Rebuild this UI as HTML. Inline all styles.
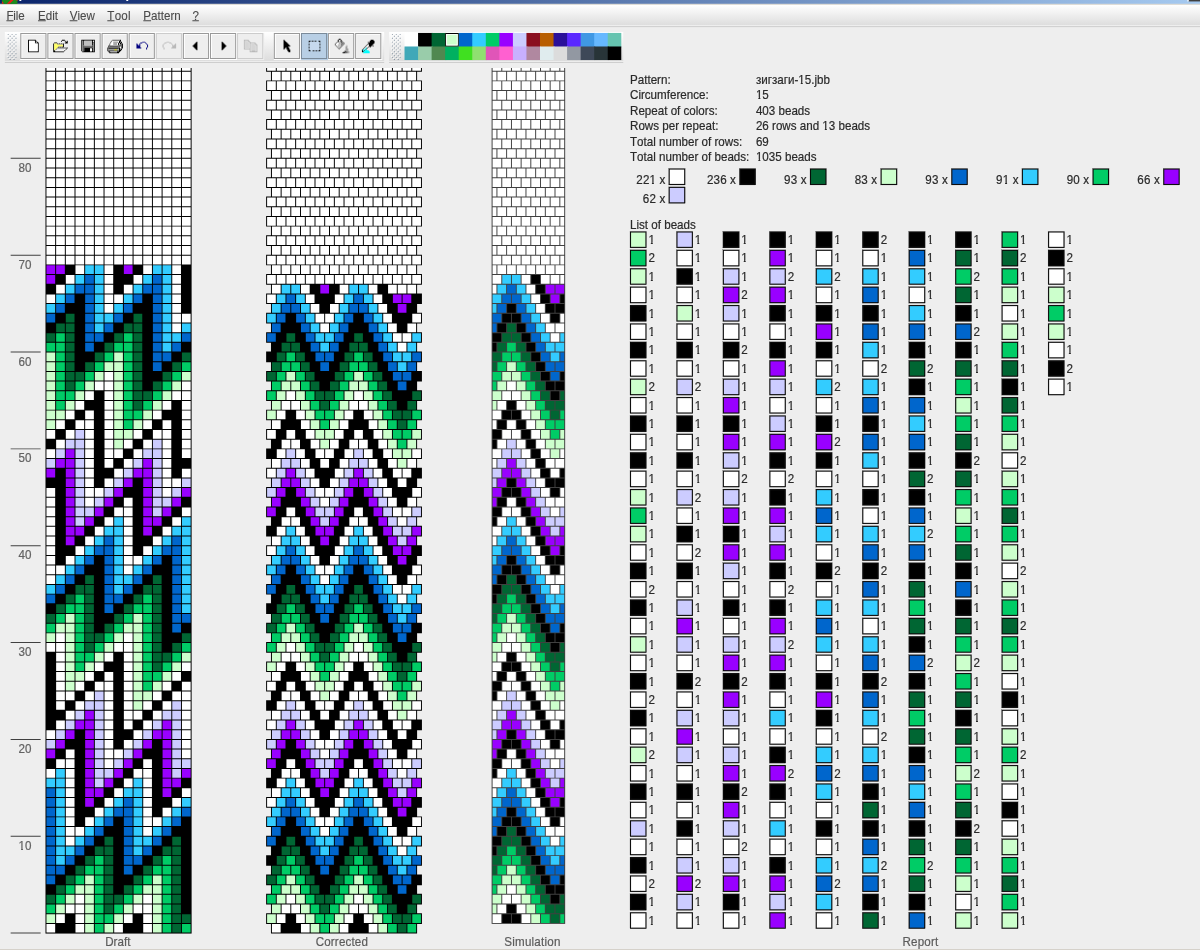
<!DOCTYPE html>
<html lang="en"><head><meta charset="utf-8"><title>JBead - зигзаги-15.jbb</title>
<style>html,body{margin:0;padding:0;background:#eeeeee;overflow:hidden}body{width:1200px;height:951px}svg{display:block;position:absolute;left:0;top:0;will-change:transform}text{white-space:pre}</style></head>
<body>
<svg width="1200" height="951" viewBox="0 0 1240 982" preserveAspectRatio="none">
<defs><linearGradient id="tb" x1="0" y1="0" x2="1" y2="0"><stop offset="0" stop-color="#0a246a"/><stop offset="1" stop-color="#a6caf0"/></linearGradient><linearGradient id="mg" gradientUnits="userSpaceOnUse" x1="0" y1="5" x2="0" y2="28"><stop offset="0" stop-color="#ffffff"/><stop offset="1" stop-color="#dadada"/></linearGradient><linearGradient id="tg" gradientUnits="userSpaceOnUse" x1="0" y1="33" x2="0" y2="65"><stop offset="0" stop-color="#ffffff"/><stop offset="1" stop-color="#dadada"/></linearGradient></defs>
<rect x="0" y="0" width="1240" height="982" fill="#eeeeee"/>
<rect x="0" y="0" width="1240" height="4" fill="url(#tb)"/>
<rect x="0" y="4" width="1240" height="1" fill="#d4d0c8"/>
<rect x="2" y="0" width="16" height="4" fill="#1c8c1c"/>
<path d="M2 1l2 3h-2zM7 4l4 -4h3l-4 4zM16.5 0h1.5v1z" fill="#f01818"/>
<path d="M20 0h2v1h-2zM130.5 0h2v1h-2z" fill="#ffffff"/>
<path d="M1228 0h12v1.5h-12z" fill="#404040"/><path d="M1227 0h1.3v1.5h-1.3z" fill="#ffffff"/>
<rect x="0" y="5" width="1240" height="21" fill="url(#mg)"/>
<rect x="0" y="26" width="1240" height="1" fill="#eeeeee"/>
<rect x="0" y="27" width="1240" height="1" fill="#cccccc"/>
<rect x="0" y="980" width="1240" height="1" fill="#d4d0c8"/>
<rect x="0" y="981" width="1240" height="1" fill="#ffffff"/>
<g font-family="'Liberation Sans','DejaVu Sans',sans-serif" font-size="12" fill="#4a4a4a" stroke="#4a4a4a" stroke-width="0.1" style="font-kerning:none">
<text transform="matrix(1 0 0 1.035 6.6 20.3)" x="0 7.18 9.71 12.23">File</text>
<text transform="matrix(1 0 0 1.035 39.3 20.3)">Edit</text>
<text transform="matrix(1 0 0 1.035 72 20.3)">View</text>
<text transform="matrix(1 0 0 1.035 110.9 20.3)" x="0 7.58 14.51 21.43">Tool</text>
<text transform="matrix(1 0 0 1.035 148.1 20.3)">Pattern</text>
<text transform="matrix(1 0 0 1.035 198.8 20.3)">?</text>
</g>
<path d="M6.6 21h7.3v1h-7.3zM39.3 21h8.0v1h-8.0zM72.0 21h8.0v1h-8.0zM110.9 21h7.3v1h-7.3zM148.1 21h8.0v1h-8.0zM198.8 21h6.7v1h-6.7z" fill="#4a4a4a"/>
<rect x="5" y="33" width="392" height="30" fill="url(#tg)"/>
<rect x="5" y="63" width="392" height="1" fill="#eeeeee"/>
<rect x="5" y="64" width="392" height="1" fill="#cccccc"/>
<path d="M7 34h1v1h-1zM11 34h1v1h-1zM15 34h1v1h-1zM9 36h1v1h-1zM13 36h1v1h-1zM7 38h1v1h-1zM11 38h1v1h-1zM15 38h1v1h-1zM9 40h1v1h-1zM13 40h1v1h-1zM7 42h1v1h-1zM11 42h1v1h-1zM15 42h1v1h-1zM9 44h1v1h-1zM13 44h1v1h-1zM7 46h1v1h-1zM11 46h1v1h-1zM15 46h1v1h-1zM9 48h1v1h-1zM13 48h1v1h-1zM7 50h1v1h-1zM11 50h1v1h-1zM15 50h1v1h-1zM9 52h1v1h-1zM13 52h1v1h-1zM7 54h1v1h-1zM11 54h1v1h-1zM15 54h1v1h-1zM9 56h1v1h-1zM13 56h1v1h-1zM7 58h1v1h-1zM11 58h1v1h-1zM15 58h1v1h-1zM9 60h1v1h-1zM13 60h1v1h-1z" fill="#ffffff"/>
<path d="M8 35h1v1h-1zM12 35h1v1h-1zM16 35h1v1h-1zM10 37h1v1h-1zM14 37h1v1h-1zM8 39h1v1h-1zM12 39h1v1h-1zM16 39h1v1h-1zM10 41h1v1h-1zM14 41h1v1h-1zM8 43h1v1h-1zM12 43h1v1h-1zM16 43h1v1h-1zM10 45h1v1h-1zM14 45h1v1h-1zM8 47h1v1h-1zM12 47h1v1h-1zM16 47h1v1h-1zM10 49h1v1h-1zM14 49h1v1h-1zM8 51h1v1h-1zM12 51h1v1h-1zM16 51h1v1h-1zM10 53h1v1h-1zM14 53h1v1h-1zM8 55h1v1h-1zM12 55h1v1h-1zM16 55h1v1h-1zM10 57h1v1h-1zM14 57h1v1h-1zM8 59h1v1h-1zM12 59h1v1h-1zM16 59h1v1h-1zM10 61h1v1h-1zM14 61h1v1h-1z" fill="#7a8a99"/>
<rect x="21" y="34" width="28" height="28" fill="#eeeeee"/>
<path d="M22 35h25v1h-24v24h-1zM48 34h1v28h-28v-1h27z" fill="#ffffff"/>
<path d="M21 34h27v27h-27zM22 35v25h25v-25z" fill="#999999" fill-rule="evenodd"/>
<rect x="49" y="34" width="28" height="28" fill="#eeeeee"/>
<path d="M50 35h25v1h-24v24h-1zM76 34h1v28h-28v-1h27z" fill="#ffffff"/>
<path d="M49 34h27v27h-27zM50 35v25h25v-25z" fill="#999999" fill-rule="evenodd"/>
<rect x="77" y="34" width="28" height="28" fill="#eeeeee"/>
<path d="M78 35h25v1h-24v24h-1zM104 34h1v28h-28v-1h27z" fill="#ffffff"/>
<path d="M77 34h27v27h-27zM78 35v25h25v-25z" fill="#999999" fill-rule="evenodd"/>
<rect x="105" y="34" width="28" height="28" fill="#eeeeee"/>
<path d="M106 35h25v1h-24v24h-1zM132 34h1v28h-28v-1h27z" fill="#ffffff"/>
<path d="M105 34h27v27h-27zM106 35v25h25v-25z" fill="#999999" fill-rule="evenodd"/>
<rect x="133" y="34" width="28" height="28" fill="#eeeeee"/>
<path d="M134 35h25v1h-24v24h-1zM160 34h1v28h-28v-1h27z" fill="#ffffff"/>
<path d="M133 34h27v27h-27zM134 35v25h25v-25z" fill="#999999" fill-rule="evenodd"/>
<rect x="161" y="34" width="28" height="28" fill="#eeeeee"/>
<path d="M161 34h27v27h-27zM162 35v25h25v-25z" fill="#cccccc" fill-rule="evenodd"/>
<rect x="189" y="34" width="28" height="28" fill="#eeeeee"/>
<path d="M190 35h25v1h-24v24h-1zM216 34h1v28h-28v-1h27z" fill="#ffffff"/>
<path d="M189 34h27v27h-27zM190 35v25h25v-25z" fill="#999999" fill-rule="evenodd"/>
<rect x="217" y="34" width="28" height="28" fill="#eeeeee"/>
<path d="M218 35h25v1h-24v24h-1zM244 34h1v28h-28v-1h27z" fill="#ffffff"/>
<path d="M217 34h27v27h-27zM218 35v25h25v-25z" fill="#999999" fill-rule="evenodd"/>
<rect x="245" y="34" width="28" height="28" fill="#eeeeee"/>
<path d="M245 34h27v27h-27zM246 35v25h25v-25z" fill="#cccccc" fill-rule="evenodd"/>
<rect x="283" y="34" width="28" height="28" fill="#eeeeee"/>
<path d="M284 35h25v1h-24v24h-1zM310 34h1v28h-28v-1h27z" fill="#ffffff"/>
<path d="M283 34h27v27h-27zM284 35v25h25v-25z" fill="#999999" fill-rule="evenodd"/>
<rect x="311" y="34" width="28" height="28" fill="#b8cfe5"/>
<path d="M311 34h27v27h-27zM312 35v25h25v-25z" fill="#7a8a99" fill-rule="evenodd"/>
<rect x="339" y="34" width="28" height="28" fill="#eeeeee"/>
<path d="M340 35h25v1h-24v24h-1zM366 34h1v28h-28v-1h27z" fill="#ffffff"/>
<path d="M339 34h27v27h-27zM340 35v25h25v-25z" fill="#999999" fill-rule="evenodd"/>
<rect x="367" y="34" width="28" height="28" fill="#eeeeee"/>
<path d="M368 35h25v1h-24v24h-1zM394 34h1v28h-28v-1h27z" fill="#ffffff"/>
<path d="M367 34h27v27h-27zM368 35v25h25v-25z" fill="#999999" fill-rule="evenodd"/>
<rect x="402" y="33" width="242" height="30" fill="url(#tg)"/>
<rect x="402" y="63" width="242" height="1" fill="#eeeeee"/>
<rect x="402" y="64" width="242" height="1" fill="#cccccc"/>
<path d="M404 34h1v1h-1zM408 34h1v1h-1zM412 34h1v1h-1zM406 36h1v1h-1zM410 36h1v1h-1zM404 38h1v1h-1zM408 38h1v1h-1zM412 38h1v1h-1zM406 40h1v1h-1zM410 40h1v1h-1zM404 42h1v1h-1zM408 42h1v1h-1zM412 42h1v1h-1zM406 44h1v1h-1zM410 44h1v1h-1zM404 46h1v1h-1zM408 46h1v1h-1zM412 46h1v1h-1zM406 48h1v1h-1zM410 48h1v1h-1zM404 50h1v1h-1zM408 50h1v1h-1zM412 50h1v1h-1zM406 52h1v1h-1zM410 52h1v1h-1zM404 54h1v1h-1zM408 54h1v1h-1zM412 54h1v1h-1zM406 56h1v1h-1zM410 56h1v1h-1zM404 58h1v1h-1zM408 58h1v1h-1zM412 58h1v1h-1zM406 60h1v1h-1zM410 60h1v1h-1z" fill="#ffffff"/>
<path d="M405 35h1v1h-1zM409 35h1v1h-1zM413 35h1v1h-1zM407 37h1v1h-1zM411 37h1v1h-1zM405 39h1v1h-1zM409 39h1v1h-1zM413 39h1v1h-1zM407 41h1v1h-1zM411 41h1v1h-1zM405 43h1v1h-1zM409 43h1v1h-1zM413 43h1v1h-1zM407 45h1v1h-1zM411 45h1v1h-1zM405 47h1v1h-1zM409 47h1v1h-1zM413 47h1v1h-1zM407 49h1v1h-1zM411 49h1v1h-1zM405 51h1v1h-1zM409 51h1v1h-1zM413 51h1v1h-1zM407 53h1v1h-1zM411 53h1v1h-1zM405 55h1v1h-1zM409 55h1v1h-1zM413 55h1v1h-1zM407 57h1v1h-1zM411 57h1v1h-1zM405 59h1v1h-1zM409 59h1v1h-1zM413 59h1v1h-1zM407 61h1v1h-1zM411 61h1v1h-1z" fill="#7a8a99"/>
<rect x="418" y="34" width="15" height="15" fill="#ffffff"/>
<rect x="432" y="34" width="15" height="15" fill="#000000"/>
<rect x="446" y="34" width="15" height="15" fill="#006633"/>
<rect x="460" y="34" width="15" height="15" fill="#ccffcc"/>
<rect x="474" y="34" width="15" height="15" fill="#0066cc"/>
<rect x="488" y="34" width="15" height="15" fill="#33ccff"/>
<rect x="502" y="34" width="15" height="15" fill="#00cc66"/>
<rect x="516" y="34" width="15" height="15" fill="#9900ff"/>
<rect x="530" y="34" width="15" height="15" fill="#ccccff"/>
<rect x="544" y="34" width="15" height="15" fill="#8a0e1e"/>
<rect x="558" y="34" width="15" height="15" fill="#b85e00"/>
<rect x="572" y="34" width="15" height="15" fill="#2a109a"/>
<rect x="586" y="34" width="15" height="15" fill="#5a28ff"/>
<rect x="600" y="34" width="15" height="15" fill="#4098e4"/>
<rect x="614" y="34" width="15" height="15" fill="#66b8ff"/>
<rect x="628" y="34" width="14" height="15" fill="#66c4b0"/>
<rect x="418" y="48" width="15" height="14" fill="#40a8b8"/>
<rect x="432" y="48" width="15" height="14" fill="#99ccaa"/>
<rect x="446" y="48" width="15" height="14" fill="#508850"/>
<rect x="460" y="48" width="15" height="14" fill="#00b060"/>
<rect x="474" y="48" width="15" height="14" fill="#40e020"/>
<rect x="488" y="48" width="15" height="14" fill="#90e070"/>
<rect x="502" y="48" width="15" height="14" fill="#e055b8"/>
<rect x="516" y="48" width="15" height="14" fill="#ff60d0"/>
<rect x="530" y="48" width="15" height="14" fill="#c8b0ff"/>
<rect x="544" y="48" width="15" height="14" fill="#b088a0"/>
<rect x="558" y="48" width="15" height="14" fill="#e0ecee"/>
<rect x="572" y="48" width="15" height="14" fill="#dcdcdc"/>
<rect x="586" y="48" width="15" height="14" fill="#9298a2"/>
<rect x="600" y="48" width="15" height="14" fill="#3e4858"/>
<rect x="614" y="48" width="15" height="14" fill="#283438"/>
<rect x="628" y="48" width="14" height="14" fill="#000000"/>
<path d="M460 34h14v14h-14zM461 35v12h12v-12z" fill="#000000" fill-rule="evenodd"/>
<path d="M461 35h12v12h-12zM462 36v10h10v-10z" fill="#ffffff" fill-rule="evenodd"/>
<path d="M29 41h8v1h-8zM29 42h1v1h-1zM36 42h2v1h-2zM29 43h1v1h-1zM36 43h1v1h-1zM38 43h1v1h-1zM29 44h1v1h-1zM36 44h4v1h-4zM29 45h1v1h-1zM39 45h1v1h-1zM29 46h1v1h-1zM39 46h1v1h-1zM29 47h1v1h-1zM39 47h1v1h-1zM29 48h1v1h-1zM39 48h1v1h-1zM29 49h1v1h-1zM39 49h1v1h-1zM29 50h1v1h-1zM39 50h1v1h-1zM29 51h1v1h-1zM39 51h1v1h-1zM29 52h1v1h-1zM39 52h1v1h-1zM29 53h11v1h-11zM64 41h3v1h-3zM63 42h1v1h-1zM67 42h1v1h-1zM69 42h1v1h-1zM68 43h2v1h-2zM56 44h3v1h-3zM67 44h3v1h-3zM55 45h1v1h-1zM59 45h1v1h-1zM61 45h1v1h-1zM63 45h1v1h-1zM65 45h1v1h-1zM55 46h1v1h-1zM65 46h1v1h-1zM55 47h1v1h-1zM65 47h1v1h-1zM55 48h1v1h-1zM60 48h1v1h-1zM62 48h1v1h-1zM64 48h2v1h-2zM55 49h1v1h-1zM59 49h1v1h-1zM69 49h1v1h-1zM55 50h1v1h-1zM58 50h1v1h-1zM68 50h1v1h-1zM55 51h1v1h-1zM57 51h1v1h-1zM67 51h1v1h-1zM55 52h2v1h-2zM66 52h1v1h-1zM55 53h11v1h-11zM84 41h14v1h-14zM84 42h1v1h-1zM86 42h1v1h-1zM95 42h1v1h-1zM97 42h1v1h-1zM84 43h1v1h-1zM86 43h1v1h-1zM95 43h3v1h-3zM84 44h1v1h-1zM86 44h1v1h-1zM95 44h1v1h-1zM97 44h1v1h-1zM84 45h1v1h-1zM86 45h1v1h-1zM95 45h1v1h-1zM97 45h1v1h-1zM84 46h1v1h-1zM86 46h1v1h-1zM95 46h1v1h-1zM97 46h1v1h-1zM84 47h1v1h-1zM97 47h1v1h-1zM84 48h1v1h-1zM97 48h1v1h-1zM84 49h1v1h-1zM87 49h9v1h-9zM97 49h1v1h-1zM84 50h1v1h-1zM87 50h6v1h-6zM95 50h1v1h-1zM97 50h1v1h-1zM84 51h1v1h-1zM87 51h6v1h-6zM95 51h1v1h-1zM97 51h1v1h-1zM84 52h1v1h-1zM87 52h6v1h-6zM95 52h1v1h-1zM97 52h1v1h-1zM85 53h13v1h-13zM124 41h1v1h-1zM115 42h1v1h-1zM123 42h2v1h-2zM123 43h1v1h-1zM125 43h1v1h-1zM114 44h1v1h-1zM122 44h4v1h-4zM122 45h1v1h-1zM124 45h1v1h-1zM126 45h1v1h-1zM113 46h1v1h-1zM122 46h2v1h-2zM126 46h1v1h-1zM112 47h1v1h-1zM125 47h2v1h-2zM112 48h1v1h-1zM122 48h1v1h-1zM126 48h1v1h-1zM111 49h1v1h-1zM123 49h1v1h-1zM126 49h1v1h-1zM111 50h1v1h-1zM123 50h1v1h-1zM125 50h1v1h-1zM111 51h1v1h-1zM123 51h3v1h-3zM111 52h1v1h-1zM123 52h2v1h-2zM112 53h2v1h-2zM121 53h3v1h-3zM113 54h10v1h-10zM203 43h1v1h-1zM202 44h2v1h-2zM201 45h3v1h-3zM200 46h4v1h-4zM199 47h5v1h-5zM200 48h4v1h-4zM201 49h3v1h-3zM202 50h2v1h-2zM203 51h1v1h-1zM229 43h1v1h-1zM229 44h2v1h-2zM229 45h3v1h-3zM229 46h4v1h-4zM229 47h5v1h-5zM229 48h4v1h-4zM229 49h3v1h-3zM229 50h2v1h-2zM229 51h1v1h-1zM293 41h1v1h-1zM293 42h2v1h-2zM293 43h3v1h-3zM293 44h4v1h-4zM293 45h5v1h-5zM293 46h6v1h-6zM293 47h7v1h-7zM293 48h5v1h-5zM293 49h2v1h-2zM296 49h3v1h-3zM293 50h1v1h-1zM296 50h3v1h-3zM297 51h3v1h-3zM297 52h3v1h-3zM298 53h2v1h-2zM319 42h2v1h-2zM322 42h2v1h-2zM325 42h2v1h-2zM329 42h2v1h-2zM319 43h1v1h-1zM330 43h1v1h-1zM319 45h1v1h-1zM330 45h1v1h-1zM319 46h1v1h-1zM330 46h1v1h-1zM319 48h1v1h-1zM330 48h1v1h-1zM319 49h1v1h-1zM330 49h1v1h-1zM319 51h1v1h-1zM330 51h1v1h-1zM319 52h2v1h-2zM323 52h2v1h-2zM326 52h2v1h-2zM329 52h2v1h-2zM350 40h2v1h-2zM349 41h1v1h-1zM352 41h1v1h-1zM349 42h1v1h-1zM352 42h1v1h-1zM349 43h1v1h-1zM352 43h1v1h-1zM350 44h1v1h-1zM352 44h1v1h-1zM356 53h2v1h-2zM354 54h3v1h-3zM383 41h3v1h-3zM382 42h5v1h-5zM380 43h1v1h-1zM382 43h5v1h-5zM381 44h6v1h-6zM380 45h6v1h-6zM379 46h1v1h-1zM381 46h4v1h-4zM378 47h1v1h-1zM381 47h3v1h-3zM385 47h1v1h-1zM377 48h1v1h-1zM380 48h1v1h-1zM382 48h1v1h-1zM376 49h1v1h-1zM379 49h1v1h-1zM375 50h1v1h-1zM378 50h1v1h-1zM374 51h1v1h-1zM377 51h1v1h-1zM374 52h1v1h-1zM376 52h1v1h-1zM374 53h2v1h-2z" fill="#000000"/>
<path d="M30 42h6v1h-6zM30 43h6v1h-6zM37 43h1v1h-1zM30 44h6v1h-6zM30 45h9v1h-9zM30 46h9v1h-9zM30 47h9v1h-9zM30 48h9v1h-9zM30 49h9v1h-9zM30 50h9v1h-9zM30 51h9v1h-9zM30 52h9v1h-9zM59 50h9v1h-9zM66 51h1v1h-1zM57 52h9v1h-9zM96 42h1v1h-1zM93 50h2v1h-2zM93 51h2v1h-2zM93 52h2v1h-2zM116 42h7v1h-7zM115 43h2v1h-2zM122 43h1v1h-1zM115 44h7v1h-7zM114 45h3v1h-3zM121 45h1v1h-1zM123 45h1v1h-1zM114 46h8v1h-8zM124 48h1v1h-1zM124 49h1v1h-1zM112 51h6v1h-6zM121 51h2v1h-2zM350 43h1v1h-1zM348 44h2v1h-2zM347 45h3v1h-3zM347 46h2v1h-2zM348 47h1v1h-1zM380 46h1v1h-1zM379 47h2v1h-2zM378 48h2v1h-2zM377 49h1v1h-1zM376 50h1v1h-1z" fill="#ffffff"/>
<path d="M56 45h3v1h-3zM56 46h9v1h-9zM56 47h9v1h-9zM56 48h4v1h-4zM56 49h3v1h-3zM56 50h2v1h-2zM56 51h1v1h-1z" fill="#ffff66"/>
<path d="M60 45h1v1h-1zM62 45h1v1h-1zM64 45h1v1h-1zM61 48h1v1h-1zM63 48h1v1h-1zM85 42h1v1h-1zM85 43h1v1h-1zM85 44h1v1h-1zM96 44h1v1h-1zM85 45h1v1h-1zM96 45h1v1h-1zM85 46h1v1h-1zM96 46h1v1h-1zM85 47h1v1h-1zM96 47h1v1h-1zM85 48h1v1h-1zM96 48h1v1h-1zM85 49h1v1h-1zM96 49h1v1h-1zM85 50h1v1h-1zM96 50h1v1h-1zM85 51h1v1h-1zM96 51h1v1h-1zM85 52h1v1h-1zM96 52h1v1h-1zM353 43h1v1h-1zM353 44h2v1h-2zM352 45h3v1h-3zM352 46h2v1h-2zM352 47h1v1h-1zM351 48h1v1h-1zM350 49h1v1h-1zM355 53h1v1h-1zM359 53h1v1h-1zM359 54h1v1h-1z" fill="#808080"/>
<path d="M60 49h9v1h-9zM87 47h8v1h-8zM116 41h8v1h-8zM114 43h1v1h-1zM117 43h5v1h-5zM113 45h1v1h-1zM117 45h4v1h-4zM125 45h1v1h-1zM124 46h2v1h-2zM113 47h12v1h-12zM113 48h9v1h-9zM123 48h1v1h-1zM125 48h1v1h-1zM122 49h1v1h-1zM125 49h1v1h-1zM122 50h1v1h-1zM124 50h1v1h-1zM122 52h1v1h-1zM351 42h1v1h-1zM353 42h1v1h-1zM348 43h1v1h-1zM354 43h1v1h-1zM347 44h1v1h-1zM355 44h1v1h-1zM346 45h1v1h-1zM355 45h1v1h-1zM346 46h1v1h-1zM354 46h1v1h-1zM347 47h1v1h-1zM353 47h1v1h-1zM348 48h1v1h-1zM352 48h1v1h-1zM349 49h1v1h-1zM351 49h1v1h-1zM350 50h1v1h-1zM358 52h1v1h-1zM358 53h1v1h-1zM357 54h2v1h-2z" fill="#606060"/>
<path d="M58 51h8v1h-8zM357 46h2v1h-2zM357 47h1v1h-1z" fill="#e0e0e0"/>
<path d="M87 42h8v1h-8zM87 43h8v1h-8zM87 44h8v1h-8zM87 45h8v1h-8zM87 46h8v1h-8zM114 53h7v1h-7zM351 43h1v1h-1zM351 44h1v1h-1zM350 45h2v1h-2zM349 46h3v1h-3zM349 47h3v1h-3zM349 48h2v1h-2z" fill="#c0c0c0"/>
<path d="M86 47h1v1h-1zM95 47h1v1h-1zM86 48h10v1h-10zM86 49h1v1h-1zM86 50h1v1h-1zM86 51h1v1h-1zM86 52h1v1h-1zM112 49h10v1h-10zM112 50h10v1h-10zM112 52h10v1h-10z" fill="#404040"/>
<path d="M118 51h3v1h-3z" fill="#d0d000"/>
<path d="M147 43h3v1h-3zM145 44h2v1h-2zM150 44h1v1h-1zM141 45h1v1h-1zM144 45h1v1h-1zM151 45h1v1h-1zM141 46h2v1h-2zM144 46h1v1h-1zM152 46h1v1h-1zM141 47h4v1h-4zM152 47h1v1h-1zM141 48h4v1h-4zM152 48h1v1h-1zM141 49h5v1h-5zM151 49h1v1h-1zM151 50h1v1h-1z" fill="#000080"/>
<path d="M172 43h3v1h-3zM170 44h2v1h-2zM175 44h2v1h-2zM169 45h1v1h-1zM177 45h1v1h-1zM181 45h1v1h-1zM168 46h1v1h-1zM178 46h1v1h-1zM180 46h2v1h-2zM168 47h1v1h-1zM178 47h4v1h-4zM168 48h1v1h-1zM178 48h4v1h-4zM169 49h1v1h-1zM177 49h5v1h-5zM169 50h1v1h-1zM252 41h5v1h-5zM252 42h1v1h-1zM256 42h2v1h-2zM252 43h1v1h-1zM254 43h2v1h-2zM257 43h2v1h-2zM252 44h1v1h-1zM258 44h6v1h-6zM252 45h1v1h-1zM254 45h3v1h-3zM258 45h1v1h-1zM263 45h2v1h-2zM252 46h1v1h-1zM258 46h1v1h-1zM260 46h3v1h-3zM264 46h2v1h-2zM252 47h1v1h-1zM254 47h3v1h-3zM258 47h1v1h-1zM265 47h1v1h-1zM252 48h1v1h-1zM258 48h1v1h-1zM260 48h4v1h-4zM265 48h1v1h-1zM252 49h1v1h-1zM258 49h1v1h-1zM265 49h1v1h-1zM252 50h7v1h-7zM260 50h4v1h-4zM265 50h1v1h-1zM258 51h1v1h-1zM265 51h1v1h-1zM258 52h1v1h-1zM260 52h4v1h-4zM265 52h1v1h-1zM258 53h8v1h-8z" fill="#b9b9b9"/>
<path d="M253 42h3v1h-3zM253 43h1v1h-1zM256 43h1v1h-1zM253 44h5v1h-5zM253 45h1v1h-1zM257 45h1v1h-1zM259 45h4v1h-4zM253 46h5v1h-5zM259 46h1v1h-1zM263 46h1v1h-1zM253 47h1v1h-1zM257 47h1v1h-1zM259 47h6v1h-6zM253 48h5v1h-5zM259 48h1v1h-1zM264 48h1v1h-1zM253 49h5v1h-5zM259 49h6v1h-6zM259 50h1v1h-1zM264 50h1v1h-1zM259 51h6v1h-6zM259 52h1v1h-1zM264 52h1v1h-1z" fill="#d6d6d6"/>
<path d="M320 43h10v1h-10zM320 44h10v1h-10zM320 45h10v1h-10zM320 46h10v1h-10zM320 47h10v1h-10zM320 48h10v1h-10zM320 49h10v1h-10zM320 50h10v1h-10zM320 51h10v1h-10z" fill="#c6d9ee"/>
<path d="M358 47h1v1h-1zM357 48h2v1h-2zM357 49h2v1h-2zM357 50h3v1h-3zM357 51h3v1h-3zM356 52h2v1h-2zM359 52h1v1h-1zM360 53h1v1h-1zM360 54h1v1h-1z" fill="#a0a0a0"/>
<path d="M378 49h1v1h-1zM377 50h1v1h-1zM375 51h2v1h-2zM378 51h1v1h-1zM375 52h1v1h-1zM377 52h4v1h-4zM376 53h6v1h-6zM375 54h7v1h-7z" fill="#00ffff"/>
<rect x="47" y="70.2166" width="151" height="893.7834" fill="#000000"/>
<path d="M48 954h9v9h-9zM78 954h9v9h-9zM118 954h9v9h-9zM148 954h9v9h-9zM58 944h9v9h-9zM78 944h9v9h-9zM128 944h9v9h-9zM148 944h9v9h-9zM68 934h9v9h-9zM78 934h9v9h-9zM138 934h9v9h-9zM148 934h9v9h-9zM78 924h9v9h-9zM148 924h9v9h-9zM68 864h9v9h-9zM68 854h9v9h-9zM78 854h9v9h-9zM148 854h9v9h-9zM68 844h9v9h-9zM88 844h9v9h-9zM148 844h9v9h-9zM158 844h9v9h-9zM68 834h9v9h-9zM98 834h9v9h-9zM148 834h9v9h-9zM168 834h9v9h-9zM68 824h9v9h-9zM108 824h9v9h-9zM148 824h9v9h-9zM178 824h9v9h-9zM68 814h9v9h-9zM118 814h9v9h-9zM148 814h9v9h-9zM188 814h9v9h-9zM68 804h9v9h-9zM128 804h9v9h-9zM148 804h9v9h-9zM48 794h9v9h-9zM68 794h9v9h-9zM138 794h9v9h-9zM148 794h9v9h-9zM58 784h9v9h-9zM68 784h9v9h-9zM108 784h9v9h-9zM148 784h9v9h-9zM68 774h9v9h-9zM108 774h9v9h-9zM118 774h9v9h-9zM188 774h9v9h-9zM108 764h9v9h-9zM128 764h9v9h-9zM188 764h9v9h-9zM48 754h9v9h-9zM108 754h9v9h-9zM138 754h9v9h-9zM188 754h9v9h-9zM58 744h9v9h-9zM108 744h9v9h-9zM128 744h9v9h-9zM148 744h9v9h-9zM188 744h9v9h-9zM68 734h9v9h-9zM108 734h9v9h-9zM128 734h9v9h-9zM138 734h9v9h-9zM158 734h9v9h-9zM188 734h9v9h-9zM58 724h9v9h-9zM78 724h9v9h-9zM108 724h9v9h-9zM128 724h9v9h-9zM148 724h9v9h-9zM168 724h9v9h-9zM188 724h9v9h-9zM58 714h9v9h-9zM68 714h9v9h-9zM88 714h9v9h-9zM108 714h9v9h-9zM128 714h9v9h-9zM158 714h9v9h-9zM178 714h9v9h-9zM188 714h9v9h-9zM58 704h9v9h-9zM78 704h9v9h-9zM98 704h9v9h-9zM108 704h9v9h-9zM128 704h9v9h-9zM168 704h9v9h-9zM188 704h9v9h-9zM58 694h9v9h-9zM88 694h9v9h-9zM108 694h9v9h-9zM128 694h9v9h-9zM178 694h9v9h-9zM58 684h9v9h-9zM98 684h9v9h-9zM128 684h9v9h-9zM188 684h9v9h-9zM58 674h9v9h-9zM108 674h9v9h-9zM128 674h9v9h-9zM48 664h9v9h-9zM58 664h9v9h-9zM118 664h9v9h-9zM128 664h9v9h-9zM58 654h9v9h-9zM128 654h9v9h-9zM48 594h9v9h-9zM48 584h9v9h-9zM58 584h9v9h-9zM128 584h9v9h-9zM48 574h9v9h-9zM68 574h9v9h-9zM128 574h9v9h-9zM138 574h9v9h-9zM48 564h9v9h-9zM78 564h9v9h-9zM128 564h9v9h-9zM148 564h9v9h-9zM48 554h9v9h-9zM88 554h9v9h-9zM128 554h9v9h-9zM158 554h9v9h-9zM48 544h9v9h-9zM98 544h9v9h-9zM128 544h9v9h-9zM168 544h9v9h-9zM48 534h9v9h-9zM108 534h9v9h-9zM128 534h9v9h-9zM178 534h9v9h-9zM48 524h9v9h-9zM118 524h9v9h-9zM128 524h9v9h-9zM188 524h9v9h-9zM48 514h9v9h-9zM88 514h9v9h-9zM128 514h9v9h-9zM48 504h9v9h-9zM88 504h9v9h-9zM98 504h9v9h-9zM168 504h9v9h-9zM88 494h9v9h-9zM108 494h9v9h-9zM168 494h9v9h-9zM178 494h9v9h-9zM88 484h9v9h-9zM118 484h9v9h-9zM168 484h9v9h-9zM188 484h9v9h-9zM88 474h9v9h-9zM108 474h9v9h-9zM128 474h9v9h-9zM168 474h9v9h-9zM48 464h9v9h-9zM88 464h9v9h-9zM108 464h9v9h-9zM118 464h9v9h-9zM138 464h9v9h-9zM168 464h9v9h-9zM188 464h9v9h-9zM58 454h9v9h-9zM88 454h9v9h-9zM108 454h9v9h-9zM128 454h9v9h-9zM148 454h9v9h-9zM168 454h9v9h-9zM188 454h9v9h-9zM48 444h9v9h-9zM68 444h9v9h-9zM88 444h9v9h-9zM108 444h9v9h-9zM138 444h9v9h-9zM158 444h9v9h-9zM168 444h9v9h-9zM188 444h9v9h-9zM58 434h9v9h-9zM78 434h9v9h-9zM88 434h9v9h-9zM108 434h9v9h-9zM148 434h9v9h-9zM168 434h9v9h-9zM188 434h9v9h-9zM68 424h9v9h-9zM88 424h9v9h-9zM108 424h9v9h-9zM158 424h9v9h-9zM188 424h9v9h-9zM78 414h9v9h-9zM108 414h9v9h-9zM168 414h9v9h-9zM188 414h9v9h-9zM88 404h9v9h-9zM108 404h9v9h-9zM178 404h9v9h-9zM188 404h9v9h-9zM98 394h9v9h-9zM108 394h9v9h-9zM188 394h9v9h-9zM108 384h9v9h-9zM178 334h9v9h-9zM178 324h9v9h-9zM188 324h9v9h-9zM108 314h9v9h-9zM178 314h9v9h-9zM48 304h9v9h-9zM108 304h9v9h-9zM118 304h9v9h-9zM178 304h9v9h-9zM58 294h9v9h-9zM108 294h9v9h-9zM128 294h9v9h-9zM178 294h9v9h-9zM68 284h9v9h-9zM108 284h9v9h-9zM138 284h9v9h-9zM178 284h9v9h-9zM78 274h9v9h-9zM108 274h9v9h-9zM148 274h9v9h-9zM178 274h9v9h-9zM48 264h9v9h-9zM58 264h9v9h-9zM68 264h9v9h-9zM78 264h9v9h-9zM88 264h9v9h-9zM98 264h9v9h-9zM108 264h9v9h-9zM118 264h9v9h-9zM128 264h9v9h-9zM138 264h9v9h-9zM148 264h9v9h-9zM158 264h9v9h-9zM168 264h9v9h-9zM178 264h9v9h-9zM188 264h9v9h-9zM48 254h9v9h-9zM58 254h9v9h-9zM68 254h9v9h-9zM78 254h9v9h-9zM88 254h9v9h-9zM98 254h9v9h-9zM108 254h9v9h-9zM118 254h9v9h-9zM128 254h9v9h-9zM138 254h9v9h-9zM148 254h9v9h-9zM158 254h9v9h-9zM168 254h9v9h-9zM178 254h9v9h-9zM188 254h9v9h-9zM48 244h9v9h-9zM58 244h9v9h-9zM68 244h9v9h-9zM78 244h9v9h-9zM88 244h9v9h-9zM98 244h9v9h-9zM108 244h9v9h-9zM118 244h9v9h-9zM128 244h9v9h-9zM138 244h9v9h-9zM148 244h9v9h-9zM158 244h9v9h-9zM168 244h9v9h-9zM178 244h9v9h-9zM188 244h9v9h-9zM48 234h9v9h-9zM58 234h9v9h-9zM68 234h9v9h-9zM78 234h9v9h-9zM88 234h9v9h-9zM98 234h9v9h-9zM108 234h9v9h-9zM118 234h9v9h-9zM128 234h9v9h-9zM138 234h9v9h-9zM148 234h9v9h-9zM158 234h9v9h-9zM168 234h9v9h-9zM178 234h9v9h-9zM188 234h9v9h-9zM48 224h9v9h-9zM58 224h9v9h-9zM68 224h9v9h-9zM78 224h9v9h-9zM88 224h9v9h-9zM98 224h9v9h-9zM108 224h9v9h-9zM118 224h9v9h-9zM128 224h9v9h-9zM138 224h9v9h-9zM148 224h9v9h-9zM158 224h9v9h-9zM168 224h9v9h-9zM178 224h9v9h-9zM188 224h9v9h-9zM48 214h9v9h-9zM58 214h9v9h-9zM68 214h9v9h-9zM78 214h9v9h-9zM88 214h9v9h-9zM98 214h9v9h-9zM108 214h9v9h-9zM118 214h9v9h-9zM128 214h9v9h-9zM138 214h9v9h-9zM148 214h9v9h-9zM158 214h9v9h-9zM168 214h9v9h-9zM178 214h9v9h-9zM188 214h9v9h-9zM48 204h9v9h-9zM58 204h9v9h-9zM68 204h9v9h-9zM78 204h9v9h-9zM88 204h9v9h-9zM98 204h9v9h-9zM108 204h9v9h-9zM118 204h9v9h-9zM128 204h9v9h-9zM138 204h9v9h-9zM148 204h9v9h-9zM158 204h9v9h-9zM168 204h9v9h-9zM178 204h9v9h-9zM188 204h9v9h-9zM48 194h9v9h-9zM58 194h9v9h-9zM68 194h9v9h-9zM78 194h9v9h-9zM88 194h9v9h-9zM98 194h9v9h-9zM108 194h9v9h-9zM118 194h9v9h-9zM128 194h9v9h-9zM138 194h9v9h-9zM148 194h9v9h-9zM158 194h9v9h-9zM168 194h9v9h-9zM178 194h9v9h-9zM188 194h9v9h-9zM48 184h9v9h-9zM58 184h9v9h-9zM68 184h9v9h-9zM78 184h9v9h-9zM88 184h9v9h-9zM98 184h9v9h-9zM108 184h9v9h-9zM118 184h9v9h-9zM128 184h9v9h-9zM138 184h9v9h-9zM148 184h9v9h-9zM158 184h9v9h-9zM168 184h9v9h-9zM178 184h9v9h-9zM188 184h9v9h-9zM48 174h9v9h-9zM58 174h9v9h-9zM68 174h9v9h-9zM78 174h9v9h-9zM88 174h9v9h-9zM98 174h9v9h-9zM108 174h9v9h-9zM118 174h9v9h-9zM128 174h9v9h-9zM138 174h9v9h-9zM148 174h9v9h-9zM158 174h9v9h-9zM168 174h9v9h-9zM178 174h9v9h-9zM188 174h9v9h-9zM48 164h9v9h-9zM58 164h9v9h-9zM68 164h9v9h-9zM78 164h9v9h-9zM88 164h9v9h-9zM98 164h9v9h-9zM108 164h9v9h-9zM118 164h9v9h-9zM128 164h9v9h-9zM138 164h9v9h-9zM148 164h9v9h-9zM158 164h9v9h-9zM168 164h9v9h-9zM178 164h9v9h-9zM188 164h9v9h-9zM48 154h9v9h-9zM58 154h9v9h-9zM68 154h9v9h-9zM78 154h9v9h-9zM88 154h9v9h-9zM98 154h9v9h-9zM108 154h9v9h-9zM118 154h9v9h-9zM128 154h9v9h-9zM138 154h9v9h-9zM148 154h9v9h-9zM158 154h9v9h-9zM168 154h9v9h-9zM178 154h9v9h-9zM188 154h9v9h-9zM48 144h9v9h-9zM58 144h9v9h-9zM68 144h9v9h-9zM78 144h9v9h-9zM88 144h9v9h-9zM98 144h9v9h-9zM108 144h9v9h-9zM118 144h9v9h-9zM128 144h9v9h-9zM138 144h9v9h-9zM148 144h9v9h-9zM158 144h9v9h-9zM168 144h9v9h-9zM178 144h9v9h-9zM188 144h9v9h-9zM48 134h9v9h-9zM58 134h9v9h-9zM68 134h9v9h-9zM78 134h9v9h-9zM88 134h9v9h-9zM98 134h9v9h-9zM108 134h9v9h-9zM118 134h9v9h-9zM128 134h9v9h-9zM138 134h9v9h-9zM148 134h9v9h-9zM158 134h9v9h-9zM168 134h9v9h-9zM178 134h9v9h-9zM188 134h9v9h-9zM48 124h9v9h-9zM58 124h9v9h-9zM68 124h9v9h-9zM78 124h9v9h-9zM88 124h9v9h-9zM98 124h9v9h-9zM108 124h9v9h-9zM118 124h9v9h-9zM128 124h9v9h-9zM138 124h9v9h-9zM148 124h9v9h-9zM158 124h9v9h-9zM168 124h9v9h-9zM178 124h9v9h-9zM188 124h9v9h-9zM48 114h9v9h-9zM58 114h9v9h-9zM68 114h9v9h-9zM78 114h9v9h-9zM88 114h9v9h-9zM98 114h9v9h-9zM108 114h9v9h-9zM118 114h9v9h-9zM128 114h9v9h-9zM138 114h9v9h-9zM148 114h9v9h-9zM158 114h9v9h-9zM168 114h9v9h-9zM178 114h9v9h-9zM188 114h9v9h-9zM48 104h9v9h-9zM58 104h9v9h-9zM68 104h9v9h-9zM78 104h9v9h-9zM88 104h9v9h-9zM98 104h9v9h-9zM108 104h9v9h-9zM118 104h9v9h-9zM128 104h9v9h-9zM138 104h9v9h-9zM148 104h9v9h-9zM158 104h9v9h-9zM168 104h9v9h-9zM178 104h9v9h-9zM188 104h9v9h-9zM48 94h9v9h-9zM58 94h9v9h-9zM68 94h9v9h-9zM78 94h9v9h-9zM88 94h9v9h-9zM98 94h9v9h-9zM108 94h9v9h-9zM118 94h9v9h-9zM128 94h9v9h-9zM138 94h9v9h-9zM148 94h9v9h-9zM158 94h9v9h-9zM168 94h9v9h-9zM178 94h9v9h-9zM188 94h9v9h-9zM48 84h9v9h-9zM58 84h9v9h-9zM68 84h9v9h-9zM78 84h9v9h-9zM88 84h9v9h-9zM98 84h9v9h-9zM108 84h9v9h-9zM118 84h9v9h-9zM128 84h9v9h-9zM138 84h9v9h-9zM148 84h9v9h-9zM158 84h9v9h-9zM168 84h9v9h-9zM178 84h9v9h-9zM188 84h9v9h-9zM48 74h9v9h-9zM58 74h9v9h-9zM68 74h9v9h-9zM78 74h9v9h-9zM88 74h9v9h-9zM98 74h9v9h-9zM108 74h9v9h-9zM118 74h9v9h-9zM128 74h9v9h-9zM138 74h9v9h-9zM148 74h9v9h-9zM158 74h9v9h-9zM168 74h9v9h-9zM178 74h9v9h-9zM188 74h9v9h-9zM48 70.2166h9v2.7834h-9zM58 70.2166h9v2.7834h-9zM68 70.2166h9v2.7834h-9zM78 70.2166h9v2.7834h-9zM88 70.2166h9v2.7834h-9zM98 70.2166h9v2.7834h-9zM108 70.2166h9v2.7834h-9zM118 70.2166h9v2.7834h-9zM128 70.2166h9v2.7834h-9zM138 70.2166h9v2.7834h-9zM148 70.2166h9v2.7834h-9zM158 70.2166h9v2.7834h-9zM168 70.2166h9v2.7834h-9zM178 70.2166h9v2.7834h-9zM188 70.2166h9v2.7834h-9z" fill="#ffffff"/>
<path d="M58 954h9v9h-9zM68 954h9v9h-9zM128 954h9v9h-9zM138 954h9v9h-9zM68 944h9v9h-9zM138 944h9v9h-9zM188 934h9v9h-9zM188 924h9v9h-9zM48 914h9v9h-9zM118 914h9v9h-9zM188 914h9v9h-9zM58 904h9v9h-9zM118 904h9v9h-9zM128 904h9v9h-9zM188 904h9v9h-9zM68 894h9v9h-9zM118 894h9v9h-9zM138 894h9v9h-9zM188 894h9v9h-9zM78 884h9v9h-9zM118 884h9v9h-9zM148 884h9v9h-9zM188 884h9v9h-9zM88 874h9v9h-9zM118 874h9v9h-9zM158 874h9v9h-9zM188 874h9v9h-9zM98 864h9v9h-9zM118 864h9v9h-9zM168 864h9v9h-9zM188 864h9v9h-9zM108 854h9v9h-9zM118 854h9v9h-9zM178 854h9v9h-9zM188 854h9v9h-9zM78 844h9v9h-9zM118 844h9v9h-9zM188 844h9v9h-9zM78 834h9v9h-9zM88 834h9v9h-9zM158 834h9v9h-9zM78 824h9v9h-9zM98 824h9v9h-9zM158 824h9v9h-9zM168 824h9v9h-9zM78 814h9v9h-9zM108 814h9v9h-9zM158 814h9v9h-9zM178 814h9v9h-9zM78 804h9v9h-9zM118 804h9v9h-9zM158 804h9v9h-9zM188 804h9v9h-9zM78 794h9v9h-9zM128 794h9v9h-9zM158 794h9v9h-9zM48 784h9v9h-9zM78 784h9v9h-9zM138 784h9v9h-9zM158 784h9v9h-9zM58 774h9v9h-9zM78 774h9v9h-9zM148 774h9v9h-9zM158 774h9v9h-9zM68 764h9v9h-9zM78 764h9v9h-9zM118 764h9v9h-9zM158 764h9v9h-9zM78 754h9v9h-9zM118 754h9v9h-9zM128 754h9v9h-9zM48 744h9v9h-9zM118 744h9v9h-9zM138 744h9v9h-9zM48 734h9v9h-9zM58 734h9v9h-9zM118 734h9v9h-9zM148 734h9v9h-9zM48 724h9v9h-9zM68 724h9v9h-9zM118 724h9v9h-9zM158 724h9v9h-9zM48 714h9v9h-9zM78 714h9v9h-9zM118 714h9v9h-9zM168 714h9v9h-9zM48 704h9v9h-9zM88 704h9v9h-9zM118 704h9v9h-9zM178 704h9v9h-9zM48 694h9v9h-9zM98 694h9v9h-9zM118 694h9v9h-9zM188 694h9v9h-9zM48 684h9v9h-9zM108 684h9v9h-9zM118 684h9v9h-9zM48 674h9v9h-9zM118 674h9v9h-9zM168 664h9v9h-9zM168 654h9v9h-9zM178 654h9v9h-9zM98 644h9v9h-9zM168 644h9v9h-9zM188 644h9v9h-9zM98 634h9v9h-9zM108 634h9v9h-9zM168 634h9v9h-9zM48 624h9v9h-9zM98 624h9v9h-9zM118 624h9v9h-9zM168 624h9v9h-9zM58 614h9v9h-9zM98 614h9v9h-9zM128 614h9v9h-9zM168 614h9v9h-9zM68 604h9v9h-9zM98 604h9v9h-9zM138 604h9v9h-9zM168 604h9v9h-9zM78 594h9v9h-9zM98 594h9v9h-9zM148 594h9v9h-9zM168 594h9v9h-9zM88 584h9v9h-9zM98 584h9v9h-9zM158 584h9v9h-9zM168 584h9v9h-9zM58 574h9v9h-9zM98 574h9v9h-9zM168 574h9v9h-9zM58 564h9v9h-9zM68 564h9v9h-9zM138 564h9v9h-9zM58 554h9v9h-9zM78 554h9v9h-9zM138 554h9v9h-9zM148 554h9v9h-9zM58 544h9v9h-9zM88 544h9v9h-9zM138 544h9v9h-9zM158 544h9v9h-9zM58 534h9v9h-9zM98 534h9v9h-9zM138 534h9v9h-9zM168 534h9v9h-9zM58 524h9v9h-9zM108 524h9v9h-9zM138 524h9v9h-9zM178 524h9v9h-9zM58 514h9v9h-9zM118 514h9v9h-9zM138 514h9v9h-9zM188 514h9v9h-9zM58 504h9v9h-9zM128 504h9v9h-9zM138 504h9v9h-9zM48 494h9v9h-9zM58 494h9v9h-9zM98 494h9v9h-9zM138 494h9v9h-9zM58 484h9v9h-9zM98 484h9v9h-9zM108 484h9v9h-9zM178 484h9v9h-9zM98 474h9v9h-9zM118 474h9v9h-9zM178 474h9v9h-9zM188 474h9v9h-9zM98 464h9v9h-9zM128 464h9v9h-9zM178 464h9v9h-9zM48 454h9v9h-9zM98 454h9v9h-9zM138 454h9v9h-9zM178 454h9v9h-9zM58 444h9v9h-9zM98 444h9v9h-9zM148 444h9v9h-9zM178 444h9v9h-9zM68 434h9v9h-9zM98 434h9v9h-9zM158 434h9v9h-9zM178 434h9v9h-9zM78 424h9v9h-9zM98 424h9v9h-9zM168 424h9v9h-9zM178 424h9v9h-9zM88 414h9v9h-9zM98 414h9v9h-9zM178 414h9v9h-9zM98 404h9v9h-9zM148 394h9v9h-9zM148 384h9v9h-9zM158 384h9v9h-9zM78 374h9v9h-9zM148 374h9v9h-9zM168 374h9v9h-9zM78 364h9v9h-9zM88 364h9v9h-9zM148 364h9v9h-9zM178 364h9v9h-9zM78 354h9v9h-9zM98 354h9v9h-9zM148 354h9v9h-9zM188 354h9v9h-9zM78 344h9v9h-9zM108 344h9v9h-9zM148 344h9v9h-9zM48 334h9v9h-9zM78 334h9v9h-9zM118 334h9v9h-9zM148 334h9v9h-9zM58 324h9v9h-9zM78 324h9v9h-9zM128 324h9v9h-9zM148 324h9v9h-9zM68 314h9v9h-9zM78 314h9v9h-9zM138 314h9v9h-9zM148 314h9v9h-9zM188 314h9v9h-9zM78 304h9v9h-9zM148 304h9v9h-9zM188 304h9v9h-9zM48 294h9v9h-9zM118 294h9v9h-9zM188 294h9v9h-9zM58 284h9v9h-9zM118 284h9v9h-9zM128 284h9v9h-9zM188 284h9v9h-9zM68 274h9v9h-9zM118 274h9v9h-9zM138 274h9v9h-9zM188 274h9v9h-9z" fill="#000000"/>
<path d="M178 954h9v9h-9zM178 944h9v9h-9zM188 944h9v9h-9zM108 934h9v9h-9zM178 934h9v9h-9zM48 924h9v9h-9zM108 924h9v9h-9zM118 924h9v9h-9zM178 924h9v9h-9zM58 914h9v9h-9zM108 914h9v9h-9zM128 914h9v9h-9zM178 914h9v9h-9zM68 904h9v9h-9zM108 904h9v9h-9zM138 904h9v9h-9zM178 904h9v9h-9zM78 894h9v9h-9zM108 894h9v9h-9zM148 894h9v9h-9zM178 894h9v9h-9zM88 884h9v9h-9zM108 884h9v9h-9zM158 884h9v9h-9zM178 884h9v9h-9zM98 874h9v9h-9zM108 874h9v9h-9zM168 874h9v9h-9zM178 874h9v9h-9zM108 864h9v9h-9zM178 864h9v9h-9zM158 684h9v9h-9zM158 674h9v9h-9zM168 674h9v9h-9zM88 664h9v9h-9zM158 664h9v9h-9zM178 664h9v9h-9zM88 654h9v9h-9zM98 654h9v9h-9zM158 654h9v9h-9zM188 654h9v9h-9zM88 644h9v9h-9zM108 644h9v9h-9zM158 644h9v9h-9zM48 634h9v9h-9zM88 634h9v9h-9zM118 634h9v9h-9zM158 634h9v9h-9zM58 624h9v9h-9zM88 624h9v9h-9zM128 624h9v9h-9zM158 624h9v9h-9zM68 614h9v9h-9zM88 614h9v9h-9zM138 614h9v9h-9zM158 614h9v9h-9zM78 604h9v9h-9zM88 604h9v9h-9zM148 604h9v9h-9zM158 604h9v9h-9zM88 594h9v9h-9zM158 594h9v9h-9zM138 414h9v9h-9zM138 404h9v9h-9zM148 404h9v9h-9zM68 394h9v9h-9zM138 394h9v9h-9zM158 394h9v9h-9zM68 384h9v9h-9zM78 384h9v9h-9zM138 384h9v9h-9zM168 384h9v9h-9zM68 374h9v9h-9zM88 374h9v9h-9zM138 374h9v9h-9zM178 374h9v9h-9zM68 364h9v9h-9zM98 364h9v9h-9zM138 364h9v9h-9zM188 364h9v9h-9zM68 354h9v9h-9zM108 354h9v9h-9zM138 354h9v9h-9zM48 344h9v9h-9zM68 344h9v9h-9zM118 344h9v9h-9zM138 344h9v9h-9zM58 334h9v9h-9zM68 334h9v9h-9zM128 334h9v9h-9zM138 334h9v9h-9zM68 324h9v9h-9zM138 324h9v9h-9z" fill="#006633"/>
<path d="M88 954h9v9h-9zM108 954h9v9h-9zM158 954h9v9h-9zM48 944h9v9h-9zM88 944h9v9h-9zM118 944h9v9h-9zM158 944h9v9h-9zM58 934h9v9h-9zM88 934h9v9h-9zM128 934h9v9h-9zM158 934h9v9h-9zM68 924h9v9h-9zM88 924h9v9h-9zM138 924h9v9h-9zM158 924h9v9h-9zM78 914h9v9h-9zM88 914h9v9h-9zM148 914h9v9h-9zM158 914h9v9h-9zM88 904h9v9h-9zM158 904h9v9h-9zM138 724h9v9h-9zM138 714h9v9h-9zM148 714h9v9h-9zM68 704h9v9h-9zM138 704h9v9h-9zM158 704h9v9h-9zM68 694h9v9h-9zM78 694h9v9h-9zM138 694h9v9h-9zM168 694h9v9h-9zM68 684h9v9h-9zM88 684h9v9h-9zM138 684h9v9h-9zM178 684h9v9h-9zM68 674h9v9h-9zM98 674h9v9h-9zM138 674h9v9h-9zM188 674h9v9h-9zM68 664h9v9h-9zM108 664h9v9h-9zM138 664h9v9h-9zM48 654h9v9h-9zM68 654h9v9h-9zM118 654h9v9h-9zM138 654h9v9h-9zM58 644h9v9h-9zM68 644h9v9h-9zM128 644h9v9h-9zM138 644h9v9h-9zM68 634h9v9h-9zM138 634h9v9h-9zM118 454h9v9h-9zM118 444h9v9h-9zM128 444h9v9h-9zM48 434h9v9h-9zM118 434h9v9h-9zM138 434h9v9h-9zM48 424h9v9h-9zM58 424h9v9h-9zM118 424h9v9h-9zM148 424h9v9h-9zM48 414h9v9h-9zM68 414h9v9h-9zM118 414h9v9h-9zM158 414h9v9h-9zM48 404h9v9h-9zM78 404h9v9h-9zM118 404h9v9h-9zM168 404h9v9h-9zM48 394h9v9h-9zM88 394h9v9h-9zM118 394h9v9h-9zM178 394h9v9h-9zM48 384h9v9h-9zM98 384h9v9h-9zM118 384h9v9h-9zM188 384h9v9h-9zM48 374h9v9h-9zM108 374h9v9h-9zM118 374h9v9h-9zM48 364h9v9h-9zM118 364h9v9h-9z" fill="#ccffcc"/>
<path d="M48 904h9v9h-9zM48 894h9v9h-9zM58 894h9v9h-9zM128 894h9v9h-9zM48 884h9v9h-9zM68 884h9v9h-9zM128 884h9v9h-9zM138 884h9v9h-9zM48 874h9v9h-9zM78 874h9v9h-9zM128 874h9v9h-9zM148 874h9v9h-9zM48 864h9v9h-9zM88 864h9v9h-9zM128 864h9v9h-9zM158 864h9v9h-9zM48 854h9v9h-9zM98 854h9v9h-9zM128 854h9v9h-9zM168 854h9v9h-9zM48 844h9v9h-9zM108 844h9v9h-9zM128 844h9v9h-9zM178 844h9v9h-9zM48 834h9v9h-9zM118 834h9v9h-9zM128 834h9v9h-9zM188 834h9v9h-9zM48 824h9v9h-9zM128 824h9v9h-9zM48 814h9v9h-9zM178 644h9v9h-9zM178 634h9v9h-9zM188 634h9v9h-9zM108 624h9v9h-9zM178 624h9v9h-9zM48 614h9v9h-9zM108 614h9v9h-9zM118 614h9v9h-9zM178 614h9v9h-9zM58 604h9v9h-9zM108 604h9v9h-9zM128 604h9v9h-9zM178 604h9v9h-9zM68 594h9v9h-9zM108 594h9v9h-9zM138 594h9v9h-9zM178 594h9v9h-9zM78 584h9v9h-9zM108 584h9v9h-9zM148 584h9v9h-9zM178 584h9v9h-9zM88 574h9v9h-9zM108 574h9v9h-9zM158 574h9v9h-9zM178 574h9v9h-9zM98 564h9v9h-9zM108 564h9v9h-9zM168 564h9v9h-9zM178 564h9v9h-9zM108 554h9v9h-9zM178 554h9v9h-9zM158 374h9v9h-9zM158 364h9v9h-9zM168 364h9v9h-9zM88 354h9v9h-9zM158 354h9v9h-9zM178 354h9v9h-9zM88 344h9v9h-9zM98 344h9v9h-9zM158 344h9v9h-9zM188 344h9v9h-9zM88 334h9v9h-9zM108 334h9v9h-9zM158 334h9v9h-9zM48 324h9v9h-9zM88 324h9v9h-9zM118 324h9v9h-9zM158 324h9v9h-9zM58 314h9v9h-9zM88 314h9v9h-9zM128 314h9v9h-9zM158 314h9v9h-9zM68 304h9v9h-9zM88 304h9v9h-9zM138 304h9v9h-9zM158 304h9v9h-9zM78 294h9v9h-9zM88 294h9v9h-9zM148 294h9v9h-9zM158 294h9v9h-9zM88 284h9v9h-9zM158 284h9v9h-9z" fill="#0066cc"/>
<path d="M58 884h9v9h-9zM58 874h9v9h-9zM68 874h9v9h-9zM138 874h9v9h-9zM58 864h9v9h-9zM78 864h9v9h-9zM138 864h9v9h-9zM148 864h9v9h-9zM58 854h9v9h-9zM88 854h9v9h-9zM138 854h9v9h-9zM158 854h9v9h-9zM58 844h9v9h-9zM98 844h9v9h-9zM138 844h9v9h-9zM168 844h9v9h-9zM58 834h9v9h-9zM108 834h9v9h-9zM138 834h9v9h-9zM178 834h9v9h-9zM58 824h9v9h-9zM118 824h9v9h-9zM138 824h9v9h-9zM188 824h9v9h-9zM58 814h9v9h-9zM128 814h9v9h-9zM138 814h9v9h-9zM48 804h9v9h-9zM58 804h9v9h-9zM138 804h9v9h-9zM58 794h9v9h-9zM188 624h9v9h-9zM188 614h9v9h-9zM48 604h9v9h-9zM118 604h9v9h-9zM188 604h9v9h-9zM58 594h9v9h-9zM118 594h9v9h-9zM128 594h9v9h-9zM188 594h9v9h-9zM68 584h9v9h-9zM118 584h9v9h-9zM138 584h9v9h-9zM188 584h9v9h-9zM78 574h9v9h-9zM118 574h9v9h-9zM148 574h9v9h-9zM188 574h9v9h-9zM88 564h9v9h-9zM118 564h9v9h-9zM158 564h9v9h-9zM188 564h9v9h-9zM98 554h9v9h-9zM118 554h9v9h-9zM168 554h9v9h-9zM188 554h9v9h-9zM108 544h9v9h-9zM118 544h9v9h-9zM178 544h9v9h-9zM188 544h9v9h-9zM118 534h9v9h-9zM188 534h9v9h-9zM168 354h9v9h-9zM168 344h9v9h-9zM178 344h9v9h-9zM98 334h9v9h-9zM168 334h9v9h-9zM188 334h9v9h-9zM98 324h9v9h-9zM108 324h9v9h-9zM168 324h9v9h-9zM48 314h9v9h-9zM98 314h9v9h-9zM118 314h9v9h-9zM168 314h9v9h-9zM58 304h9v9h-9zM98 304h9v9h-9zM128 304h9v9h-9zM168 304h9v9h-9zM68 294h9v9h-9zM98 294h9v9h-9zM138 294h9v9h-9zM168 294h9v9h-9zM78 284h9v9h-9zM98 284h9v9h-9zM148 284h9v9h-9zM168 284h9v9h-9zM88 274h9v9h-9zM98 274h9v9h-9zM158 274h9v9h-9zM168 274h9v9h-9z" fill="#33ccff"/>
<path d="M98 954h9v9h-9zM168 954h9v9h-9zM188 954h9v9h-9zM98 944h9v9h-9zM108 944h9v9h-9zM168 944h9v9h-9zM48 934h9v9h-9zM98 934h9v9h-9zM118 934h9v9h-9zM168 934h9v9h-9zM58 924h9v9h-9zM98 924h9v9h-9zM128 924h9v9h-9zM168 924h9v9h-9zM68 914h9v9h-9zM98 914h9v9h-9zM138 914h9v9h-9zM168 914h9v9h-9zM78 904h9v9h-9zM98 904h9v9h-9zM148 904h9v9h-9zM168 904h9v9h-9zM88 894h9v9h-9zM98 894h9v9h-9zM158 894h9v9h-9zM168 894h9v9h-9zM98 884h9v9h-9zM168 884h9v9h-9zM148 704h9v9h-9zM148 694h9v9h-9zM158 694h9v9h-9zM78 684h9v9h-9zM148 684h9v9h-9zM168 684h9v9h-9zM78 674h9v9h-9zM88 674h9v9h-9zM148 674h9v9h-9zM178 674h9v9h-9zM78 664h9v9h-9zM98 664h9v9h-9zM148 664h9v9h-9zM188 664h9v9h-9zM78 654h9v9h-9zM108 654h9v9h-9zM148 654h9v9h-9zM48 644h9v9h-9zM78 644h9v9h-9zM118 644h9v9h-9zM148 644h9v9h-9zM58 634h9v9h-9zM78 634h9v9h-9zM128 634h9v9h-9zM148 634h9v9h-9zM68 624h9v9h-9zM78 624h9v9h-9zM138 624h9v9h-9zM148 624h9v9h-9zM78 614h9v9h-9zM148 614h9v9h-9zM128 434h9v9h-9zM128 424h9v9h-9zM138 424h9v9h-9zM58 414h9v9h-9zM128 414h9v9h-9zM148 414h9v9h-9zM58 404h9v9h-9zM68 404h9v9h-9zM128 404h9v9h-9zM158 404h9v9h-9zM58 394h9v9h-9zM78 394h9v9h-9zM128 394h9v9h-9zM168 394h9v9h-9zM58 384h9v9h-9zM88 384h9v9h-9zM128 384h9v9h-9zM178 384h9v9h-9zM58 374h9v9h-9zM98 374h9v9h-9zM128 374h9v9h-9zM188 374h9v9h-9zM58 364h9v9h-9zM108 364h9v9h-9zM128 364h9v9h-9zM48 354h9v9h-9zM58 354h9v9h-9zM118 354h9v9h-9zM128 354h9v9h-9zM58 344h9v9h-9zM128 344h9v9h-9z" fill="#00cc66"/>
<path d="M88 824h9v9h-9zM88 814h9v9h-9zM98 814h9v9h-9zM168 814h9v9h-9zM88 804h9v9h-9zM108 804h9v9h-9zM168 804h9v9h-9zM178 804h9v9h-9zM88 794h9v9h-9zM118 794h9v9h-9zM168 794h9v9h-9zM188 794h9v9h-9zM88 784h9v9h-9zM128 784h9v9h-9zM168 784h9v9h-9zM48 774h9v9h-9zM88 774h9v9h-9zM138 774h9v9h-9zM168 774h9v9h-9zM58 764h9v9h-9zM88 764h9v9h-9zM148 764h9v9h-9zM168 764h9v9h-9zM68 754h9v9h-9zM88 754h9v9h-9zM158 754h9v9h-9zM168 754h9v9h-9zM78 744h9v9h-9zM88 744h9v9h-9zM168 744h9v9h-9zM88 734h9v9h-9zM68 554h9v9h-9zM68 544h9v9h-9zM78 544h9v9h-9zM148 544h9v9h-9zM68 534h9v9h-9zM88 534h9v9h-9zM148 534h9v9h-9zM158 534h9v9h-9zM68 524h9v9h-9zM98 524h9v9h-9zM148 524h9v9h-9zM168 524h9v9h-9zM68 514h9v9h-9zM108 514h9v9h-9zM148 514h9v9h-9zM178 514h9v9h-9zM68 504h9v9h-9zM118 504h9v9h-9zM148 504h9v9h-9zM188 504h9v9h-9zM68 494h9v9h-9zM128 494h9v9h-9zM148 494h9v9h-9zM48 484h9v9h-9zM68 484h9v9h-9zM138 484h9v9h-9zM148 484h9v9h-9zM58 474h9v9h-9zM68 474h9v9h-9zM148 474h9v9h-9zM68 464h9v9h-9zM48 284h9v9h-9zM48 274h9v9h-9zM58 274h9v9h-9zM128 274h9v9h-9z" fill="#9900ff"/>
<path d="M98 804h9v9h-9zM98 794h9v9h-9zM108 794h9v9h-9zM178 794h9v9h-9zM98 784h9v9h-9zM118 784h9v9h-9zM178 784h9v9h-9zM188 784h9v9h-9zM98 774h9v9h-9zM128 774h9v9h-9zM178 774h9v9h-9zM48 764h9v9h-9zM98 764h9v9h-9zM138 764h9v9h-9zM178 764h9v9h-9zM58 754h9v9h-9zM98 754h9v9h-9zM148 754h9v9h-9zM178 754h9v9h-9zM68 744h9v9h-9zM98 744h9v9h-9zM158 744h9v9h-9zM178 744h9v9h-9zM78 734h9v9h-9zM98 734h9v9h-9zM168 734h9v9h-9zM178 734h9v9h-9zM88 724h9v9h-9zM98 724h9v9h-9zM178 724h9v9h-9zM98 714h9v9h-9zM78 534h9v9h-9zM78 524h9v9h-9zM88 524h9v9h-9zM158 524h9v9h-9zM78 514h9v9h-9zM98 514h9v9h-9zM158 514h9v9h-9zM168 514h9v9h-9zM78 504h9v9h-9zM108 504h9v9h-9zM158 504h9v9h-9zM178 504h9v9h-9zM78 494h9v9h-9zM118 494h9v9h-9zM158 494h9v9h-9zM188 494h9v9h-9zM78 484h9v9h-9zM128 484h9v9h-9zM158 484h9v9h-9zM48 474h9v9h-9zM78 474h9v9h-9zM138 474h9v9h-9zM158 474h9v9h-9zM58 464h9v9h-9zM78 464h9v9h-9zM148 464h9v9h-9zM158 464h9v9h-9zM68 454h9v9h-9zM78 454h9v9h-9zM158 454h9v9h-9zM78 444h9v9h-9z" fill="#ccccff"/>
<g font-family="'Liberation Sans','DejaVu Sans',sans-serif" font-size="12" fill="#626262" stroke="#626262" stroke-width="0.2">
<text transform="matrix(1 0 0 1.035 19.23 877.5)">10</text>
<text transform="matrix(1 0 0 1.035 19.23 777.5)">20</text>
<text transform="matrix(1 0 0 1.035 19.23 677.5)">30</text>
<text transform="matrix(1 0 0 1.035 19.23 577.5)">40</text>
<text transform="matrix(1 0 0 1.035 19.23 477.5)">50</text>
<text transform="matrix(1 0 0 1.035 19.23 377.5)">60</text>
<text transform="matrix(1 0 0 1.035 19.23 277.5)">70</text>
<text transform="matrix(1 0 0 1.035 19.23 177.5)">80</text>
</g>
<path d="M11 963h31v1h-31zM11 863h31v1h-31zM11 763h31v1h-31zM11 663h31v1h-31zM11 563h31v1h-31zM11 463h31v1h-31zM11 363h31v1h-31zM11 263h31v1h-31zM11 163h31v1h-31z" fill="#404040"/>
<path d="M280 953h151v11h-151zM275 943h161v11h-161zM280 933h151v11h-151zM275 923h161v11h-161zM280 913h151v11h-151zM275 903h161v11h-161zM280 893h151v11h-151zM275 883h161v11h-161zM280 873h151v11h-151zM275 863h161v11h-161zM280 853h151v11h-151zM275 843h161v11h-161zM280 833h151v11h-151zM275 823h161v11h-161zM280 813h151v11h-151zM275 803h161v11h-161zM280 793h151v11h-151zM275 783h161v11h-161zM280 773h151v11h-151zM275 763h161v11h-161zM280 753h151v11h-151zM275 743h161v11h-161zM280 733h151v11h-151zM275 723h161v11h-161zM280 713h151v11h-151zM275 703h161v11h-161zM280 693h151v11h-151zM275 683h161v11h-161zM280 673h151v11h-151zM275 663h161v11h-161zM280 653h151v11h-151zM275 643h161v11h-161zM280 633h151v11h-151zM275 623h161v11h-161zM280 613h151v11h-151zM275 603h161v11h-161zM280 593h151v11h-151zM275 583h161v11h-161zM280 573h151v11h-151zM275 563h161v11h-161zM280 553h151v11h-151zM275 543h161v11h-161zM280 533h151v11h-151zM275 523h161v11h-161zM280 513h151v11h-151zM275 503h161v11h-161zM280 493h151v11h-151zM275 483h161v11h-161zM280 473h151v11h-151zM275 463h161v11h-161zM280 453h151v11h-151zM275 443h161v11h-161zM280 433h151v11h-151zM275 423h161v11h-161zM280 413h151v11h-151zM275 403h161v11h-161zM280 393h151v11h-151zM275 383h161v11h-161zM280 373h151v11h-151zM275 363h161v11h-161zM280 353h151v11h-151zM275 343h161v11h-161zM280 333h151v11h-151zM275 323h161v11h-161zM280 313h151v11h-151zM275 303h161v11h-161zM280 293h151v11h-151zM275 283h161v11h-161zM280 273h151v11h-151zM275 263h161v11h-161zM280 253h151v11h-151zM275 243h161v11h-161zM280 233h151v11h-151zM275 223h161v11h-161zM280 213h151v11h-151zM275 203h161v11h-161zM280 193h151v11h-151zM275 183h161v11h-161zM280 173h151v11h-151zM275 163h161v11h-161zM280 153h151v11h-151zM275 143h161v11h-161zM280 133h151v11h-151zM275 123h161v11h-161zM280 113h151v11h-151zM275 103h161v11h-161zM280 93h151v11h-151zM275 83h161v11h-161zM280 73h151v11h-151zM275 70.2166h161v3.7834h-161z" fill="#000000"/>
<path d="M281 954h9v9h-9zM311 954h9v9h-9zM351 954h9v9h-9zM381 954h9v9h-9zM286 944h9v9h-9zM306 944h9v9h-9zM356 944h9v9h-9zM376 944h9v9h-9zM291 934h9v9h-9zM301 934h9v9h-9zM361 934h9v9h-9zM371 934h9v9h-9zM296 924h9v9h-9zM366 924h9v9h-9zM411 874h9v9h-9zM406 864h9v9h-9zM416 864h9v9h-9zM331 854h9v9h-9zM401 854h9v9h-9zM421 854h9v9h-9zM326 844h9v9h-9zM336 844h9v9h-9zM396 844h9v9h-9zM426 844h9v9h-9zM321 834h9v9h-9zM341 834h9v9h-9zM391 834h9v9h-9zM276 824h9v9h-9zM316 824h9v9h-9zM346 824h9v9h-9zM386 824h9v9h-9zM281 814h9v9h-9zM311 814h9v9h-9zM351 814h9v9h-9zM381 814h9v9h-9zM286 804h9v9h-9zM306 804h9v9h-9zM356 804h9v9h-9zM376 804h9v9h-9zM291 794h9v9h-9zM301 794h9v9h-9zM361 794h9v9h-9zM371 794h9v9h-9zM411 794h9v9h-9zM296 784h9v9h-9zM366 784h9v9h-9zM406 784h9v9h-9zM416 784h9v9h-9zM331 774h9v9h-9zM401 774h9v9h-9zM421 774h9v9h-9zM326 764h9v9h-9zM336 764h9v9h-9zM396 764h9v9h-9zM426 764h9v9h-9zM321 754h9v9h-9zM341 754h9v9h-9zM391 754h9v9h-9zM411 754h9v9h-9zM276 744h9v9h-9zM316 744h9v9h-9zM346 744h9v9h-9zM386 744h9v9h-9zM406 744h9v9h-9zM416 744h9v9h-9zM281 734h9v9h-9zM311 734h9v9h-9zM331 734h9v9h-9zM351 734h9v9h-9zM381 734h9v9h-9zM401 734h9v9h-9zM421 734h9v9h-9zM286 724h9v9h-9zM306 724h9v9h-9zM326 724h9v9h-9zM336 724h9v9h-9zM356 724h9v9h-9zM376 724h9v9h-9zM396 724h9v9h-9zM426 724h9v9h-9zM291 714h9v9h-9zM301 714h9v9h-9zM321 714h9v9h-9zM341 714h9v9h-9zM361 714h9v9h-9zM371 714h9v9h-9zM391 714h9v9h-9zM276 704h9v9h-9zM296 704h9v9h-9zM316 704h9v9h-9zM346 704h9v9h-9zM366 704h9v9h-9zM386 704h9v9h-9zM281 694h9v9h-9zM311 694h9v9h-9zM351 694h9v9h-9zM381 694h9v9h-9zM286 684h9v9h-9zM306 684h9v9h-9zM356 684h9v9h-9zM376 684h9v9h-9zM291 674h9v9h-9zM301 674h9v9h-9zM361 674h9v9h-9zM371 674h9v9h-9zM296 664h9v9h-9zM366 664h9v9h-9zM411 614h9v9h-9zM406 604h9v9h-9zM416 604h9v9h-9zM331 594h9v9h-9zM401 594h9v9h-9zM421 594h9v9h-9zM326 584h9v9h-9zM336 584h9v9h-9zM396 584h9v9h-9zM426 584h9v9h-9zM321 574h9v9h-9zM341 574h9v9h-9zM391 574h9v9h-9zM276 564h9v9h-9zM316 564h9v9h-9zM346 564h9v9h-9zM386 564h9v9h-9zM281 554h9v9h-9zM311 554h9v9h-9zM351 554h9v9h-9zM381 554h9v9h-9zM286 544h9v9h-9zM306 544h9v9h-9zM356 544h9v9h-9zM376 544h9v9h-9zM291 534h9v9h-9zM301 534h9v9h-9zM361 534h9v9h-9zM371 534h9v9h-9zM411 534h9v9h-9zM296 524h9v9h-9zM366 524h9v9h-9zM406 524h9v9h-9zM416 524h9v9h-9zM331 514h9v9h-9zM401 514h9v9h-9zM421 514h9v9h-9zM326 504h9v9h-9zM336 504h9v9h-9zM396 504h9v9h-9zM426 504h9v9h-9zM321 494h9v9h-9zM341 494h9v9h-9zM391 494h9v9h-9zM411 494h9v9h-9zM276 484h9v9h-9zM316 484h9v9h-9zM346 484h9v9h-9zM386 484h9v9h-9zM406 484h9v9h-9zM416 484h9v9h-9zM281 474h9v9h-9zM311 474h9v9h-9zM331 474h9v9h-9zM351 474h9v9h-9zM381 474h9v9h-9zM401 474h9v9h-9zM421 474h9v9h-9zM286 464h9v9h-9zM306 464h9v9h-9zM326 464h9v9h-9zM336 464h9v9h-9zM356 464h9v9h-9zM376 464h9v9h-9zM396 464h9v9h-9zM426 464h9v9h-9zM291 454h9v9h-9zM301 454h9v9h-9zM321 454h9v9h-9zM341 454h9v9h-9zM361 454h9v9h-9zM371 454h9v9h-9zM391 454h9v9h-9zM276 444h9v9h-9zM296 444h9v9h-9zM316 444h9v9h-9zM346 444h9v9h-9zM366 444h9v9h-9zM386 444h9v9h-9zM281 434h9v9h-9zM311 434h9v9h-9zM351 434h9v9h-9zM381 434h9v9h-9zM286 424h9v9h-9zM306 424h9v9h-9zM356 424h9v9h-9zM376 424h9v9h-9zM291 414h9v9h-9zM301 414h9v9h-9zM361 414h9v9h-9zM371 414h9v9h-9zM296 404h9v9h-9zM366 404h9v9h-9zM411 354h9v9h-9zM406 344h9v9h-9zM416 344h9v9h-9zM331 334h9v9h-9zM401 334h9v9h-9zM421 334h9v9h-9zM326 324h9v9h-9zM336 324h9v9h-9zM396 324h9v9h-9zM426 324h9v9h-9zM321 314h9v9h-9zM341 314h9v9h-9zM391 314h9v9h-9zM276 304h9v9h-9zM316 304h9v9h-9zM346 304h9v9h-9zM386 304h9v9h-9zM281 294h9v9h-9zM311 294h9v9h-9zM351 294h9v9h-9zM381 294h9v9h-9zM401 294h9v9h-9zM411 294h9v9h-9zM421 294h9v9h-9zM276 284h9v9h-9zM286 284h9v9h-9zM296 284h9v9h-9zM306 284h9v9h-9zM316 284h9v9h-9zM326 284h9v9h-9zM336 284h9v9h-9zM346 284h9v9h-9zM356 284h9v9h-9zM366 284h9v9h-9zM376 284h9v9h-9zM386 284h9v9h-9zM396 284h9v9h-9zM406 284h9v9h-9zM416 284h9v9h-9zM426 284h9v9h-9zM281 274h9v9h-9zM291 274h9v9h-9zM301 274h9v9h-9zM311 274h9v9h-9zM321 274h9v9h-9zM331 274h9v9h-9zM341 274h9v9h-9zM351 274h9v9h-9zM361 274h9v9h-9zM371 274h9v9h-9zM381 274h9v9h-9zM391 274h9v9h-9zM401 274h9v9h-9zM411 274h9v9h-9zM421 274h9v9h-9zM276 264h9v9h-9zM286 264h9v9h-9zM296 264h9v9h-9zM306 264h9v9h-9zM316 264h9v9h-9zM326 264h9v9h-9zM336 264h9v9h-9zM346 264h9v9h-9zM356 264h9v9h-9zM366 264h9v9h-9zM376 264h9v9h-9zM386 264h9v9h-9zM396 264h9v9h-9zM406 264h9v9h-9zM416 264h9v9h-9zM426 264h9v9h-9zM281 254h9v9h-9zM291 254h9v9h-9zM301 254h9v9h-9zM311 254h9v9h-9zM321 254h9v9h-9zM331 254h9v9h-9zM341 254h9v9h-9zM351 254h9v9h-9zM361 254h9v9h-9zM371 254h9v9h-9zM381 254h9v9h-9zM391 254h9v9h-9zM401 254h9v9h-9zM411 254h9v9h-9zM421 254h9v9h-9zM276 244h9v9h-9zM286 244h9v9h-9zM296 244h9v9h-9zM306 244h9v9h-9zM316 244h9v9h-9zM326 244h9v9h-9zM336 244h9v9h-9zM346 244h9v9h-9zM356 244h9v9h-9zM366 244h9v9h-9zM376 244h9v9h-9zM386 244h9v9h-9zM396 244h9v9h-9zM406 244h9v9h-9zM416 244h9v9h-9zM426 244h9v9h-9zM281 234h9v9h-9zM291 234h9v9h-9zM301 234h9v9h-9zM311 234h9v9h-9zM321 234h9v9h-9zM331 234h9v9h-9zM341 234h9v9h-9zM351 234h9v9h-9zM361 234h9v9h-9zM371 234h9v9h-9zM381 234h9v9h-9zM391 234h9v9h-9zM401 234h9v9h-9zM411 234h9v9h-9zM421 234h9v9h-9zM276 224h9v9h-9zM286 224h9v9h-9zM296 224h9v9h-9zM306 224h9v9h-9zM316 224h9v9h-9zM326 224h9v9h-9zM336 224h9v9h-9zM346 224h9v9h-9zM356 224h9v9h-9zM366 224h9v9h-9zM376 224h9v9h-9zM386 224h9v9h-9zM396 224h9v9h-9zM406 224h9v9h-9zM416 224h9v9h-9zM426 224h9v9h-9zM281 214h9v9h-9zM291 214h9v9h-9zM301 214h9v9h-9zM311 214h9v9h-9zM321 214h9v9h-9zM331 214h9v9h-9zM341 214h9v9h-9zM351 214h9v9h-9zM361 214h9v9h-9zM371 214h9v9h-9zM381 214h9v9h-9zM391 214h9v9h-9zM401 214h9v9h-9zM411 214h9v9h-9zM421 214h9v9h-9zM276 204h9v9h-9zM286 204h9v9h-9zM296 204h9v9h-9zM306 204h9v9h-9zM316 204h9v9h-9zM326 204h9v9h-9zM336 204h9v9h-9zM346 204h9v9h-9zM356 204h9v9h-9zM366 204h9v9h-9zM376 204h9v9h-9zM386 204h9v9h-9zM396 204h9v9h-9zM406 204h9v9h-9zM416 204h9v9h-9zM426 204h9v9h-9zM281 194h9v9h-9zM291 194h9v9h-9zM301 194h9v9h-9zM311 194h9v9h-9zM321 194h9v9h-9zM331 194h9v9h-9zM341 194h9v9h-9zM351 194h9v9h-9zM361 194h9v9h-9zM371 194h9v9h-9zM381 194h9v9h-9zM391 194h9v9h-9zM401 194h9v9h-9zM411 194h9v9h-9zM421 194h9v9h-9zM276 184h9v9h-9zM286 184h9v9h-9zM296 184h9v9h-9zM306 184h9v9h-9zM316 184h9v9h-9zM326 184h9v9h-9zM336 184h9v9h-9zM346 184h9v9h-9zM356 184h9v9h-9zM366 184h9v9h-9zM376 184h9v9h-9zM386 184h9v9h-9zM396 184h9v9h-9zM406 184h9v9h-9zM416 184h9v9h-9zM426 184h9v9h-9zM281 174h9v9h-9zM291 174h9v9h-9zM301 174h9v9h-9zM311 174h9v9h-9zM321 174h9v9h-9zM331 174h9v9h-9zM341 174h9v9h-9zM351 174h9v9h-9zM361 174h9v9h-9zM371 174h9v9h-9zM381 174h9v9h-9zM391 174h9v9h-9zM401 174h9v9h-9zM411 174h9v9h-9zM421 174h9v9h-9zM276 164h9v9h-9zM286 164h9v9h-9zM296 164h9v9h-9zM306 164h9v9h-9zM316 164h9v9h-9zM326 164h9v9h-9zM336 164h9v9h-9zM346 164h9v9h-9zM356 164h9v9h-9zM366 164h9v9h-9zM376 164h9v9h-9zM386 164h9v9h-9zM396 164h9v9h-9zM406 164h9v9h-9zM416 164h9v9h-9zM426 164h9v9h-9zM281 154h9v9h-9zM291 154h9v9h-9zM301 154h9v9h-9zM311 154h9v9h-9zM321 154h9v9h-9zM331 154h9v9h-9zM341 154h9v9h-9zM351 154h9v9h-9zM361 154h9v9h-9zM371 154h9v9h-9zM381 154h9v9h-9zM391 154h9v9h-9zM401 154h9v9h-9zM411 154h9v9h-9zM421 154h9v9h-9zM276 144h9v9h-9zM286 144h9v9h-9zM296 144h9v9h-9zM306 144h9v9h-9zM316 144h9v9h-9zM326 144h9v9h-9zM336 144h9v9h-9zM346 144h9v9h-9zM356 144h9v9h-9zM366 144h9v9h-9zM376 144h9v9h-9zM386 144h9v9h-9zM396 144h9v9h-9zM406 144h9v9h-9zM416 144h9v9h-9zM426 144h9v9h-9zM281 134h9v9h-9zM291 134h9v9h-9zM301 134h9v9h-9zM311 134h9v9h-9zM321 134h9v9h-9zM331 134h9v9h-9zM341 134h9v9h-9zM351 134h9v9h-9zM361 134h9v9h-9zM371 134h9v9h-9zM381 134h9v9h-9zM391 134h9v9h-9zM401 134h9v9h-9zM411 134h9v9h-9zM421 134h9v9h-9zM276 124h9v9h-9zM286 124h9v9h-9zM296 124h9v9h-9zM306 124h9v9h-9zM316 124h9v9h-9zM326 124h9v9h-9zM336 124h9v9h-9zM346 124h9v9h-9zM356 124h9v9h-9zM366 124h9v9h-9zM376 124h9v9h-9zM386 124h9v9h-9zM396 124h9v9h-9zM406 124h9v9h-9zM416 124h9v9h-9zM426 124h9v9h-9zM281 114h9v9h-9zM291 114h9v9h-9zM301 114h9v9h-9zM311 114h9v9h-9zM321 114h9v9h-9zM331 114h9v9h-9zM341 114h9v9h-9zM351 114h9v9h-9zM361 114h9v9h-9zM371 114h9v9h-9zM381 114h9v9h-9zM391 114h9v9h-9zM401 114h9v9h-9zM411 114h9v9h-9zM421 114h9v9h-9zM276 104h9v9h-9zM286 104h9v9h-9zM296 104h9v9h-9zM306 104h9v9h-9zM316 104h9v9h-9zM326 104h9v9h-9zM336 104h9v9h-9zM346 104h9v9h-9zM356 104h9v9h-9zM366 104h9v9h-9zM376 104h9v9h-9zM386 104h9v9h-9zM396 104h9v9h-9zM406 104h9v9h-9zM416 104h9v9h-9zM426 104h9v9h-9zM281 94h9v9h-9zM291 94h9v9h-9zM301 94h9v9h-9zM311 94h9v9h-9zM321 94h9v9h-9zM331 94h9v9h-9zM341 94h9v9h-9zM351 94h9v9h-9zM361 94h9v9h-9zM371 94h9v9h-9zM381 94h9v9h-9zM391 94h9v9h-9zM401 94h9v9h-9zM411 94h9v9h-9zM421 94h9v9h-9zM276 84h9v9h-9zM286 84h9v9h-9zM296 84h9v9h-9zM306 84h9v9h-9zM316 84h9v9h-9zM326 84h9v9h-9zM336 84h9v9h-9zM346 84h9v9h-9zM356 84h9v9h-9zM366 84h9v9h-9zM376 84h9v9h-9zM386 84h9v9h-9zM396 84h9v9h-9zM406 84h9v9h-9zM416 84h9v9h-9zM426 84h9v9h-9zM281 74h9v9h-9zM291 74h9v9h-9zM301 74h9v9h-9zM311 74h9v9h-9zM321 74h9v9h-9zM331 74h9v9h-9zM341 74h9v9h-9zM351 74h9v9h-9zM361 74h9v9h-9zM371 74h9v9h-9zM381 74h9v9h-9zM391 74h9v9h-9zM401 74h9v9h-9zM411 74h9v9h-9zM421 74h9v9h-9zM276 70.2166h9v2.7834h-9zM286 70.2166h9v2.7834h-9zM296 70.2166h9v2.7834h-9zM306 70.2166h9v2.7834h-9zM316 70.2166h9v2.7834h-9zM326 70.2166h9v2.7834h-9zM336 70.2166h9v2.7834h-9zM346 70.2166h9v2.7834h-9zM356 70.2166h9v2.7834h-9zM366 70.2166h9v2.7834h-9zM376 70.2166h9v2.7834h-9zM386 70.2166h9v2.7834h-9zM396 70.2166h9v2.7834h-9zM406 70.2166h9v2.7834h-9zM416 70.2166h9v2.7834h-9zM426 70.2166h9v2.7834h-9z" fill="#ffffff"/>
<path d="M291 954h9v9h-9zM301 954h9v9h-9zM361 954h9v9h-9zM371 954h9v9h-9zM296 944h9v9h-9zM366 944h9v9h-9zM411 934h9v9h-9zM406 924h9v9h-9zM416 924h9v9h-9zM331 914h9v9h-9zM401 914h9v9h-9zM421 914h9v9h-9zM326 904h9v9h-9zM336 904h9v9h-9zM396 904h9v9h-9zM426 904h9v9h-9zM321 894h9v9h-9zM341 894h9v9h-9zM391 894h9v9h-9zM276 884h9v9h-9zM316 884h9v9h-9zM346 884h9v9h-9zM386 884h9v9h-9zM281 874h9v9h-9zM311 874h9v9h-9zM351 874h9v9h-9zM381 874h9v9h-9zM286 864h9v9h-9zM306 864h9v9h-9zM356 864h9v9h-9zM376 864h9v9h-9zM291 854h9v9h-9zM301 854h9v9h-9zM361 854h9v9h-9zM371 854h9v9h-9zM411 854h9v9h-9zM296 844h9v9h-9zM366 844h9v9h-9zM406 844h9v9h-9zM416 844h9v9h-9zM331 834h9v9h-9zM401 834h9v9h-9zM421 834h9v9h-9zM326 824h9v9h-9zM336 824h9v9h-9zM396 824h9v9h-9zM426 824h9v9h-9zM321 814h9v9h-9zM341 814h9v9h-9zM391 814h9v9h-9zM276 804h9v9h-9zM316 804h9v9h-9zM346 804h9v9h-9zM386 804h9v9h-9zM281 794h9v9h-9zM311 794h9v9h-9zM351 794h9v9h-9zM381 794h9v9h-9zM286 784h9v9h-9zM306 784h9v9h-9zM356 784h9v9h-9zM376 784h9v9h-9zM291 774h9v9h-9zM301 774h9v9h-9zM361 774h9v9h-9zM371 774h9v9h-9zM411 774h9v9h-9zM296 764h9v9h-9zM366 764h9v9h-9zM406 764h9v9h-9zM416 764h9v9h-9zM331 754h9v9h-9zM401 754h9v9h-9zM421 754h9v9h-9zM326 744h9v9h-9zM336 744h9v9h-9zM396 744h9v9h-9zM426 744h9v9h-9zM321 734h9v9h-9zM341 734h9v9h-9zM391 734h9v9h-9zM276 724h9v9h-9zM316 724h9v9h-9zM346 724h9v9h-9zM386 724h9v9h-9zM281 714h9v9h-9zM311 714h9v9h-9zM351 714h9v9h-9zM381 714h9v9h-9zM286 704h9v9h-9zM306 704h9v9h-9zM356 704h9v9h-9zM376 704h9v9h-9zM291 694h9v9h-9zM301 694h9v9h-9zM361 694h9v9h-9zM371 694h9v9h-9zM296 684h9v9h-9zM366 684h9v9h-9zM411 674h9v9h-9zM406 664h9v9h-9zM416 664h9v9h-9zM331 654h9v9h-9zM401 654h9v9h-9zM421 654h9v9h-9zM326 644h9v9h-9zM336 644h9v9h-9zM396 644h9v9h-9zM426 644h9v9h-9zM321 634h9v9h-9zM341 634h9v9h-9zM391 634h9v9h-9zM276 624h9v9h-9zM316 624h9v9h-9zM346 624h9v9h-9zM386 624h9v9h-9zM281 614h9v9h-9zM311 614h9v9h-9zM351 614h9v9h-9zM381 614h9v9h-9zM286 604h9v9h-9zM306 604h9v9h-9zM356 604h9v9h-9zM376 604h9v9h-9zM291 594h9v9h-9zM301 594h9v9h-9zM361 594h9v9h-9zM371 594h9v9h-9zM411 594h9v9h-9zM296 584h9v9h-9zM366 584h9v9h-9zM406 584h9v9h-9zM416 584h9v9h-9zM331 574h9v9h-9zM401 574h9v9h-9zM421 574h9v9h-9zM326 564h9v9h-9zM336 564h9v9h-9zM396 564h9v9h-9zM426 564h9v9h-9zM321 554h9v9h-9zM341 554h9v9h-9zM391 554h9v9h-9zM276 544h9v9h-9zM316 544h9v9h-9zM346 544h9v9h-9zM386 544h9v9h-9zM281 534h9v9h-9zM311 534h9v9h-9zM351 534h9v9h-9zM381 534h9v9h-9zM286 524h9v9h-9zM306 524h9v9h-9zM356 524h9v9h-9zM376 524h9v9h-9zM291 514h9v9h-9zM301 514h9v9h-9zM361 514h9v9h-9zM371 514h9v9h-9zM411 514h9v9h-9zM296 504h9v9h-9zM366 504h9v9h-9zM406 504h9v9h-9zM416 504h9v9h-9zM331 494h9v9h-9zM401 494h9v9h-9zM421 494h9v9h-9zM326 484h9v9h-9zM336 484h9v9h-9zM396 484h9v9h-9zM426 484h9v9h-9zM321 474h9v9h-9zM341 474h9v9h-9zM391 474h9v9h-9zM276 464h9v9h-9zM316 464h9v9h-9zM346 464h9v9h-9zM386 464h9v9h-9zM281 454h9v9h-9zM311 454h9v9h-9zM351 454h9v9h-9zM381 454h9v9h-9zM286 444h9v9h-9zM306 444h9v9h-9zM356 444h9v9h-9zM376 444h9v9h-9zM291 434h9v9h-9zM301 434h9v9h-9zM361 434h9v9h-9zM371 434h9v9h-9zM296 424h9v9h-9zM366 424h9v9h-9zM411 414h9v9h-9zM406 404h9v9h-9zM416 404h9v9h-9zM331 394h9v9h-9zM401 394h9v9h-9zM421 394h9v9h-9zM326 384h9v9h-9zM336 384h9v9h-9zM396 384h9v9h-9zM426 384h9v9h-9zM321 374h9v9h-9zM341 374h9v9h-9zM391 374h9v9h-9zM276 364h9v9h-9zM316 364h9v9h-9zM346 364h9v9h-9zM386 364h9v9h-9zM281 354h9v9h-9zM311 354h9v9h-9zM351 354h9v9h-9zM381 354h9v9h-9zM286 344h9v9h-9zM306 344h9v9h-9zM356 344h9v9h-9zM376 344h9v9h-9zM291 334h9v9h-9zM301 334h9v9h-9zM361 334h9v9h-9zM371 334h9v9h-9zM411 334h9v9h-9zM296 324h9v9h-9zM366 324h9v9h-9zM406 324h9v9h-9zM416 324h9v9h-9zM331 314h9v9h-9zM401 314h9v9h-9zM421 314h9v9h-9zM326 304h9v9h-9zM336 304h9v9h-9zM396 304h9v9h-9zM426 304h9v9h-9zM321 294h9v9h-9zM341 294h9v9h-9zM391 294h9v9h-9z" fill="#000000"/>
<path d="M411 954h9v9h-9zM406 944h9v9h-9zM416 944h9v9h-9zM331 934h9v9h-9zM401 934h9v9h-9zM421 934h9v9h-9zM326 924h9v9h-9zM336 924h9v9h-9zM396 924h9v9h-9zM426 924h9v9h-9zM321 914h9v9h-9zM341 914h9v9h-9zM391 914h9v9h-9zM276 904h9v9h-9zM316 904h9v9h-9zM346 904h9v9h-9zM386 904h9v9h-9zM281 894h9v9h-9zM311 894h9v9h-9zM351 894h9v9h-9zM381 894h9v9h-9zM286 884h9v9h-9zM306 884h9v9h-9zM356 884h9v9h-9zM376 884h9v9h-9zM291 874h9v9h-9zM301 874h9v9h-9zM361 874h9v9h-9zM371 874h9v9h-9zM296 864h9v9h-9zM366 864h9v9h-9zM411 694h9v9h-9zM406 684h9v9h-9zM416 684h9v9h-9zM331 674h9v9h-9zM401 674h9v9h-9zM421 674h9v9h-9zM326 664h9v9h-9zM336 664h9v9h-9zM396 664h9v9h-9zM426 664h9v9h-9zM321 654h9v9h-9zM341 654h9v9h-9zM391 654h9v9h-9zM276 644h9v9h-9zM316 644h9v9h-9zM346 644h9v9h-9zM386 644h9v9h-9zM281 634h9v9h-9zM311 634h9v9h-9zM351 634h9v9h-9zM381 634h9v9h-9zM286 624h9v9h-9zM306 624h9v9h-9zM356 624h9v9h-9zM376 624h9v9h-9zM291 614h9v9h-9zM301 614h9v9h-9zM361 614h9v9h-9zM371 614h9v9h-9zM296 604h9v9h-9zM366 604h9v9h-9zM411 434h9v9h-9zM406 424h9v9h-9zM416 424h9v9h-9zM331 414h9v9h-9zM401 414h9v9h-9zM421 414h9v9h-9zM326 404h9v9h-9zM336 404h9v9h-9zM396 404h9v9h-9zM426 404h9v9h-9zM321 394h9v9h-9zM341 394h9v9h-9zM391 394h9v9h-9zM276 384h9v9h-9zM316 384h9v9h-9zM346 384h9v9h-9zM386 384h9v9h-9zM281 374h9v9h-9zM311 374h9v9h-9zM351 374h9v9h-9zM381 374h9v9h-9zM286 364h9v9h-9zM306 364h9v9h-9zM356 364h9v9h-9zM376 364h9v9h-9zM291 354h9v9h-9zM301 354h9v9h-9zM361 354h9v9h-9zM371 354h9v9h-9zM296 344h9v9h-9zM366 344h9v9h-9z" fill="#006633"/>
<path d="M321 954h9v9h-9zM341 954h9v9h-9zM391 954h9v9h-9zM276 944h9v9h-9zM316 944h9v9h-9zM346 944h9v9h-9zM386 944h9v9h-9zM281 934h9v9h-9zM311 934h9v9h-9zM351 934h9v9h-9zM381 934h9v9h-9zM286 924h9v9h-9zM306 924h9v9h-9zM356 924h9v9h-9zM376 924h9v9h-9zM291 914h9v9h-9zM301 914h9v9h-9zM361 914h9v9h-9zM371 914h9v9h-9zM296 904h9v9h-9zM366 904h9v9h-9zM411 734h9v9h-9zM406 724h9v9h-9zM416 724h9v9h-9zM331 714h9v9h-9zM401 714h9v9h-9zM421 714h9v9h-9zM326 704h9v9h-9zM336 704h9v9h-9zM396 704h9v9h-9zM426 704h9v9h-9zM321 694h9v9h-9zM341 694h9v9h-9zM391 694h9v9h-9zM276 684h9v9h-9zM316 684h9v9h-9zM346 684h9v9h-9zM386 684h9v9h-9zM281 674h9v9h-9zM311 674h9v9h-9zM351 674h9v9h-9zM381 674h9v9h-9zM286 664h9v9h-9zM306 664h9v9h-9zM356 664h9v9h-9zM376 664h9v9h-9zM291 654h9v9h-9zM301 654h9v9h-9zM361 654h9v9h-9zM371 654h9v9h-9zM296 644h9v9h-9zM366 644h9v9h-9zM411 474h9v9h-9zM406 464h9v9h-9zM416 464h9v9h-9zM331 454h9v9h-9zM401 454h9v9h-9zM421 454h9v9h-9zM326 444h9v9h-9zM336 444h9v9h-9zM396 444h9v9h-9zM426 444h9v9h-9zM321 434h9v9h-9zM341 434h9v9h-9zM391 434h9v9h-9zM276 424h9v9h-9zM316 424h9v9h-9zM346 424h9v9h-9zM386 424h9v9h-9zM281 414h9v9h-9zM311 414h9v9h-9zM351 414h9v9h-9zM381 414h9v9h-9zM286 404h9v9h-9zM306 404h9v9h-9zM356 404h9v9h-9zM376 404h9v9h-9zM291 394h9v9h-9zM301 394h9v9h-9zM361 394h9v9h-9zM371 394h9v9h-9zM296 384h9v9h-9zM366 384h9v9h-9z" fill="#ccffcc"/>
<path d="M411 914h9v9h-9zM406 904h9v9h-9zM416 904h9v9h-9zM331 894h9v9h-9zM401 894h9v9h-9zM421 894h9v9h-9zM326 884h9v9h-9zM336 884h9v9h-9zM396 884h9v9h-9zM426 884h9v9h-9zM321 874h9v9h-9zM341 874h9v9h-9zM391 874h9v9h-9zM276 864h9v9h-9zM316 864h9v9h-9zM346 864h9v9h-9zM386 864h9v9h-9zM281 854h9v9h-9zM311 854h9v9h-9zM351 854h9v9h-9zM381 854h9v9h-9zM286 844h9v9h-9zM306 844h9v9h-9zM356 844h9v9h-9zM376 844h9v9h-9zM291 834h9v9h-9zM301 834h9v9h-9zM361 834h9v9h-9zM371 834h9v9h-9zM296 824h9v9h-9zM366 824h9v9h-9zM411 654h9v9h-9zM406 644h9v9h-9zM416 644h9v9h-9zM331 634h9v9h-9zM401 634h9v9h-9zM421 634h9v9h-9zM326 624h9v9h-9zM336 624h9v9h-9zM396 624h9v9h-9zM426 624h9v9h-9zM321 614h9v9h-9zM341 614h9v9h-9zM391 614h9v9h-9zM276 604h9v9h-9zM316 604h9v9h-9zM346 604h9v9h-9zM386 604h9v9h-9zM281 594h9v9h-9zM311 594h9v9h-9zM351 594h9v9h-9zM381 594h9v9h-9zM286 584h9v9h-9zM306 584h9v9h-9zM356 584h9v9h-9zM376 584h9v9h-9zM291 574h9v9h-9zM301 574h9v9h-9zM361 574h9v9h-9zM371 574h9v9h-9zM296 564h9v9h-9zM366 564h9v9h-9zM411 394h9v9h-9zM406 384h9v9h-9zM416 384h9v9h-9zM331 374h9v9h-9zM401 374h9v9h-9zM421 374h9v9h-9zM326 364h9v9h-9zM336 364h9v9h-9zM396 364h9v9h-9zM426 364h9v9h-9zM321 354h9v9h-9zM341 354h9v9h-9zM391 354h9v9h-9zM276 344h9v9h-9zM316 344h9v9h-9zM346 344h9v9h-9zM386 344h9v9h-9zM281 334h9v9h-9zM311 334h9v9h-9zM351 334h9v9h-9zM381 334h9v9h-9zM286 324h9v9h-9zM306 324h9v9h-9zM356 324h9v9h-9zM376 324h9v9h-9zM291 314h9v9h-9zM301 314h9v9h-9zM361 314h9v9h-9zM371 314h9v9h-9zM296 304h9v9h-9zM366 304h9v9h-9z" fill="#0066cc"/>
<path d="M411 894h9v9h-9zM406 884h9v9h-9zM416 884h9v9h-9zM331 874h9v9h-9zM401 874h9v9h-9zM421 874h9v9h-9zM326 864h9v9h-9zM336 864h9v9h-9zM396 864h9v9h-9zM426 864h9v9h-9zM321 854h9v9h-9zM341 854h9v9h-9zM391 854h9v9h-9zM276 844h9v9h-9zM316 844h9v9h-9zM346 844h9v9h-9zM386 844h9v9h-9zM281 834h9v9h-9zM311 834h9v9h-9zM351 834h9v9h-9zM381 834h9v9h-9zM286 824h9v9h-9zM306 824h9v9h-9zM356 824h9v9h-9zM376 824h9v9h-9zM291 814h9v9h-9zM301 814h9v9h-9zM361 814h9v9h-9zM371 814h9v9h-9zM296 804h9v9h-9zM366 804h9v9h-9zM411 634h9v9h-9zM406 624h9v9h-9zM416 624h9v9h-9zM331 614h9v9h-9zM401 614h9v9h-9zM421 614h9v9h-9zM326 604h9v9h-9zM336 604h9v9h-9zM396 604h9v9h-9zM426 604h9v9h-9zM321 594h9v9h-9zM341 594h9v9h-9zM391 594h9v9h-9zM276 584h9v9h-9zM316 584h9v9h-9zM346 584h9v9h-9zM386 584h9v9h-9zM281 574h9v9h-9zM311 574h9v9h-9zM351 574h9v9h-9zM381 574h9v9h-9zM286 564h9v9h-9zM306 564h9v9h-9zM356 564h9v9h-9zM376 564h9v9h-9zM291 554h9v9h-9zM301 554h9v9h-9zM361 554h9v9h-9zM371 554h9v9h-9zM296 544h9v9h-9zM366 544h9v9h-9zM411 374h9v9h-9zM406 364h9v9h-9zM416 364h9v9h-9zM331 354h9v9h-9zM401 354h9v9h-9zM421 354h9v9h-9zM326 344h9v9h-9zM336 344h9v9h-9zM396 344h9v9h-9zM426 344h9v9h-9zM321 334h9v9h-9zM341 334h9v9h-9zM391 334h9v9h-9zM276 324h9v9h-9zM316 324h9v9h-9zM346 324h9v9h-9zM386 324h9v9h-9zM281 314h9v9h-9zM311 314h9v9h-9zM351 314h9v9h-9zM381 314h9v9h-9zM286 304h9v9h-9zM306 304h9v9h-9zM356 304h9v9h-9zM376 304h9v9h-9zM291 294h9v9h-9zM301 294h9v9h-9zM361 294h9v9h-9zM371 294h9v9h-9z" fill="#33ccff"/>
<path d="M331 954h9v9h-9zM401 954h9v9h-9zM421 954h9v9h-9zM326 944h9v9h-9zM336 944h9v9h-9zM396 944h9v9h-9zM426 944h9v9h-9zM321 934h9v9h-9zM341 934h9v9h-9zM391 934h9v9h-9zM276 924h9v9h-9zM316 924h9v9h-9zM346 924h9v9h-9zM386 924h9v9h-9zM281 914h9v9h-9zM311 914h9v9h-9zM351 914h9v9h-9zM381 914h9v9h-9zM286 904h9v9h-9zM306 904h9v9h-9zM356 904h9v9h-9zM376 904h9v9h-9zM291 894h9v9h-9zM301 894h9v9h-9zM361 894h9v9h-9zM371 894h9v9h-9zM296 884h9v9h-9zM366 884h9v9h-9zM411 714h9v9h-9zM406 704h9v9h-9zM416 704h9v9h-9zM331 694h9v9h-9zM401 694h9v9h-9zM421 694h9v9h-9zM326 684h9v9h-9zM336 684h9v9h-9zM396 684h9v9h-9zM426 684h9v9h-9zM321 674h9v9h-9zM341 674h9v9h-9zM391 674h9v9h-9zM276 664h9v9h-9zM316 664h9v9h-9zM346 664h9v9h-9zM386 664h9v9h-9zM281 654h9v9h-9zM311 654h9v9h-9zM351 654h9v9h-9zM381 654h9v9h-9zM286 644h9v9h-9zM306 644h9v9h-9zM356 644h9v9h-9zM376 644h9v9h-9zM291 634h9v9h-9zM301 634h9v9h-9zM361 634h9v9h-9zM371 634h9v9h-9zM296 624h9v9h-9zM366 624h9v9h-9zM411 454h9v9h-9zM406 444h9v9h-9zM416 444h9v9h-9zM331 434h9v9h-9zM401 434h9v9h-9zM421 434h9v9h-9zM326 424h9v9h-9zM336 424h9v9h-9zM396 424h9v9h-9zM426 424h9v9h-9zM321 414h9v9h-9zM341 414h9v9h-9zM391 414h9v9h-9zM276 404h9v9h-9zM316 404h9v9h-9zM346 404h9v9h-9zM386 404h9v9h-9zM281 394h9v9h-9zM311 394h9v9h-9zM351 394h9v9h-9zM381 394h9v9h-9zM286 384h9v9h-9zM306 384h9v9h-9zM356 384h9v9h-9zM376 384h9v9h-9zM291 374h9v9h-9zM301 374h9v9h-9zM361 374h9v9h-9zM371 374h9v9h-9zM296 364h9v9h-9zM366 364h9v9h-9z" fill="#00cc66"/>
<path d="M411 834h9v9h-9zM406 824h9v9h-9zM416 824h9v9h-9zM331 814h9v9h-9zM401 814h9v9h-9zM421 814h9v9h-9zM326 804h9v9h-9zM336 804h9v9h-9zM396 804h9v9h-9zM426 804h9v9h-9zM321 794h9v9h-9zM341 794h9v9h-9zM391 794h9v9h-9zM276 784h9v9h-9zM316 784h9v9h-9zM346 784h9v9h-9zM386 784h9v9h-9zM281 774h9v9h-9zM311 774h9v9h-9zM351 774h9v9h-9zM381 774h9v9h-9zM286 764h9v9h-9zM306 764h9v9h-9zM356 764h9v9h-9zM376 764h9v9h-9zM291 754h9v9h-9zM301 754h9v9h-9zM361 754h9v9h-9zM371 754h9v9h-9zM296 744h9v9h-9zM366 744h9v9h-9zM411 574h9v9h-9zM406 564h9v9h-9zM416 564h9v9h-9zM331 554h9v9h-9zM401 554h9v9h-9zM421 554h9v9h-9zM326 544h9v9h-9zM336 544h9v9h-9zM396 544h9v9h-9zM426 544h9v9h-9zM321 534h9v9h-9zM341 534h9v9h-9zM391 534h9v9h-9zM276 524h9v9h-9zM316 524h9v9h-9zM346 524h9v9h-9zM386 524h9v9h-9zM281 514h9v9h-9zM311 514h9v9h-9zM351 514h9v9h-9zM381 514h9v9h-9zM286 504h9v9h-9zM306 504h9v9h-9zM356 504h9v9h-9zM376 504h9v9h-9zM291 494h9v9h-9zM301 494h9v9h-9zM361 494h9v9h-9zM371 494h9v9h-9zM296 484h9v9h-9zM366 484h9v9h-9zM411 314h9v9h-9zM406 304h9v9h-9zM416 304h9v9h-9zM331 294h9v9h-9z" fill="#9900ff"/>
<path d="M411 814h9v9h-9zM406 804h9v9h-9zM416 804h9v9h-9zM331 794h9v9h-9zM401 794h9v9h-9zM421 794h9v9h-9zM326 784h9v9h-9zM336 784h9v9h-9zM396 784h9v9h-9zM426 784h9v9h-9zM321 774h9v9h-9zM341 774h9v9h-9zM391 774h9v9h-9zM276 764h9v9h-9zM316 764h9v9h-9zM346 764h9v9h-9zM386 764h9v9h-9zM281 754h9v9h-9zM311 754h9v9h-9zM351 754h9v9h-9zM381 754h9v9h-9zM286 744h9v9h-9zM306 744h9v9h-9zM356 744h9v9h-9zM376 744h9v9h-9zM291 734h9v9h-9zM301 734h9v9h-9zM361 734h9v9h-9zM371 734h9v9h-9zM296 724h9v9h-9zM366 724h9v9h-9zM411 554h9v9h-9zM406 544h9v9h-9zM416 544h9v9h-9zM331 534h9v9h-9zM401 534h9v9h-9zM421 534h9v9h-9zM326 524h9v9h-9zM336 524h9v9h-9zM396 524h9v9h-9zM426 524h9v9h-9zM321 514h9v9h-9zM341 514h9v9h-9zM391 514h9v9h-9zM276 504h9v9h-9zM316 504h9v9h-9zM346 504h9v9h-9zM386 504h9v9h-9zM281 494h9v9h-9zM311 494h9v9h-9zM351 494h9v9h-9zM381 494h9v9h-9zM286 484h9v9h-9zM306 484h9v9h-9zM356 484h9v9h-9zM376 484h9v9h-9zM291 474h9v9h-9zM301 474h9v9h-9zM361 474h9v9h-9zM371 474h9v9h-9zM296 464h9v9h-9zM366 464h9v9h-9z" fill="#ccccff"/>
<rect x="508" y="70.2166" width="76" height="883.7834" fill="#404040"/>
<path d="M509 944h9v9h-9zM539 944h9v9h-9zM514 934h9v9h-9zM534 934h9v9h-9zM519 924h9v9h-9zM529 924h9v9h-9zM524 914h9v9h-9zM569 864h9v9h-9zM564 854h9v9h-9zM574 854h9v9h-9zM559 844h9v9h-9zM579 844h4v9h-4zM554 834h9v9h-9zM549 824h9v9h-9zM509 814h4v9h-4zM544 814h9v9h-9zM509 804h9v9h-9zM539 804h9v9h-9zM514 794h9v9h-9zM534 794h9v9h-9zM519 784h9v9h-9zM529 784h9v9h-9zM569 784h9v9h-9zM524 774h9v9h-9zM564 774h9v9h-9zM574 774h9v9h-9zM559 764h9v9h-9zM579 764h4v9h-4zM554 754h9v9h-9zM549 744h9v9h-9zM569 744h9v9h-9zM509 734h4v9h-4zM544 734h9v9h-9zM564 734h9v9h-9zM574 734h9v9h-9zM509 724h9v9h-9zM539 724h9v9h-9zM559 724h9v9h-9zM579 724h4v9h-4zM514 714h9v9h-9zM534 714h9v9h-9zM554 714h9v9h-9zM519 704h9v9h-9zM529 704h9v9h-9zM549 704h9v9h-9zM509 694h4v9h-4zM524 694h9v9h-9zM544 694h9v9h-9zM509 684h9v9h-9zM539 684h9v9h-9zM514 674h9v9h-9zM534 674h9v9h-9zM519 664h9v9h-9zM529 664h9v9h-9zM524 654h9v9h-9zM569 604h9v9h-9zM564 594h9v9h-9zM574 594h9v9h-9zM559 584h9v9h-9zM579 584h4v9h-4zM554 574h9v9h-9zM549 564h9v9h-9zM509 554h4v9h-4zM544 554h9v9h-9zM509 544h9v9h-9zM539 544h9v9h-9zM514 534h9v9h-9zM534 534h9v9h-9zM519 524h9v9h-9zM529 524h9v9h-9zM569 524h9v9h-9zM524 514h9v9h-9zM564 514h9v9h-9zM574 514h9v9h-9zM559 504h9v9h-9zM579 504h4v9h-4zM554 494h9v9h-9zM549 484h9v9h-9zM569 484h9v9h-9zM509 474h4v9h-4zM544 474h9v9h-9zM564 474h9v9h-9zM574 474h9v9h-9zM509 464h9v9h-9zM539 464h9v9h-9zM559 464h9v9h-9zM579 464h4v9h-4zM514 454h9v9h-9zM534 454h9v9h-9zM554 454h9v9h-9zM519 444h9v9h-9zM529 444h9v9h-9zM549 444h9v9h-9zM509 434h4v9h-4zM524 434h9v9h-9zM544 434h9v9h-9zM509 424h9v9h-9zM539 424h9v9h-9zM514 414h9v9h-9zM534 414h9v9h-9zM519 404h9v9h-9zM529 404h9v9h-9zM524 394h9v9h-9zM569 344h9v9h-9zM564 334h9v9h-9zM574 334h9v9h-9zM559 324h9v9h-9zM579 324h4v9h-4zM554 314h9v9h-9zM549 304h9v9h-9zM509 294h4v9h-4zM544 294h9v9h-9zM509 284h9v9h-9zM539 284h9v9h-9zM559 284h9v9h-9zM569 284h9v9h-9zM579 284h4v9h-4zM509 274h4v9h-4zM514 274h9v9h-9zM524 274h9v9h-9zM534 274h9v9h-9zM544 274h9v9h-9zM554 274h9v9h-9zM564 274h9v9h-9zM574 274h9v9h-9zM509 264h9v9h-9zM519 264h9v9h-9zM529 264h9v9h-9zM539 264h9v9h-9zM549 264h9v9h-9zM559 264h9v9h-9zM569 264h9v9h-9zM579 264h4v9h-4zM509 254h4v9h-4zM514 254h9v9h-9zM524 254h9v9h-9zM534 254h9v9h-9zM544 254h9v9h-9zM554 254h9v9h-9zM564 254h9v9h-9zM574 254h9v9h-9zM509 244h9v9h-9zM519 244h9v9h-9zM529 244h9v9h-9zM539 244h9v9h-9zM549 244h9v9h-9zM559 244h9v9h-9zM569 244h9v9h-9zM579 244h4v9h-4zM509 234h4v9h-4zM514 234h9v9h-9zM524 234h9v9h-9zM534 234h9v9h-9zM544 234h9v9h-9zM554 234h9v9h-9zM564 234h9v9h-9zM574 234h9v9h-9zM509 224h9v9h-9zM519 224h9v9h-9zM529 224h9v9h-9zM539 224h9v9h-9zM549 224h9v9h-9zM559 224h9v9h-9zM569 224h9v9h-9zM579 224h4v9h-4zM509 214h4v9h-4zM514 214h9v9h-9zM524 214h9v9h-9zM534 214h9v9h-9zM544 214h9v9h-9zM554 214h9v9h-9zM564 214h9v9h-9zM574 214h9v9h-9zM509 204h9v9h-9zM519 204h9v9h-9zM529 204h9v9h-9zM539 204h9v9h-9zM549 204h9v9h-9zM559 204h9v9h-9zM569 204h9v9h-9zM579 204h4v9h-4zM509 194h4v9h-4zM514 194h9v9h-9zM524 194h9v9h-9zM534 194h9v9h-9zM544 194h9v9h-9zM554 194h9v9h-9zM564 194h9v9h-9zM574 194h9v9h-9zM509 184h9v9h-9zM519 184h9v9h-9zM529 184h9v9h-9zM539 184h9v9h-9zM549 184h9v9h-9zM559 184h9v9h-9zM569 184h9v9h-9zM579 184h4v9h-4zM509 174h4v9h-4zM514 174h9v9h-9zM524 174h9v9h-9zM534 174h9v9h-9zM544 174h9v9h-9zM554 174h9v9h-9zM564 174h9v9h-9zM574 174h9v9h-9zM509 164h9v9h-9zM519 164h9v9h-9zM529 164h9v9h-9zM539 164h9v9h-9zM549 164h9v9h-9zM559 164h9v9h-9zM569 164h9v9h-9zM579 164h4v9h-4zM509 154h4v9h-4zM514 154h9v9h-9zM524 154h9v9h-9zM534 154h9v9h-9zM544 154h9v9h-9zM554 154h9v9h-9zM564 154h9v9h-9zM574 154h9v9h-9zM509 144h9v9h-9zM519 144h9v9h-9zM529 144h9v9h-9zM539 144h9v9h-9zM549 144h9v9h-9zM559 144h9v9h-9zM569 144h9v9h-9zM579 144h4v9h-4zM509 134h4v9h-4zM514 134h9v9h-9zM524 134h9v9h-9zM534 134h9v9h-9zM544 134h9v9h-9zM554 134h9v9h-9zM564 134h9v9h-9zM574 134h9v9h-9zM509 124h9v9h-9zM519 124h9v9h-9zM529 124h9v9h-9zM539 124h9v9h-9zM549 124h9v9h-9zM559 124h9v9h-9zM569 124h9v9h-9zM579 124h4v9h-4zM509 114h4v9h-4zM514 114h9v9h-9zM524 114h9v9h-9zM534 114h9v9h-9zM544 114h9v9h-9zM554 114h9v9h-9zM564 114h9v9h-9zM574 114h9v9h-9zM509 104h9v9h-9zM519 104h9v9h-9zM529 104h9v9h-9zM539 104h9v9h-9zM549 104h9v9h-9zM559 104h9v9h-9zM569 104h9v9h-9zM579 104h4v9h-4zM509 94h4v9h-4zM514 94h9v9h-9zM524 94h9v9h-9zM534 94h9v9h-9zM544 94h9v9h-9zM554 94h9v9h-9zM564 94h9v9h-9zM574 94h9v9h-9zM509 84h9v9h-9zM519 84h9v9h-9zM529 84h9v9h-9zM539 84h9v9h-9zM549 84h9v9h-9zM559 84h9v9h-9zM569 84h9v9h-9zM579 84h4v9h-4zM509 74h4v9h-4zM514 74h9v9h-9zM524 74h9v9h-9zM534 74h9v9h-9zM544 74h9v9h-9zM554 74h9v9h-9zM564 74h9v9h-9zM574 74h9v9h-9zM509 70.2166h9v2.7834h-9zM519 70.2166h9v2.7834h-9zM529 70.2166h9v2.7834h-9zM539 70.2166h9v2.7834h-9zM549 70.2166h9v2.7834h-9zM559 70.2166h9v2.7834h-9zM569 70.2166h9v2.7834h-9zM579 70.2166h4v2.7834h-4z" fill="#ffffff"/>
<path d="M519 944h9v9h-9zM529 944h9v9h-9zM524 934h9v9h-9zM569 924h9v9h-9zM564 914h9v9h-9zM574 914h9v9h-9zM559 904h9v9h-9zM579 904h4v9h-4zM554 894h9v9h-9zM549 884h9v9h-9zM509 874h4v9h-4zM544 874h9v9h-9zM509 864h9v9h-9zM539 864h9v9h-9zM514 854h9v9h-9zM534 854h9v9h-9zM519 844h9v9h-9zM529 844h9v9h-9zM569 844h9v9h-9zM524 834h9v9h-9zM564 834h9v9h-9zM574 834h9v9h-9zM559 824h9v9h-9zM579 824h4v9h-4zM554 814h9v9h-9zM549 804h9v9h-9zM509 794h4v9h-4zM544 794h9v9h-9zM509 784h9v9h-9zM539 784h9v9h-9zM514 774h9v9h-9zM534 774h9v9h-9zM519 764h9v9h-9zM529 764h9v9h-9zM569 764h9v9h-9zM524 754h9v9h-9zM564 754h9v9h-9zM574 754h9v9h-9zM559 744h9v9h-9zM579 744h4v9h-4zM554 734h9v9h-9zM549 724h9v9h-9zM509 714h4v9h-4zM544 714h9v9h-9zM509 704h9v9h-9zM539 704h9v9h-9zM514 694h9v9h-9zM534 694h9v9h-9zM519 684h9v9h-9zM529 684h9v9h-9zM524 674h9v9h-9zM569 664h9v9h-9zM564 654h9v9h-9zM574 654h9v9h-9zM559 644h9v9h-9zM579 644h4v9h-4zM554 634h9v9h-9zM549 624h9v9h-9zM509 614h4v9h-4zM544 614h9v9h-9zM509 604h9v9h-9zM539 604h9v9h-9zM514 594h9v9h-9zM534 594h9v9h-9zM519 584h9v9h-9zM529 584h9v9h-9zM569 584h9v9h-9zM524 574h9v9h-9zM564 574h9v9h-9zM574 574h9v9h-9zM559 564h9v9h-9zM579 564h4v9h-4zM554 554h9v9h-9zM549 544h9v9h-9zM509 534h4v9h-4zM544 534h9v9h-9zM509 524h9v9h-9zM539 524h9v9h-9zM514 514h9v9h-9zM534 514h9v9h-9zM519 504h9v9h-9zM529 504h9v9h-9zM569 504h9v9h-9zM524 494h9v9h-9zM564 494h9v9h-9zM574 494h9v9h-9zM559 484h9v9h-9zM579 484h4v9h-4zM554 474h9v9h-9zM549 464h9v9h-9zM509 454h4v9h-4zM544 454h9v9h-9zM509 444h9v9h-9zM539 444h9v9h-9zM514 434h9v9h-9zM534 434h9v9h-9zM519 424h9v9h-9zM529 424h9v9h-9zM524 414h9v9h-9zM569 404h9v9h-9zM564 394h9v9h-9zM574 394h9v9h-9zM559 384h9v9h-9zM579 384h4v9h-4zM554 374h9v9h-9zM549 364h9v9h-9zM509 354h4v9h-4zM544 354h9v9h-9zM509 344h9v9h-9zM539 344h9v9h-9zM514 334h9v9h-9zM534 334h9v9h-9zM519 324h9v9h-9zM529 324h9v9h-9zM569 324h9v9h-9zM524 314h9v9h-9zM564 314h9v9h-9zM574 314h9v9h-9zM559 304h9v9h-9zM579 304h4v9h-4zM554 294h9v9h-9zM549 284h9v9h-9z" fill="#000000"/>
<path d="M569 944h9v9h-9zM564 934h9v9h-9zM574 934h9v9h-9zM559 924h9v9h-9zM579 924h4v9h-4zM554 914h9v9h-9zM549 904h9v9h-9zM509 894h4v9h-4zM544 894h9v9h-9zM509 884h9v9h-9zM539 884h9v9h-9zM514 874h9v9h-9zM534 874h9v9h-9zM519 864h9v9h-9zM529 864h9v9h-9zM524 854h9v9h-9zM569 684h9v9h-9zM564 674h9v9h-9zM574 674h9v9h-9zM559 664h9v9h-9zM579 664h4v9h-4zM554 654h9v9h-9zM549 644h9v9h-9zM509 634h4v9h-4zM544 634h9v9h-9zM509 624h9v9h-9zM539 624h9v9h-9zM514 614h9v9h-9zM534 614h9v9h-9zM519 604h9v9h-9zM529 604h9v9h-9zM524 594h9v9h-9zM569 424h9v9h-9zM564 414h9v9h-9zM574 414h9v9h-9zM559 404h9v9h-9zM579 404h4v9h-4zM554 394h9v9h-9zM549 384h9v9h-9zM509 374h4v9h-4zM544 374h9v9h-9zM509 364h9v9h-9zM539 364h9v9h-9zM514 354h9v9h-9zM534 354h9v9h-9zM519 344h9v9h-9zM529 344h9v9h-9zM524 334h9v9h-9z" fill="#006633"/>
<path d="M549 944h9v9h-9zM509 934h4v9h-4zM544 934h9v9h-9zM509 924h9v9h-9zM539 924h9v9h-9zM514 914h9v9h-9zM534 914h9v9h-9zM519 904h9v9h-9zM529 904h9v9h-9zM524 894h9v9h-9zM569 724h9v9h-9zM564 714h9v9h-9zM574 714h9v9h-9zM559 704h9v9h-9zM579 704h4v9h-4zM554 694h9v9h-9zM549 684h9v9h-9zM509 674h4v9h-4zM544 674h9v9h-9zM509 664h9v9h-9zM539 664h9v9h-9zM514 654h9v9h-9zM534 654h9v9h-9zM519 644h9v9h-9zM529 644h9v9h-9zM524 634h9v9h-9zM569 464h9v9h-9zM564 454h9v9h-9zM574 454h9v9h-9zM559 444h9v9h-9zM579 444h4v9h-4zM554 434h9v9h-9zM549 424h9v9h-9zM509 414h4v9h-4zM544 414h9v9h-9zM509 404h9v9h-9zM539 404h9v9h-9zM514 394h9v9h-9zM534 394h9v9h-9zM519 384h9v9h-9zM529 384h9v9h-9zM524 374h9v9h-9z" fill="#ccffcc"/>
<path d="M569 904h9v9h-9zM564 894h9v9h-9zM574 894h9v9h-9zM559 884h9v9h-9zM579 884h4v9h-4zM554 874h9v9h-9zM549 864h9v9h-9zM509 854h4v9h-4zM544 854h9v9h-9zM509 844h9v9h-9zM539 844h9v9h-9zM514 834h9v9h-9zM534 834h9v9h-9zM519 824h9v9h-9zM529 824h9v9h-9zM524 814h9v9h-9zM569 644h9v9h-9zM564 634h9v9h-9zM574 634h9v9h-9zM559 624h9v9h-9zM579 624h4v9h-4zM554 614h9v9h-9zM549 604h9v9h-9zM509 594h4v9h-4zM544 594h9v9h-9zM509 584h9v9h-9zM539 584h9v9h-9zM514 574h9v9h-9zM534 574h9v9h-9zM519 564h9v9h-9zM529 564h9v9h-9zM524 554h9v9h-9zM569 384h9v9h-9zM564 374h9v9h-9zM574 374h9v9h-9zM559 364h9v9h-9zM579 364h4v9h-4zM554 354h9v9h-9zM549 344h9v9h-9zM509 334h4v9h-4zM544 334h9v9h-9zM509 324h9v9h-9zM539 324h9v9h-9zM514 314h9v9h-9zM534 314h9v9h-9zM519 304h9v9h-9zM529 304h9v9h-9zM524 294h9v9h-9z" fill="#0066cc"/>
<path d="M569 884h9v9h-9zM564 874h9v9h-9zM574 874h9v9h-9zM559 864h9v9h-9zM579 864h4v9h-4zM554 854h9v9h-9zM549 844h9v9h-9zM509 834h4v9h-4zM544 834h9v9h-9zM509 824h9v9h-9zM539 824h9v9h-9zM514 814h9v9h-9zM534 814h9v9h-9zM519 804h9v9h-9zM529 804h9v9h-9zM524 794h9v9h-9zM569 624h9v9h-9zM564 614h9v9h-9zM574 614h9v9h-9zM559 604h9v9h-9zM579 604h4v9h-4zM554 594h9v9h-9zM549 584h9v9h-9zM509 574h4v9h-4zM544 574h9v9h-9zM509 564h9v9h-9zM539 564h9v9h-9zM514 554h9v9h-9zM534 554h9v9h-9zM519 544h9v9h-9zM529 544h9v9h-9zM524 534h9v9h-9zM569 364h9v9h-9zM564 354h9v9h-9zM574 354h9v9h-9zM559 344h9v9h-9zM579 344h4v9h-4zM554 334h9v9h-9zM549 324h9v9h-9zM509 314h4v9h-4zM544 314h9v9h-9zM509 304h9v9h-9zM539 304h9v9h-9zM514 294h9v9h-9zM534 294h9v9h-9zM519 284h9v9h-9zM529 284h9v9h-9z" fill="#33ccff"/>
<path d="M559 944h9v9h-9zM579 944h4v9h-4zM554 934h9v9h-9zM549 924h9v9h-9zM509 914h4v9h-4zM544 914h9v9h-9zM509 904h9v9h-9zM539 904h9v9h-9zM514 894h9v9h-9zM534 894h9v9h-9zM519 884h9v9h-9zM529 884h9v9h-9zM524 874h9v9h-9zM569 704h9v9h-9zM564 694h9v9h-9zM574 694h9v9h-9zM559 684h9v9h-9zM579 684h4v9h-4zM554 674h9v9h-9zM549 664h9v9h-9zM509 654h4v9h-4zM544 654h9v9h-9zM509 644h9v9h-9zM539 644h9v9h-9zM514 634h9v9h-9zM534 634h9v9h-9zM519 624h9v9h-9zM529 624h9v9h-9zM524 614h9v9h-9zM569 444h9v9h-9zM564 434h9v9h-9zM574 434h9v9h-9zM559 424h9v9h-9zM579 424h4v9h-4zM554 414h9v9h-9zM549 404h9v9h-9zM509 394h4v9h-4zM544 394h9v9h-9zM509 384h9v9h-9zM539 384h9v9h-9zM514 374h9v9h-9zM534 374h9v9h-9zM519 364h9v9h-9zM529 364h9v9h-9zM524 354h9v9h-9z" fill="#00cc66"/>
<path d="M569 824h9v9h-9zM564 814h9v9h-9zM574 814h9v9h-9zM559 804h9v9h-9zM579 804h4v9h-4zM554 794h9v9h-9zM549 784h9v9h-9zM509 774h4v9h-4zM544 774h9v9h-9zM509 764h9v9h-9zM539 764h9v9h-9zM514 754h9v9h-9zM534 754h9v9h-9zM519 744h9v9h-9zM529 744h9v9h-9zM524 734h9v9h-9zM569 564h9v9h-9zM564 554h9v9h-9zM574 554h9v9h-9zM559 544h9v9h-9zM579 544h4v9h-4zM554 534h9v9h-9zM549 524h9v9h-9zM509 514h4v9h-4zM544 514h9v9h-9zM509 504h9v9h-9zM539 504h9v9h-9zM514 494h9v9h-9zM534 494h9v9h-9zM519 484h9v9h-9zM529 484h9v9h-9zM524 474h9v9h-9zM569 304h9v9h-9zM564 294h9v9h-9zM574 294h9v9h-9z" fill="#9900ff"/>
<path d="M569 804h9v9h-9zM564 794h9v9h-9zM574 794h9v9h-9zM559 784h9v9h-9zM579 784h4v9h-4zM554 774h9v9h-9zM549 764h9v9h-9zM509 754h4v9h-4zM544 754h9v9h-9zM509 744h9v9h-9zM539 744h9v9h-9zM514 734h9v9h-9zM534 734h9v9h-9zM519 724h9v9h-9zM529 724h9v9h-9zM524 714h9v9h-9zM569 544h9v9h-9zM564 534h9v9h-9zM574 534h9v9h-9zM559 524h9v9h-9zM579 524h4v9h-4zM554 514h9v9h-9zM549 504h9v9h-9zM509 494h4v9h-4zM544 494h9v9h-9zM509 484h9v9h-9zM539 484h9v9h-9zM514 474h9v9h-9zM534 474h9v9h-9zM519 464h9v9h-9zM529 464h9v9h-9zM524 454h9v9h-9z" fill="#ccccff"/>
<g font-family="'Liberation Sans','DejaVu Sans',sans-serif" font-size="12" fill="#5c5c5c" stroke="#5c5c5c" stroke-width="0.2" style="font-kerning:none">
<text transform="matrix(1 0 0 1.035 108.7 976.5)" x="0 8.67 12.66 19.33 22.67">Draft</text>
<text transform="matrix(1 0 0 1.035 326.2 976.5)" x="0 8.83 15.67 19.83 23.99 30.83 36.99 40.49 47.33">Corrected</text>
<text transform="matrix(1 0 0 1.035 521.1 976.5)" x="0 8.22 11.11 21.32 28.22 31.1 37.99 41.55 44.43 51.33">Simulation</text>
<text transform="matrix(1 0 0 1.035 932.5 976.5)" x="0 8.86 15.73 22.6 29.47 33.67">Report</text>
</g>
<g font-family="'Liberation Sans','DejaVu Sans',sans-serif" font-size="12" fill="#2a2a2a" stroke="#2a2a2a" stroke-width="0.2" style="font-kerning:none">
<text transform="matrix(1 0 0 1.035 651 86.4)">Pattern:</text><text transform="matrix(1 0 0 1.035 781.1 86.4)">зигзаги-15.jbb</text>
<text transform="matrix(1 0 0 1.035 651 102.4)">Circumference:</text><text transform="matrix(1 0 0 1.035 781.1 102.4)">15</text>
<text transform="matrix(1 0 0 1.035 651 118.4)">Repeat of colors:</text><text transform="matrix(1 0 0 1.035 781.1 118.4)">403 beads</text>
<text transform="matrix(1 0 0 1.035 651 134.4)">Rows per repeat:</text><text transform="matrix(1 0 0 1.035 781.1 134.4)">26 rows and 13 beads</text>
<text transform="matrix(1 0 0 1.035 651 150.4)">Total number of rows:</text><text transform="matrix(1 0 0 1.035 781.1 150.4)">69</text>
<text transform="matrix(1 0 0 1.035 651 166.4)">Total number of beads:</text><text transform="matrix(1 0 0 1.035 781.1 166.4)">1035 beads</text>
<text transform="matrix(1 0 0 1.035 651 236)">List of beads</text>
</g>
<g font-family="'Liberation Sans','DejaVu Sans',sans-serif" font-size="12" fill="#2a2a2a" stroke="#2a2a2a" stroke-width="0.2" style="font-kerning:none">
<text transform="matrix(1 0 0 1.035 657.54 190.2)" x="0 6.8 13.6 20.4 23.86">221 x</text>
<rect x="691" y="174" width="17" height="17" fill="#000000"/><rect x="692" y="175" width="15" height="15" fill="#ffffff"/>
<text transform="matrix(1 0 0 1.035 730.54 190.2)" x="0 6.8 13.6 20.4 23.86">236 x</text>
<rect x="764" y="174" width="17" height="17" fill="#000000"/><rect x="765" y="175" width="15" height="15" fill="#000000"/>
<text transform="matrix(1 0 0 1.035 810.22 190.2)" x="0 6.84 13.68 17.18">93 x</text>
<rect x="837" y="174" width="17" height="17" fill="#000000"/><rect x="838" y="175" width="15" height="15" fill="#006633"/>
<text transform="matrix(1 0 0 1.035 883.22 190.2)" x="0 6.84 13.68 17.18">83 x</text>
<rect x="910" y="174" width="17" height="17" fill="#000000"/><rect x="911" y="175" width="15" height="15" fill="#ccffcc"/>
<text transform="matrix(1 0 0 1.035 956.22 190.2)" x="0 6.84 13.68 17.18">93 x</text>
<rect x="983" y="174" width="17" height="17" fill="#000000"/><rect x="984" y="175" width="15" height="15" fill="#0066cc"/>
<text transform="matrix(1 0 0 1.035 1029.22 190.2)" x="0 6.84 13.68 17.18">91 x</text>
<rect x="1056" y="174" width="17" height="17" fill="#000000"/><rect x="1057" y="175" width="15" height="15" fill="#33ccff"/>
<text transform="matrix(1 0 0 1.035 1102.22 190.2)" x="0 6.84 13.68 17.18">90 x</text>
<rect x="1129" y="174" width="17" height="17" fill="#000000"/><rect x="1130" y="175" width="15" height="15" fill="#00cc66"/>
<text transform="matrix(1 0 0 1.035 1175.22 190.2)" x="0 6.84 13.68 17.18">66 x</text>
<rect x="1202" y="174" width="17" height="17" fill="#000000"/><rect x="1203" y="175" width="15" height="15" fill="#9900ff"/>
<text transform="matrix(1 0 0 1.035 664.22 209.2)" x="0 6.84 13.68 17.18">62 x</text>
<rect x="691" y="193" width="17" height="17" fill="#000000"/><rect x="692" y="194" width="15" height="15" fill="#ccccff"/>
</g>
<g font-family="'Liberation Sans','DejaVu Sans',sans-serif" font-size="12" fill="#2a2a2a" stroke="#2a2a2a" stroke-width="0.2" style="font-kerning:none">
<rect x="651" y="239" width="17" height="17" fill="#000000"/><rect x="652" y="240" width="15" height="15" fill="#ccffcc"/>
<text transform="matrix(1 0 0 1.035 670 252)">1</text>
<rect x="651" y="258" width="17" height="17" fill="#000000"/><rect x="652" y="259" width="15" height="15" fill="#00cc66"/>
<text transform="matrix(1 0 0 1.035 670 271)">2</text>
<rect x="651" y="277" width="17" height="17" fill="#000000"/><rect x="652" y="278" width="15" height="15" fill="#ccffcc"/>
<text transform="matrix(1 0 0 1.035 670 290)">1</text>
<rect x="651" y="296" width="17" height="17" fill="#000000"/><rect x="652" y="297" width="15" height="15" fill="#ffffff"/>
<text transform="matrix(1 0 0 1.035 670 309)">1</text>
<rect x="651" y="315" width="17" height="17" fill="#000000"/><rect x="652" y="316" width="15" height="15" fill="#000000"/>
<text transform="matrix(1 0 0 1.035 670 328)">1</text>
<rect x="651" y="334" width="17" height="17" fill="#000000"/><rect x="652" y="335" width="15" height="15" fill="#ffffff"/>
<text transform="matrix(1 0 0 1.035 670 347)">1</text>
<rect x="651" y="353" width="17" height="17" fill="#000000"/><rect x="652" y="354" width="15" height="15" fill="#000000"/>
<text transform="matrix(1 0 0 1.035 670 366)">1</text>
<rect x="651" y="372" width="17" height="17" fill="#000000"/><rect x="652" y="373" width="15" height="15" fill="#ffffff"/>
<text transform="matrix(1 0 0 1.035 670 385)">1</text>
<rect x="651" y="391" width="17" height="17" fill="#000000"/><rect x="652" y="392" width="15" height="15" fill="#ccffcc"/>
<text transform="matrix(1 0 0 1.035 670 404)">2</text>
<rect x="651" y="410" width="17" height="17" fill="#000000"/><rect x="652" y="411" width="15" height="15" fill="#ffffff"/>
<text transform="matrix(1 0 0 1.035 670 423)">1</text>
<rect x="651" y="429" width="17" height="17" fill="#000000"/><rect x="652" y="430" width="15" height="15" fill="#000000"/>
<text transform="matrix(1 0 0 1.035 670 442)">1</text>
<rect x="651" y="448" width="17" height="17" fill="#000000"/><rect x="652" y="449" width="15" height="15" fill="#ffffff"/>
<text transform="matrix(1 0 0 1.035 670 461)">1</text>
<rect x="651" y="467" width="17" height="17" fill="#000000"/><rect x="652" y="468" width="15" height="15" fill="#000000"/>
<text transform="matrix(1 0 0 1.035 670 480)">1</text>
<rect x="651" y="486" width="17" height="17" fill="#000000"/><rect x="652" y="487" width="15" height="15" fill="#ffffff"/>
<text transform="matrix(1 0 0 1.035 670 499)">1</text>
<rect x="651" y="505" width="17" height="17" fill="#000000"/><rect x="652" y="506" width="15" height="15" fill="#ccffcc"/>
<text transform="matrix(1 0 0 1.035 670 518)">1</text>
<rect x="651" y="524" width="17" height="17" fill="#000000"/><rect x="652" y="525" width="15" height="15" fill="#00cc66"/>
<text transform="matrix(1 0 0 1.035 670 537)">1</text>
<rect x="651" y="543" width="17" height="17" fill="#000000"/><rect x="652" y="544" width="15" height="15" fill="#ccffcc"/>
<text transform="matrix(1 0 0 1.035 670 556)">1</text>
<rect x="651" y="562" width="17" height="17" fill="#000000"/><rect x="652" y="563" width="15" height="15" fill="#ffffff"/>
<text transform="matrix(1 0 0 1.035 670 575)">1</text>
<rect x="651" y="581" width="17" height="17" fill="#000000"/><rect x="652" y="582" width="15" height="15" fill="#000000"/>
<text transform="matrix(1 0 0 1.035 670 594)">1</text>
<rect x="651" y="600" width="17" height="17" fill="#000000"/><rect x="652" y="601" width="15" height="15" fill="#ffffff"/>
<text transform="matrix(1 0 0 1.035 670 613)">2</text>
<rect x="651" y="619" width="17" height="17" fill="#000000"/><rect x="652" y="620" width="15" height="15" fill="#000000"/>
<text transform="matrix(1 0 0 1.035 670 632)">1</text>
<rect x="651" y="638" width="17" height="17" fill="#000000"/><rect x="652" y="639" width="15" height="15" fill="#ffffff"/>
<text transform="matrix(1 0 0 1.035 670 651)">1</text>
<rect x="651" y="657" width="17" height="17" fill="#000000"/><rect x="652" y="658" width="15" height="15" fill="#ccffcc"/>
<text transform="matrix(1 0 0 1.035 670 670)">1</text>
<rect x="651" y="676" width="17" height="17" fill="#000000"/><rect x="652" y="677" width="15" height="15" fill="#ffffff"/>
<text transform="matrix(1 0 0 1.035 670 689)">1</text>
<rect x="651" y="695" width="17" height="17" fill="#000000"/><rect x="652" y="696" width="15" height="15" fill="#000000"/>
<text transform="matrix(1 0 0 1.035 670 708)">1</text>
<rect x="651" y="714" width="17" height="17" fill="#000000"/><rect x="652" y="715" width="15" height="15" fill="#ffffff"/>
<text transform="matrix(1 0 0 1.035 670 727)">2</text>
<rect x="651" y="733" width="17" height="17" fill="#000000"/><rect x="652" y="734" width="15" height="15" fill="#000000"/>
<text transform="matrix(1 0 0 1.035 670 746)">1</text>
<rect x="651" y="752" width="17" height="17" fill="#000000"/><rect x="652" y="753" width="15" height="15" fill="#ffffff"/>
<text transform="matrix(1 0 0 1.035 670 765)">1</text>
<rect x="651" y="771" width="17" height="17" fill="#000000"/><rect x="652" y="772" width="15" height="15" fill="#ccffcc"/>
<text transform="matrix(1 0 0 1.035 670 784)">2</text>
<rect x="651" y="790" width="17" height="17" fill="#000000"/><rect x="652" y="791" width="15" height="15" fill="#ffffff"/>
<text transform="matrix(1 0 0 1.035 670 803)">1</text>
<rect x="651" y="809" width="17" height="17" fill="#000000"/><rect x="652" y="810" width="15" height="15" fill="#000000"/>
<text transform="matrix(1 0 0 1.035 670 822)">1</text>
<rect x="651" y="828" width="17" height="17" fill="#000000"/><rect x="652" y="829" width="15" height="15" fill="#ffffff"/>
<text transform="matrix(1 0 0 1.035 670 841)">1</text>
<rect x="651" y="847" width="17" height="17" fill="#000000"/><rect x="652" y="848" width="15" height="15" fill="#ccccff"/>
<text transform="matrix(1 0 0 1.035 670 860)">1</text>
<rect x="651" y="866" width="17" height="17" fill="#000000"/><rect x="652" y="867" width="15" height="15" fill="#ffffff"/>
<text transform="matrix(1 0 0 1.035 670 879)">1</text>
<rect x="651" y="885" width="17" height="17" fill="#000000"/><rect x="652" y="886" width="15" height="15" fill="#000000"/>
<text transform="matrix(1 0 0 1.035 670 898)">1</text>
<rect x="651" y="904" width="17" height="17" fill="#000000"/><rect x="652" y="905" width="15" height="15" fill="#ffffff"/>
<text transform="matrix(1 0 0 1.035 670 917)">2</text>
<rect x="651" y="923" width="17" height="17" fill="#000000"/><rect x="652" y="924" width="15" height="15" fill="#000000"/>
<text transform="matrix(1 0 0 1.035 670 936)">1</text>
<rect x="651" y="942" width="17" height="17" fill="#000000"/><rect x="652" y="943" width="15" height="15" fill="#ffffff"/>
<text transform="matrix(1 0 0 1.035 670 955)">1</text>
<rect x="699" y="239" width="17" height="17" fill="#000000"/><rect x="700" y="240" width="15" height="15" fill="#ccccff"/>
<text transform="matrix(1 0 0 1.035 718 252)">1</text>
<rect x="699" y="258" width="17" height="17" fill="#000000"/><rect x="700" y="259" width="15" height="15" fill="#ffffff"/>
<text transform="matrix(1 0 0 1.035 718 271)">1</text>
<rect x="699" y="277" width="17" height="17" fill="#000000"/><rect x="700" y="278" width="15" height="15" fill="#000000"/>
<text transform="matrix(1 0 0 1.035 718 290)">1</text>
<rect x="699" y="296" width="17" height="17" fill="#000000"/><rect x="700" y="297" width="15" height="15" fill="#ffffff"/>
<text transform="matrix(1 0 0 1.035 718 309)">1</text>
<rect x="699" y="315" width="17" height="17" fill="#000000"/><rect x="700" y="316" width="15" height="15" fill="#ccffcc"/>
<text transform="matrix(1 0 0 1.035 718 328)">1</text>
<rect x="699" y="334" width="17" height="17" fill="#000000"/><rect x="700" y="335" width="15" height="15" fill="#ffffff"/>
<text transform="matrix(1 0 0 1.035 718 347)">1</text>
<rect x="699" y="353" width="17" height="17" fill="#000000"/><rect x="700" y="354" width="15" height="15" fill="#000000"/>
<text transform="matrix(1 0 0 1.035 718 366)">1</text>
<rect x="699" y="372" width="17" height="17" fill="#000000"/><rect x="700" y="373" width="15" height="15" fill="#ffffff"/>
<text transform="matrix(1 0 0 1.035 718 385)">1</text>
<rect x="699" y="391" width="17" height="17" fill="#000000"/><rect x="700" y="392" width="15" height="15" fill="#ccccff"/>
<text transform="matrix(1 0 0 1.035 718 404)">2</text>
<rect x="699" y="410" width="17" height="17" fill="#000000"/><rect x="700" y="411" width="15" height="15" fill="#ffffff"/>
<text transform="matrix(1 0 0 1.035 718 423)">1</text>
<rect x="699" y="429" width="17" height="17" fill="#000000"/><rect x="700" y="430" width="15" height="15" fill="#000000"/>
<text transform="matrix(1 0 0 1.035 718 442)">1</text>
<rect x="699" y="448" width="17" height="17" fill="#000000"/><rect x="700" y="449" width="15" height="15" fill="#ffffff"/>
<text transform="matrix(1 0 0 1.035 718 461)">1</text>
<rect x="699" y="467" width="17" height="17" fill="#000000"/><rect x="700" y="468" width="15" height="15" fill="#000000"/>
<text transform="matrix(1 0 0 1.035 718 480)">1</text>
<rect x="699" y="486" width="17" height="17" fill="#000000"/><rect x="700" y="487" width="15" height="15" fill="#ffffff"/>
<text transform="matrix(1 0 0 1.035 718 499)">1</text>
<rect x="699" y="505" width="17" height="17" fill="#000000"/><rect x="700" y="506" width="15" height="15" fill="#ccccff"/>
<text transform="matrix(1 0 0 1.035 718 518)">2</text>
<rect x="699" y="524" width="17" height="17" fill="#000000"/><rect x="700" y="525" width="15" height="15" fill="#ffffff"/>
<text transform="matrix(1 0 0 1.035 718 537)">1</text>
<rect x="699" y="543" width="17" height="17" fill="#000000"/><rect x="700" y="544" width="15" height="15" fill="#000000"/>
<text transform="matrix(1 0 0 1.035 718 556)">1</text>
<rect x="699" y="562" width="17" height="17" fill="#000000"/><rect x="700" y="563" width="15" height="15" fill="#ffffff"/>
<text transform="matrix(1 0 0 1.035 718 575)">2</text>
<rect x="699" y="581" width="17" height="17" fill="#000000"/><rect x="700" y="582" width="15" height="15" fill="#000000"/>
<text transform="matrix(1 0 0 1.035 718 594)">1</text>
<rect x="699" y="600" width="17" height="17" fill="#000000"/><rect x="700" y="601" width="15" height="15" fill="#ffffff"/>
<text transform="matrix(1 0 0 1.035 718 613)">1</text>
<rect x="699" y="619" width="17" height="17" fill="#000000"/><rect x="700" y="620" width="15" height="15" fill="#ccccff"/>
<text transform="matrix(1 0 0 1.035 718 632)">1</text>
<rect x="699" y="638" width="17" height="17" fill="#000000"/><rect x="700" y="639" width="15" height="15" fill="#9900ff"/>
<text transform="matrix(1 0 0 1.035 718 651)">1</text>
<rect x="699" y="657" width="17" height="17" fill="#000000"/><rect x="700" y="658" width="15" height="15" fill="#ccccff"/>
<text transform="matrix(1 0 0 1.035 718 670)">1</text>
<rect x="699" y="676" width="17" height="17" fill="#000000"/><rect x="700" y="677" width="15" height="15" fill="#ffffff"/>
<text transform="matrix(1 0 0 1.035 718 689)">1</text>
<rect x="699" y="695" width="17" height="17" fill="#000000"/><rect x="700" y="696" width="15" height="15" fill="#000000"/>
<text transform="matrix(1 0 0 1.035 718 708)">2</text>
<rect x="699" y="714" width="17" height="17" fill="#000000"/><rect x="700" y="715" width="15" height="15" fill="#ffffff"/>
<text transform="matrix(1 0 0 1.035 718 727)">1</text>
<rect x="699" y="733" width="17" height="17" fill="#000000"/><rect x="700" y="734" width="15" height="15" fill="#ccccff"/>
<text transform="matrix(1 0 0 1.035 718 746)">1</text>
<rect x="699" y="752" width="17" height="17" fill="#000000"/><rect x="700" y="753" width="15" height="15" fill="#9900ff"/>
<text transform="matrix(1 0 0 1.035 718 765)">1</text>
<rect x="699" y="771" width="17" height="17" fill="#000000"/><rect x="700" y="772" width="15" height="15" fill="#ccccff"/>
<text transform="matrix(1 0 0 1.035 718 784)">1</text>
<rect x="699" y="790" width="17" height="17" fill="#000000"/><rect x="700" y="791" width="15" height="15" fill="#ffffff"/>
<text transform="matrix(1 0 0 1.035 718 803)">1</text>
<rect x="699" y="809" width="17" height="17" fill="#000000"/><rect x="700" y="810" width="15" height="15" fill="#000000"/>
<text transform="matrix(1 0 0 1.035 718 822)">1</text>
<rect x="699" y="828" width="17" height="17" fill="#000000"/><rect x="700" y="829" width="15" height="15" fill="#ffffff"/>
<text transform="matrix(1 0 0 1.035 718 841)">1</text>
<rect x="699" y="847" width="17" height="17" fill="#000000"/><rect x="700" y="848" width="15" height="15" fill="#000000"/>
<text transform="matrix(1 0 0 1.035 718 860)">1</text>
<rect x="699" y="866" width="17" height="17" fill="#000000"/><rect x="700" y="867" width="15" height="15" fill="#ffffff"/>
<text transform="matrix(1 0 0 1.035 718 879)">1</text>
<rect x="699" y="885" width="17" height="17" fill="#000000"/><rect x="700" y="886" width="15" height="15" fill="#ccccff"/>
<text transform="matrix(1 0 0 1.035 718 898)">1</text>
<rect x="699" y="904" width="17" height="17" fill="#000000"/><rect x="700" y="905" width="15" height="15" fill="#9900ff"/>
<text transform="matrix(1 0 0 1.035 718 917)">2</text>
<rect x="699" y="923" width="17" height="17" fill="#000000"/><rect x="700" y="924" width="15" height="15" fill="#ccccff"/>
<text transform="matrix(1 0 0 1.035 718 936)">1</text>
<rect x="699" y="942" width="17" height="17" fill="#000000"/><rect x="700" y="943" width="15" height="15" fill="#ffffff"/>
<text transform="matrix(1 0 0 1.035 718 955)">1</text>
<rect x="747" y="239" width="17" height="17" fill="#000000"/><rect x="748" y="240" width="15" height="15" fill="#000000"/>
<text transform="matrix(1 0 0 1.035 766 252)">1</text>
<rect x="747" y="258" width="17" height="17" fill="#000000"/><rect x="748" y="259" width="15" height="15" fill="#ffffff"/>
<text transform="matrix(1 0 0 1.035 766 271)">1</text>
<rect x="747" y="277" width="17" height="17" fill="#000000"/><rect x="748" y="278" width="15" height="15" fill="#ccccff"/>
<text transform="matrix(1 0 0 1.035 766 290)">1</text>
<rect x="747" y="296" width="17" height="17" fill="#000000"/><rect x="748" y="297" width="15" height="15" fill="#9900ff"/>
<text transform="matrix(1 0 0 1.035 766 309)">2</text>
<rect x="747" y="315" width="17" height="17" fill="#000000"/><rect x="748" y="316" width="15" height="15" fill="#ccccff"/>
<text transform="matrix(1 0 0 1.035 766 328)">1</text>
<rect x="747" y="334" width="17" height="17" fill="#000000"/><rect x="748" y="335" width="15" height="15" fill="#ffffff"/>
<text transform="matrix(1 0 0 1.035 766 347)">1</text>
<rect x="747" y="353" width="17" height="17" fill="#000000"/><rect x="748" y="354" width="15" height="15" fill="#000000"/>
<text transform="matrix(1 0 0 1.035 766 366)">2</text>
<rect x="747" y="372" width="17" height="17" fill="#000000"/><rect x="748" y="373" width="15" height="15" fill="#ffffff"/>
<text transform="matrix(1 0 0 1.035 766 385)">1</text>
<rect x="747" y="391" width="17" height="17" fill="#000000"/><rect x="748" y="392" width="15" height="15" fill="#ccccff"/>
<text transform="matrix(1 0 0 1.035 766 404)">1</text>
<rect x="747" y="410" width="17" height="17" fill="#000000"/><rect x="748" y="411" width="15" height="15" fill="#9900ff"/>
<text transform="matrix(1 0 0 1.035 766 423)">1</text>
<rect x="747" y="429" width="17" height="17" fill="#000000"/><rect x="748" y="430" width="15" height="15" fill="#000000"/>
<text transform="matrix(1 0 0 1.035 766 442)">1</text>
<rect x="747" y="448" width="17" height="17" fill="#000000"/><rect x="748" y="449" width="15" height="15" fill="#9900ff"/>
<text transform="matrix(1 0 0 1.035 766 461)">1</text>
<rect x="747" y="467" width="17" height="17" fill="#000000"/><rect x="748" y="468" width="15" height="15" fill="#ccccff"/>
<text transform="matrix(1 0 0 1.035 766 480)">1</text>
<rect x="747" y="486" width="17" height="17" fill="#000000"/><rect x="748" y="487" width="15" height="15" fill="#ffffff"/>
<text transform="matrix(1 0 0 1.035 766 499)">2</text>
<rect x="747" y="505" width="17" height="17" fill="#000000"/><rect x="748" y="506" width="15" height="15" fill="#ccccff"/>
<text transform="matrix(1 0 0 1.035 766 518)">1</text>
<rect x="747" y="524" width="17" height="17" fill="#000000"/><rect x="748" y="525" width="15" height="15" fill="#9900ff"/>
<text transform="matrix(1 0 0 1.035 766 537)">1</text>
<rect x="747" y="543" width="17" height="17" fill="#000000"/><rect x="748" y="544" width="15" height="15" fill="#000000"/>
<text transform="matrix(1 0 0 1.035 766 556)">1</text>
<rect x="747" y="562" width="17" height="17" fill="#000000"/><rect x="748" y="563" width="15" height="15" fill="#9900ff"/>
<text transform="matrix(1 0 0 1.035 766 575)">1</text>
<rect x="747" y="581" width="17" height="17" fill="#000000"/><rect x="748" y="582" width="15" height="15" fill="#ccccff"/>
<text transform="matrix(1 0 0 1.035 766 594)">1</text>
<rect x="747" y="600" width="17" height="17" fill="#000000"/><rect x="748" y="601" width="15" height="15" fill="#ffffff"/>
<text transform="matrix(1 0 0 1.035 766 613)">1</text>
<rect x="747" y="619" width="17" height="17" fill="#000000"/><rect x="748" y="620" width="15" height="15" fill="#000000"/>
<text transform="matrix(1 0 0 1.035 766 632)">1</text>
<rect x="747" y="638" width="17" height="17" fill="#000000"/><rect x="748" y="639" width="15" height="15" fill="#ffffff"/>
<text transform="matrix(1 0 0 1.035 766 651)">1</text>
<rect x="747" y="657" width="17" height="17" fill="#000000"/><rect x="748" y="658" width="15" height="15" fill="#ccccff"/>
<text transform="matrix(1 0 0 1.035 766 670)">1</text>
<rect x="747" y="676" width="17" height="17" fill="#000000"/><rect x="748" y="677" width="15" height="15" fill="#9900ff"/>
<text transform="matrix(1 0 0 1.035 766 689)">1</text>
<rect x="747" y="695" width="17" height="17" fill="#000000"/><rect x="748" y="696" width="15" height="15" fill="#000000"/>
<text transform="matrix(1 0 0 1.035 766 708)">2</text>
<rect x="747" y="714" width="17" height="17" fill="#000000"/><rect x="748" y="715" width="15" height="15" fill="#9900ff"/>
<text transform="matrix(1 0 0 1.035 766 727)">1</text>
<rect x="747" y="733" width="17" height="17" fill="#000000"/><rect x="748" y="734" width="15" height="15" fill="#ccccff"/>
<text transform="matrix(1 0 0 1.035 766 746)">1</text>
<rect x="747" y="752" width="17" height="17" fill="#000000"/><rect x="748" y="753" width="15" height="15" fill="#ffffff"/>
<text transform="matrix(1 0 0 1.035 766 765)">1</text>
<rect x="747" y="771" width="17" height="17" fill="#000000"/><rect x="748" y="772" width="15" height="15" fill="#ccccff"/>
<text transform="matrix(1 0 0 1.035 766 784)">1</text>
<rect x="747" y="790" width="17" height="17" fill="#000000"/><rect x="748" y="791" width="15" height="15" fill="#9900ff"/>
<text transform="matrix(1 0 0 1.035 766 803)">1</text>
<rect x="747" y="809" width="17" height="17" fill="#000000"/><rect x="748" y="810" width="15" height="15" fill="#000000"/>
<text transform="matrix(1 0 0 1.035 766 822)">2</text>
<rect x="747" y="828" width="17" height="17" fill="#000000"/><rect x="748" y="829" width="15" height="15" fill="#9900ff"/>
<text transform="matrix(1 0 0 1.035 766 841)">1</text>
<rect x="747" y="847" width="17" height="17" fill="#000000"/><rect x="748" y="848" width="15" height="15" fill="#ccccff"/>
<text transform="matrix(1 0 0 1.035 766 860)">1</text>
<rect x="747" y="866" width="17" height="17" fill="#000000"/><rect x="748" y="867" width="15" height="15" fill="#ffffff"/>
<text transform="matrix(1 0 0 1.035 766 879)">2</text>
<rect x="747" y="885" width="17" height="17" fill="#000000"/><rect x="748" y="886" width="15" height="15" fill="#ccccff"/>
<text transform="matrix(1 0 0 1.035 766 898)">1</text>
<rect x="747" y="904" width="17" height="17" fill="#000000"/><rect x="748" y="905" width="15" height="15" fill="#9900ff"/>
<text transform="matrix(1 0 0 1.035 766 917)">1</text>
<rect x="747" y="923" width="17" height="17" fill="#000000"/><rect x="748" y="924" width="15" height="15" fill="#000000"/>
<text transform="matrix(1 0 0 1.035 766 936)">1</text>
<rect x="747" y="942" width="17" height="17" fill="#000000"/><rect x="748" y="943" width="15" height="15" fill="#ffffff"/>
<text transform="matrix(1 0 0 1.035 766 955)">1</text>
<rect x="795" y="239" width="17" height="17" fill="#000000"/><rect x="796" y="240" width="15" height="15" fill="#000000"/>
<text transform="matrix(1 0 0 1.035 814 252)">1</text>
<rect x="795" y="258" width="17" height="17" fill="#000000"/><rect x="796" y="259" width="15" height="15" fill="#9900ff"/>
<text transform="matrix(1 0 0 1.035 814 271)">1</text>
<rect x="795" y="277" width="17" height="17" fill="#000000"/><rect x="796" y="278" width="15" height="15" fill="#ccccff"/>
<text transform="matrix(1 0 0 1.035 814 290)">2</text>
<rect x="795" y="296" width="17" height="17" fill="#000000"/><rect x="796" y="297" width="15" height="15" fill="#9900ff"/>
<text transform="matrix(1 0 0 1.035 814 309)">1</text>
<rect x="795" y="315" width="17" height="17" fill="#000000"/><rect x="796" y="316" width="15" height="15" fill="#000000"/>
<text transform="matrix(1 0 0 1.035 814 328)">1</text>
<rect x="795" y="334" width="17" height="17" fill="#000000"/><rect x="796" y="335" width="15" height="15" fill="#ffffff"/>
<text transform="matrix(1 0 0 1.035 814 347)">1</text>
<rect x="795" y="353" width="17" height="17" fill="#000000"/><rect x="796" y="354" width="15" height="15" fill="#000000"/>
<text transform="matrix(1 0 0 1.035 814 366)">1</text>
<rect x="795" y="372" width="17" height="17" fill="#000000"/><rect x="796" y="373" width="15" height="15" fill="#9900ff"/>
<text transform="matrix(1 0 0 1.035 814 385)">1</text>
<rect x="795" y="391" width="17" height="17" fill="#000000"/><rect x="796" y="392" width="15" height="15" fill="#ccccff"/>
<text transform="matrix(1 0 0 1.035 814 404)">1</text>
<rect x="795" y="410" width="17" height="17" fill="#000000"/><rect x="796" y="411" width="15" height="15" fill="#ffffff"/>
<text transform="matrix(1 0 0 1.035 814 423)">1</text>
<rect x="795" y="429" width="17" height="17" fill="#000000"/><rect x="796" y="430" width="15" height="15" fill="#ccccff"/>
<text transform="matrix(1 0 0 1.035 814 442)">1</text>
<rect x="795" y="448" width="17" height="17" fill="#000000"/><rect x="796" y="449" width="15" height="15" fill="#9900ff"/>
<text transform="matrix(1 0 0 1.035 814 461)">1</text>
<rect x="795" y="467" width="17" height="17" fill="#000000"/><rect x="796" y="468" width="15" height="15" fill="#000000"/>
<text transform="matrix(1 0 0 1.035 814 480)">1</text>
<rect x="795" y="486" width="17" height="17" fill="#000000"/><rect x="796" y="487" width="15" height="15" fill="#ffffff"/>
<text transform="matrix(1 0 0 1.035 814 499)">2</text>
<rect x="795" y="505" width="17" height="17" fill="#000000"/><rect x="796" y="506" width="15" height="15" fill="#000000"/>
<text transform="matrix(1 0 0 1.035 814 518)">1</text>
<rect x="795" y="524" width="17" height="17" fill="#000000"/><rect x="796" y="525" width="15" height="15" fill="#9900ff"/>
<text transform="matrix(1 0 0 1.035 814 537)">1</text>
<rect x="795" y="543" width="17" height="17" fill="#000000"/><rect x="796" y="544" width="15" height="15" fill="#ccccff"/>
<text transform="matrix(1 0 0 1.035 814 556)">1</text>
<rect x="795" y="562" width="17" height="17" fill="#000000"/><rect x="796" y="563" width="15" height="15" fill="#9900ff"/>
<text transform="matrix(1 0 0 1.035 814 575)">1</text>
<rect x="795" y="581" width="17" height="17" fill="#000000"/><rect x="796" y="582" width="15" height="15" fill="#000000"/>
<text transform="matrix(1 0 0 1.035 814 594)">1</text>
<rect x="795" y="600" width="17" height="17" fill="#000000"/><rect x="796" y="601" width="15" height="15" fill="#ffffff"/>
<text transform="matrix(1 0 0 1.035 814 613)">2</text>
<rect x="795" y="619" width="17" height="17" fill="#000000"/><rect x="796" y="620" width="15" height="15" fill="#000000"/>
<text transform="matrix(1 0 0 1.035 814 632)">1</text>
<rect x="795" y="638" width="17" height="17" fill="#000000"/><rect x="796" y="639" width="15" height="15" fill="#9900ff"/>
<text transform="matrix(1 0 0 1.035 814 651)">1</text>
<rect x="795" y="657" width="17" height="17" fill="#000000"/><rect x="796" y="658" width="15" height="15" fill="#ccccff"/>
<text transform="matrix(1 0 0 1.035 814 670)">2</text>
<rect x="795" y="676" width="17" height="17" fill="#000000"/><rect x="796" y="677" width="15" height="15" fill="#9900ff"/>
<text transform="matrix(1 0 0 1.035 814 689)">1</text>
<rect x="795" y="695" width="17" height="17" fill="#000000"/><rect x="796" y="696" width="15" height="15" fill="#000000"/>
<text transform="matrix(1 0 0 1.035 814 708)">1</text>
<rect x="795" y="714" width="17" height="17" fill="#000000"/><rect x="796" y="715" width="15" height="15" fill="#ffffff"/>
<text transform="matrix(1 0 0 1.035 814 727)">1</text>
<rect x="795" y="733" width="17" height="17" fill="#000000"/><rect x="796" y="734" width="15" height="15" fill="#33ccff"/>
<text transform="matrix(1 0 0 1.035 814 746)">1</text>
<rect x="795" y="752" width="17" height="17" fill="#000000"/><rect x="796" y="753" width="15" height="15" fill="#ffffff"/>
<text transform="matrix(1 0 0 1.035 814 765)">1</text>
<rect x="795" y="771" width="17" height="17" fill="#000000"/><rect x="796" y="772" width="15" height="15" fill="#000000"/>
<text transform="matrix(1 0 0 1.035 814 784)">1</text>
<rect x="795" y="790" width="17" height="17" fill="#000000"/><rect x="796" y="791" width="15" height="15" fill="#9900ff"/>
<text transform="matrix(1 0 0 1.035 814 803)">2</text>
<rect x="795" y="809" width="17" height="17" fill="#000000"/><rect x="796" y="810" width="15" height="15" fill="#000000"/>
<text transform="matrix(1 0 0 1.035 814 822)">1</text>
<rect x="795" y="828" width="17" height="17" fill="#000000"/><rect x="796" y="829" width="15" height="15" fill="#ffffff"/>
<text transform="matrix(1 0 0 1.035 814 841)">1</text>
<rect x="795" y="847" width="17" height="17" fill="#000000"/><rect x="796" y="848" width="15" height="15" fill="#33ccff"/>
<text transform="matrix(1 0 0 1.035 814 860)">1</text>
<rect x="795" y="866" width="17" height="17" fill="#000000"/><rect x="796" y="867" width="15" height="15" fill="#ffffff"/>
<text transform="matrix(1 0 0 1.035 814 879)">1</text>
<rect x="795" y="885" width="17" height="17" fill="#000000"/><rect x="796" y="886" width="15" height="15" fill="#000000"/>
<text transform="matrix(1 0 0 1.035 814 898)">1</text>
<rect x="795" y="904" width="17" height="17" fill="#000000"/><rect x="796" y="905" width="15" height="15" fill="#9900ff"/>
<text transform="matrix(1 0 0 1.035 814 917)">1</text>
<rect x="795" y="923" width="17" height="17" fill="#000000"/><rect x="796" y="924" width="15" height="15" fill="#ccccff"/>
<text transform="matrix(1 0 0 1.035 814 936)">1</text>
<rect x="795" y="942" width="17" height="17" fill="#000000"/><rect x="796" y="943" width="15" height="15" fill="#9900ff"/>
<text transform="matrix(1 0 0 1.035 814 955)">1</text>
<rect x="843" y="239" width="17" height="17" fill="#000000"/><rect x="844" y="240" width="15" height="15" fill="#000000"/>
<text transform="matrix(1 0 0 1.035 862 252)">1</text>
<rect x="843" y="258" width="17" height="17" fill="#000000"/><rect x="844" y="259" width="15" height="15" fill="#ffffff"/>
<text transform="matrix(1 0 0 1.035 862 271)">1</text>
<rect x="843" y="277" width="17" height="17" fill="#000000"/><rect x="844" y="278" width="15" height="15" fill="#33ccff"/>
<text transform="matrix(1 0 0 1.035 862 290)">2</text>
<rect x="843" y="296" width="17" height="17" fill="#000000"/><rect x="844" y="297" width="15" height="15" fill="#ffffff"/>
<text transform="matrix(1 0 0 1.035 862 309)">1</text>
<rect x="843" y="315" width="17" height="17" fill="#000000"/><rect x="844" y="316" width="15" height="15" fill="#000000"/>
<text transform="matrix(1 0 0 1.035 862 328)">1</text>
<rect x="843" y="334" width="17" height="17" fill="#000000"/><rect x="844" y="335" width="15" height="15" fill="#9900ff"/>
<text transform="matrix(1 0 0 1.035 862 347)">1</text>
<rect x="843" y="353" width="17" height="17" fill="#000000"/><rect x="844" y="354" width="15" height="15" fill="#000000"/>
<text transform="matrix(1 0 0 1.035 862 366)">1</text>
<rect x="843" y="372" width="17" height="17" fill="#000000"/><rect x="844" y="373" width="15" height="15" fill="#ffffff"/>
<text transform="matrix(1 0 0 1.035 862 385)">1</text>
<rect x="843" y="391" width="17" height="17" fill="#000000"/><rect x="844" y="392" width="15" height="15" fill="#33ccff"/>
<text transform="matrix(1 0 0 1.035 862 404)">2</text>
<rect x="843" y="410" width="17" height="17" fill="#000000"/><rect x="844" y="411" width="15" height="15" fill="#ffffff"/>
<text transform="matrix(1 0 0 1.035 862 423)">1</text>
<rect x="843" y="429" width="17" height="17" fill="#000000"/><rect x="844" y="430" width="15" height="15" fill="#000000"/>
<text transform="matrix(1 0 0 1.035 862 442)">1</text>
<rect x="843" y="448" width="17" height="17" fill="#000000"/><rect x="844" y="449" width="15" height="15" fill="#9900ff"/>
<text transform="matrix(1 0 0 1.035 862 461)">2</text>
<rect x="843" y="467" width="17" height="17" fill="#000000"/><rect x="844" y="468" width="15" height="15" fill="#000000"/>
<text transform="matrix(1 0 0 1.035 862 480)">1</text>
<rect x="843" y="486" width="17" height="17" fill="#000000"/><rect x="844" y="487" width="15" height="15" fill="#ffffff"/>
<text transform="matrix(1 0 0 1.035 862 499)">1</text>
<rect x="843" y="505" width="17" height="17" fill="#000000"/><rect x="844" y="506" width="15" height="15" fill="#33ccff"/>
<text transform="matrix(1 0 0 1.035 862 518)">1</text>
<rect x="843" y="524" width="17" height="17" fill="#000000"/><rect x="844" y="525" width="15" height="15" fill="#0066cc"/>
<text transform="matrix(1 0 0 1.035 862 537)">1</text>
<rect x="843" y="543" width="17" height="17" fill="#000000"/><rect x="844" y="544" width="15" height="15" fill="#33ccff"/>
<text transform="matrix(1 0 0 1.035 862 556)">1</text>
<rect x="843" y="562" width="17" height="17" fill="#000000"/><rect x="844" y="563" width="15" height="15" fill="#ffffff"/>
<text transform="matrix(1 0 0 1.035 862 575)">1</text>
<rect x="843" y="581" width="17" height="17" fill="#000000"/><rect x="844" y="582" width="15" height="15" fill="#000000"/>
<text transform="matrix(1 0 0 1.035 862 594)">2</text>
<rect x="843" y="600" width="17" height="17" fill="#000000"/><rect x="844" y="601" width="15" height="15" fill="#ffffff"/>
<text transform="matrix(1 0 0 1.035 862 613)">1</text>
<rect x="843" y="619" width="17" height="17" fill="#000000"/><rect x="844" y="620" width="15" height="15" fill="#33ccff"/>
<text transform="matrix(1 0 0 1.035 862 632)">1</text>
<rect x="843" y="638" width="17" height="17" fill="#000000"/><rect x="844" y="639" width="15" height="15" fill="#0066cc"/>
<text transform="matrix(1 0 0 1.035 862 651)">1</text>
<rect x="843" y="657" width="17" height="17" fill="#000000"/><rect x="844" y="658" width="15" height="15" fill="#33ccff"/>
<text transform="matrix(1 0 0 1.035 862 670)">1</text>
<rect x="843" y="676" width="17" height="17" fill="#000000"/><rect x="844" y="677" width="15" height="15" fill="#ffffff"/>
<text transform="matrix(1 0 0 1.035 862 689)">1</text>
<rect x="843" y="695" width="17" height="17" fill="#000000"/><rect x="844" y="696" width="15" height="15" fill="#000000"/>
<text transform="matrix(1 0 0 1.035 862 708)">1</text>
<rect x="843" y="714" width="17" height="17" fill="#000000"/><rect x="844" y="715" width="15" height="15" fill="#9900ff"/>
<text transform="matrix(1 0 0 1.035 862 727)">1</text>
<rect x="843" y="733" width="17" height="17" fill="#000000"/><rect x="844" y="734" width="15" height="15" fill="#000000"/>
<text transform="matrix(1 0 0 1.035 862 746)">1</text>
<rect x="843" y="752" width="17" height="17" fill="#000000"/><rect x="844" y="753" width="15" height="15" fill="#ffffff"/>
<text transform="matrix(1 0 0 1.035 862 765)">1</text>
<rect x="843" y="771" width="17" height="17" fill="#000000"/><rect x="844" y="772" width="15" height="15" fill="#33ccff"/>
<text transform="matrix(1 0 0 1.035 862 784)">1</text>
<rect x="843" y="790" width="17" height="17" fill="#000000"/><rect x="844" y="791" width="15" height="15" fill="#0066cc"/>
<text transform="matrix(1 0 0 1.035 862 803)">2</text>
<rect x="843" y="809" width="17" height="17" fill="#000000"/><rect x="844" y="810" width="15" height="15" fill="#33ccff"/>
<text transform="matrix(1 0 0 1.035 862 822)">1</text>
<rect x="843" y="828" width="17" height="17" fill="#000000"/><rect x="844" y="829" width="15" height="15" fill="#ffffff"/>
<text transform="matrix(1 0 0 1.035 862 841)">1</text>
<rect x="843" y="847" width="17" height="17" fill="#000000"/><rect x="844" y="848" width="15" height="15" fill="#000000"/>
<text transform="matrix(1 0 0 1.035 862 860)">1</text>
<rect x="843" y="866" width="17" height="17" fill="#000000"/><rect x="844" y="867" width="15" height="15" fill="#ffffff"/>
<text transform="matrix(1 0 0 1.035 862 879)">1</text>
<rect x="843" y="885" width="17" height="17" fill="#000000"/><rect x="844" y="886" width="15" height="15" fill="#33ccff"/>
<text transform="matrix(1 0 0 1.035 862 898)">1</text>
<rect x="843" y="904" width="17" height="17" fill="#000000"/><rect x="844" y="905" width="15" height="15" fill="#0066cc"/>
<text transform="matrix(1 0 0 1.035 862 917)">2</text>
<rect x="843" y="923" width="17" height="17" fill="#000000"/><rect x="844" y="924" width="15" height="15" fill="#33ccff"/>
<text transform="matrix(1 0 0 1.035 862 936)">1</text>
<rect x="843" y="942" width="17" height="17" fill="#000000"/><rect x="844" y="943" width="15" height="15" fill="#ffffff"/>
<text transform="matrix(1 0 0 1.035 862 955)">1</text>
<rect x="891" y="239" width="17" height="17" fill="#000000"/><rect x="892" y="240" width="15" height="15" fill="#000000"/>
<text transform="matrix(1 0 0 1.035 910 252)">2</text>
<rect x="891" y="258" width="17" height="17" fill="#000000"/><rect x="892" y="259" width="15" height="15" fill="#ffffff"/>
<text transform="matrix(1 0 0 1.035 910 271)">1</text>
<rect x="891" y="277" width="17" height="17" fill="#000000"/><rect x="892" y="278" width="15" height="15" fill="#33ccff"/>
<text transform="matrix(1 0 0 1.035 910 290)">1</text>
<rect x="891" y="296" width="17" height="17" fill="#000000"/><rect x="892" y="297" width="15" height="15" fill="#0066cc"/>
<text transform="matrix(1 0 0 1.035 910 309)">1</text>
<rect x="891" y="315" width="17" height="17" fill="#000000"/><rect x="892" y="316" width="15" height="15" fill="#000000"/>
<text transform="matrix(1 0 0 1.035 910 328)">1</text>
<rect x="891" y="334" width="17" height="17" fill="#000000"/><rect x="892" y="335" width="15" height="15" fill="#0066cc"/>
<text transform="matrix(1 0 0 1.035 910 347)">1</text>
<rect x="891" y="353" width="17" height="17" fill="#000000"/><rect x="892" y="354" width="15" height="15" fill="#33ccff"/>
<text transform="matrix(1 0 0 1.035 910 366)">1</text>
<rect x="891" y="372" width="17" height="17" fill="#000000"/><rect x="892" y="373" width="15" height="15" fill="#ffffff"/>
<text transform="matrix(1 0 0 1.035 910 385)">2</text>
<rect x="891" y="391" width="17" height="17" fill="#000000"/><rect x="892" y="392" width="15" height="15" fill="#33ccff"/>
<text transform="matrix(1 0 0 1.035 910 404)">1</text>
<rect x="891" y="410" width="17" height="17" fill="#000000"/><rect x="892" y="411" width="15" height="15" fill="#0066cc"/>
<text transform="matrix(1 0 0 1.035 910 423)">1</text>
<rect x="891" y="429" width="17" height="17" fill="#000000"/><rect x="892" y="430" width="15" height="15" fill="#000000"/>
<text transform="matrix(1 0 0 1.035 910 442)">1</text>
<rect x="891" y="448" width="17" height="17" fill="#000000"/><rect x="892" y="449" width="15" height="15" fill="#0066cc"/>
<text transform="matrix(1 0 0 1.035 910 461)">1</text>
<rect x="891" y="467" width="17" height="17" fill="#000000"/><rect x="892" y="468" width="15" height="15" fill="#33ccff"/>
<text transform="matrix(1 0 0 1.035 910 480)">1</text>
<rect x="891" y="486" width="17" height="17" fill="#000000"/><rect x="892" y="487" width="15" height="15" fill="#ffffff"/>
<text transform="matrix(1 0 0 1.035 910 499)">1</text>
<rect x="891" y="505" width="17" height="17" fill="#000000"/><rect x="892" y="506" width="15" height="15" fill="#000000"/>
<text transform="matrix(1 0 0 1.035 910 518)">1</text>
<rect x="891" y="524" width="17" height="17" fill="#000000"/><rect x="892" y="525" width="15" height="15" fill="#ffffff"/>
<text transform="matrix(1 0 0 1.035 910 537)">1</text>
<rect x="891" y="543" width="17" height="17" fill="#000000"/><rect x="892" y="544" width="15" height="15" fill="#33ccff"/>
<text transform="matrix(1 0 0 1.035 910 556)">1</text>
<rect x="891" y="562" width="17" height="17" fill="#000000"/><rect x="892" y="563" width="15" height="15" fill="#0066cc"/>
<text transform="matrix(1 0 0 1.035 910 575)">1</text>
<rect x="891" y="581" width="17" height="17" fill="#000000"/><rect x="892" y="582" width="15" height="15" fill="#000000"/>
<text transform="matrix(1 0 0 1.035 910 594)">2</text>
<rect x="891" y="600" width="17" height="17" fill="#000000"/><rect x="892" y="601" width="15" height="15" fill="#0066cc"/>
<text transform="matrix(1 0 0 1.035 910 613)">1</text>
<rect x="891" y="619" width="17" height="17" fill="#000000"/><rect x="892" y="620" width="15" height="15" fill="#33ccff"/>
<text transform="matrix(1 0 0 1.035 910 632)">1</text>
<rect x="891" y="638" width="17" height="17" fill="#000000"/><rect x="892" y="639" width="15" height="15" fill="#ffffff"/>
<text transform="matrix(1 0 0 1.035 910 651)">1</text>
<rect x="891" y="657" width="17" height="17" fill="#000000"/><rect x="892" y="658" width="15" height="15" fill="#33ccff"/>
<text transform="matrix(1 0 0 1.035 910 670)">1</text>
<rect x="891" y="676" width="17" height="17" fill="#000000"/><rect x="892" y="677" width="15" height="15" fill="#0066cc"/>
<text transform="matrix(1 0 0 1.035 910 689)">1</text>
<rect x="891" y="695" width="17" height="17" fill="#000000"/><rect x="892" y="696" width="15" height="15" fill="#000000"/>
<text transform="matrix(1 0 0 1.035 910 708)">2</text>
<rect x="891" y="714" width="17" height="17" fill="#000000"/><rect x="892" y="715" width="15" height="15" fill="#0066cc"/>
<text transform="matrix(1 0 0 1.035 910 727)">1</text>
<rect x="891" y="733" width="17" height="17" fill="#000000"/><rect x="892" y="734" width="15" height="15" fill="#33ccff"/>
<text transform="matrix(1 0 0 1.035 910 746)">1</text>
<rect x="891" y="752" width="17" height="17" fill="#000000"/><rect x="892" y="753" width="15" height="15" fill="#ffffff"/>
<text transform="matrix(1 0 0 1.035 910 765)">2</text>
<rect x="891" y="771" width="17" height="17" fill="#000000"/><rect x="892" y="772" width="15" height="15" fill="#33ccff"/>
<text transform="matrix(1 0 0 1.035 910 784)">1</text>
<rect x="891" y="790" width="17" height="17" fill="#000000"/><rect x="892" y="791" width="15" height="15" fill="#0066cc"/>
<text transform="matrix(1 0 0 1.035 910 803)">1</text>
<rect x="891" y="809" width="17" height="17" fill="#000000"/><rect x="892" y="810" width="15" height="15" fill="#000000"/>
<text transform="matrix(1 0 0 1.035 910 822)">1</text>
<rect x="891" y="828" width="17" height="17" fill="#000000"/><rect x="892" y="829" width="15" height="15" fill="#006633"/>
<text transform="matrix(1 0 0 1.035 910 841)">1</text>
<rect x="891" y="847" width="17" height="17" fill="#000000"/><rect x="892" y="848" width="15" height="15" fill="#000000"/>
<text transform="matrix(1 0 0 1.035 910 860)">1</text>
<rect x="891" y="866" width="17" height="17" fill="#000000"/><rect x="892" y="867" width="15" height="15" fill="#0066cc"/>
<text transform="matrix(1 0 0 1.035 910 879)">1</text>
<rect x="891" y="885" width="17" height="17" fill="#000000"/><rect x="892" y="886" width="15" height="15" fill="#33ccff"/>
<text transform="matrix(1 0 0 1.035 910 898)">2</text>
<rect x="891" y="904" width="17" height="17" fill="#000000"/><rect x="892" y="905" width="15" height="15" fill="#0066cc"/>
<text transform="matrix(1 0 0 1.035 910 917)">1</text>
<rect x="891" y="923" width="17" height="17" fill="#000000"/><rect x="892" y="924" width="15" height="15" fill="#000000"/>
<text transform="matrix(1 0 0 1.035 910 936)">1</text>
<rect x="891" y="942" width="17" height="17" fill="#000000"/><rect x="892" y="943" width="15" height="15" fill="#006633"/>
<text transform="matrix(1 0 0 1.035 910 955)">1</text>
<rect x="939" y="239" width="17" height="17" fill="#000000"/><rect x="940" y="240" width="15" height="15" fill="#000000"/>
<text transform="matrix(1 0 0 1.035 958 252)">1</text>
<rect x="939" y="258" width="17" height="17" fill="#000000"/><rect x="940" y="259" width="15" height="15" fill="#0066cc"/>
<text transform="matrix(1 0 0 1.035 958 271)">1</text>
<rect x="939" y="277" width="17" height="17" fill="#000000"/><rect x="940" y="278" width="15" height="15" fill="#33ccff"/>
<text transform="matrix(1 0 0 1.035 958 290)">1</text>
<rect x="939" y="296" width="17" height="17" fill="#000000"/><rect x="940" y="297" width="15" height="15" fill="#ffffff"/>
<text transform="matrix(1 0 0 1.035 958 309)">1</text>
<rect x="939" y="315" width="17" height="17" fill="#000000"/><rect x="940" y="316" width="15" height="15" fill="#33ccff"/>
<text transform="matrix(1 0 0 1.035 958 328)">1</text>
<rect x="939" y="334" width="17" height="17" fill="#000000"/><rect x="940" y="335" width="15" height="15" fill="#0066cc"/>
<text transform="matrix(1 0 0 1.035 958 347)">1</text>
<rect x="939" y="353" width="17" height="17" fill="#000000"/><rect x="940" y="354" width="15" height="15" fill="#000000"/>
<text transform="matrix(1 0 0 1.035 958 366)">1</text>
<rect x="939" y="372" width="17" height="17" fill="#000000"/><rect x="940" y="373" width="15" height="15" fill="#006633"/>
<text transform="matrix(1 0 0 1.035 958 385)">2</text>
<rect x="939" y="391" width="17" height="17" fill="#000000"/><rect x="940" y="392" width="15" height="15" fill="#000000"/>
<text transform="matrix(1 0 0 1.035 958 404)">1</text>
<rect x="939" y="410" width="17" height="17" fill="#000000"/><rect x="940" y="411" width="15" height="15" fill="#0066cc"/>
<text transform="matrix(1 0 0 1.035 958 423)">1</text>
<rect x="939" y="429" width="17" height="17" fill="#000000"/><rect x="940" y="430" width="15" height="15" fill="#33ccff"/>
<text transform="matrix(1 0 0 1.035 958 442)">1</text>
<rect x="939" y="448" width="17" height="17" fill="#000000"/><rect x="940" y="449" width="15" height="15" fill="#0066cc"/>
<text transform="matrix(1 0 0 1.035 958 461)">1</text>
<rect x="939" y="467" width="17" height="17" fill="#000000"/><rect x="940" y="468" width="15" height="15" fill="#000000"/>
<text transform="matrix(1 0 0 1.035 958 480)">1</text>
<rect x="939" y="486" width="17" height="17" fill="#000000"/><rect x="940" y="487" width="15" height="15" fill="#006633"/>
<text transform="matrix(1 0 0 1.035 958 499)">2</text>
<rect x="939" y="505" width="17" height="17" fill="#000000"/><rect x="940" y="506" width="15" height="15" fill="#000000"/>
<text transform="matrix(1 0 0 1.035 958 518)">1</text>
<rect x="939" y="524" width="17" height="17" fill="#000000"/><rect x="940" y="525" width="15" height="15" fill="#0066cc"/>
<text transform="matrix(1 0 0 1.035 958 537)">1</text>
<rect x="939" y="543" width="17" height="17" fill="#000000"/><rect x="940" y="544" width="15" height="15" fill="#33ccff"/>
<text transform="matrix(1 0 0 1.035 958 556)">2</text>
<rect x="939" y="562" width="17" height="17" fill="#000000"/><rect x="940" y="563" width="15" height="15" fill="#0066cc"/>
<text transform="matrix(1 0 0 1.035 958 575)">1</text>
<rect x="939" y="581" width="17" height="17" fill="#000000"/><rect x="940" y="582" width="15" height="15" fill="#000000"/>
<text transform="matrix(1 0 0 1.035 958 594)">1</text>
<rect x="939" y="600" width="17" height="17" fill="#000000"/><rect x="940" y="601" width="15" height="15" fill="#006633"/>
<text transform="matrix(1 0 0 1.035 958 613)">1</text>
<rect x="939" y="619" width="17" height="17" fill="#000000"/><rect x="940" y="620" width="15" height="15" fill="#00cc66"/>
<text transform="matrix(1 0 0 1.035 958 632)">1</text>
<rect x="939" y="638" width="17" height="17" fill="#000000"/><rect x="940" y="639" width="15" height="15" fill="#006633"/>
<text transform="matrix(1 0 0 1.035 958 651)">1</text>
<rect x="939" y="657" width="17" height="17" fill="#000000"/><rect x="940" y="658" width="15" height="15" fill="#000000"/>
<text transform="matrix(1 0 0 1.035 958 670)">1</text>
<rect x="939" y="676" width="17" height="17" fill="#000000"/><rect x="940" y="677" width="15" height="15" fill="#0066cc"/>
<text transform="matrix(1 0 0 1.035 958 689)">2</text>
<rect x="939" y="695" width="17" height="17" fill="#000000"/><rect x="940" y="696" width="15" height="15" fill="#000000"/>
<text transform="matrix(1 0 0 1.035 958 708)">1</text>
<rect x="939" y="714" width="17" height="17" fill="#000000"/><rect x="940" y="715" width="15" height="15" fill="#006633"/>
<text transform="matrix(1 0 0 1.035 958 727)">1</text>
<rect x="939" y="733" width="17" height="17" fill="#000000"/><rect x="940" y="734" width="15" height="15" fill="#00cc66"/>
<text transform="matrix(1 0 0 1.035 958 746)">1</text>
<rect x="939" y="752" width="17" height="17" fill="#000000"/><rect x="940" y="753" width="15" height="15" fill="#006633"/>
<text transform="matrix(1 0 0 1.035 958 765)">1</text>
<rect x="939" y="771" width="17" height="17" fill="#000000"/><rect x="940" y="772" width="15" height="15" fill="#000000"/>
<text transform="matrix(1 0 0 1.035 958 784)">1</text>
<rect x="939" y="790" width="17" height="17" fill="#000000"/><rect x="940" y="791" width="15" height="15" fill="#0066cc"/>
<text transform="matrix(1 0 0 1.035 958 803)">1</text>
<rect x="939" y="809" width="17" height="17" fill="#000000"/><rect x="940" y="810" width="15" height="15" fill="#33ccff"/>
<text transform="matrix(1 0 0 1.035 958 822)">1</text>
<rect x="939" y="828" width="17" height="17" fill="#000000"/><rect x="940" y="829" width="15" height="15" fill="#0066cc"/>
<text transform="matrix(1 0 0 1.035 958 841)">1</text>
<rect x="939" y="847" width="17" height="17" fill="#000000"/><rect x="940" y="848" width="15" height="15" fill="#000000"/>
<text transform="matrix(1 0 0 1.035 958 860)">1</text>
<rect x="939" y="866" width="17" height="17" fill="#000000"/><rect x="940" y="867" width="15" height="15" fill="#006633"/>
<text transform="matrix(1 0 0 1.035 958 879)">1</text>
<rect x="939" y="885" width="17" height="17" fill="#000000"/><rect x="940" y="886" width="15" height="15" fill="#00cc66"/>
<text transform="matrix(1 0 0 1.035 958 898)">2</text>
<rect x="939" y="904" width="17" height="17" fill="#000000"/><rect x="940" y="905" width="15" height="15" fill="#006633"/>
<text transform="matrix(1 0 0 1.035 958 917)">1</text>
<rect x="939" y="923" width="17" height="17" fill="#000000"/><rect x="940" y="924" width="15" height="15" fill="#000000"/>
<text transform="matrix(1 0 0 1.035 958 936)">1</text>
<rect x="939" y="942" width="17" height="17" fill="#000000"/><rect x="940" y="943" width="15" height="15" fill="#0066cc"/>
<text transform="matrix(1 0 0 1.035 958 955)">1</text>
<rect x="987" y="239" width="17" height="17" fill="#000000"/><rect x="988" y="240" width="15" height="15" fill="#000000"/>
<text transform="matrix(1 0 0 1.035 1006 252)">1</text>
<rect x="987" y="258" width="17" height="17" fill="#000000"/><rect x="988" y="259" width="15" height="15" fill="#006633"/>
<text transform="matrix(1 0 0 1.035 1006 271)">1</text>
<rect x="987" y="277" width="17" height="17" fill="#000000"/><rect x="988" y="278" width="15" height="15" fill="#00cc66"/>
<text transform="matrix(1 0 0 1.035 1006 290)">2</text>
<rect x="987" y="296" width="17" height="17" fill="#000000"/><rect x="988" y="297" width="15" height="15" fill="#006633"/>
<text transform="matrix(1 0 0 1.035 1006 309)">1</text>
<rect x="987" y="315" width="17" height="17" fill="#000000"/><rect x="988" y="316" width="15" height="15" fill="#000000"/>
<text transform="matrix(1 0 0 1.035 1006 328)">1</text>
<rect x="987" y="334" width="17" height="17" fill="#000000"/><rect x="988" y="335" width="15" height="15" fill="#0066cc"/>
<text transform="matrix(1 0 0 1.035 1006 347)">2</text>
<rect x="987" y="353" width="17" height="17" fill="#000000"/><rect x="988" y="354" width="15" height="15" fill="#000000"/>
<text transform="matrix(1 0 0 1.035 1006 366)">1</text>
<rect x="987" y="372" width="17" height="17" fill="#000000"/><rect x="988" y="373" width="15" height="15" fill="#006633"/>
<text transform="matrix(1 0 0 1.035 1006 385)">1</text>
<rect x="987" y="391" width="17" height="17" fill="#000000"/><rect x="988" y="392" width="15" height="15" fill="#00cc66"/>
<text transform="matrix(1 0 0 1.035 1006 404)">1</text>
<rect x="987" y="410" width="17" height="17" fill="#000000"/><rect x="988" y="411" width="15" height="15" fill="#ccffcc"/>
<text transform="matrix(1 0 0 1.035 1006 423)">1</text>
<rect x="987" y="429" width="17" height="17" fill="#000000"/><rect x="988" y="430" width="15" height="15" fill="#00cc66"/>
<text transform="matrix(1 0 0 1.035 1006 442)">1</text>
<rect x="987" y="448" width="17" height="17" fill="#000000"/><rect x="988" y="449" width="15" height="15" fill="#006633"/>
<text transform="matrix(1 0 0 1.035 1006 461)">1</text>
<rect x="987" y="467" width="17" height="17" fill="#000000"/><rect x="988" y="468" width="15" height="15" fill="#000000"/>
<text transform="matrix(1 0 0 1.035 1006 480)">2</text>
<rect x="987" y="486" width="17" height="17" fill="#000000"/><rect x="988" y="487" width="15" height="15" fill="#006633"/>
<text transform="matrix(1 0 0 1.035 1006 499)">1</text>
<rect x="987" y="505" width="17" height="17" fill="#000000"/><rect x="988" y="506" width="15" height="15" fill="#00cc66"/>
<text transform="matrix(1 0 0 1.035 1006 518)">1</text>
<rect x="987" y="524" width="17" height="17" fill="#000000"/><rect x="988" y="525" width="15" height="15" fill="#ccffcc"/>
<text transform="matrix(1 0 0 1.035 1006 537)">1</text>
<rect x="987" y="543" width="17" height="17" fill="#000000"/><rect x="988" y="544" width="15" height="15" fill="#00cc66"/>
<text transform="matrix(1 0 0 1.035 1006 556)">1</text>
<rect x="987" y="562" width="17" height="17" fill="#000000"/><rect x="988" y="563" width="15" height="15" fill="#006633"/>
<text transform="matrix(1 0 0 1.035 1006 575)">1</text>
<rect x="987" y="581" width="17" height="17" fill="#000000"/><rect x="988" y="582" width="15" height="15" fill="#000000"/>
<text transform="matrix(1 0 0 1.035 1006 594)">1</text>
<rect x="987" y="600" width="17" height="17" fill="#000000"/><rect x="988" y="601" width="15" height="15" fill="#0066cc"/>
<text transform="matrix(1 0 0 1.035 1006 613)">1</text>
<rect x="987" y="619" width="17" height="17" fill="#000000"/><rect x="988" y="620" width="15" height="15" fill="#000000"/>
<text transform="matrix(1 0 0 1.035 1006 632)">1</text>
<rect x="987" y="638" width="17" height="17" fill="#000000"/><rect x="988" y="639" width="15" height="15" fill="#006633"/>
<text transform="matrix(1 0 0 1.035 1006 651)">1</text>
<rect x="987" y="657" width="17" height="17" fill="#000000"/><rect x="988" y="658" width="15" height="15" fill="#00cc66"/>
<text transform="matrix(1 0 0 1.035 1006 670)">1</text>
<rect x="987" y="676" width="17" height="17" fill="#000000"/><rect x="988" y="677" width="15" height="15" fill="#ccffcc"/>
<text transform="matrix(1 0 0 1.035 1006 689)">2</text>
<rect x="987" y="695" width="17" height="17" fill="#000000"/><rect x="988" y="696" width="15" height="15" fill="#00cc66"/>
<text transform="matrix(1 0 0 1.035 1006 708)">1</text>
<rect x="987" y="714" width="17" height="17" fill="#000000"/><rect x="988" y="715" width="15" height="15" fill="#006633"/>
<text transform="matrix(1 0 0 1.035 1006 727)">1</text>
<rect x="987" y="733" width="17" height="17" fill="#000000"/><rect x="988" y="734" width="15" height="15" fill="#000000"/>
<text transform="matrix(1 0 0 1.035 1006 746)">1</text>
<rect x="987" y="752" width="17" height="17" fill="#000000"/><rect x="988" y="753" width="15" height="15" fill="#006633"/>
<text transform="matrix(1 0 0 1.035 1006 765)">1</text>
<rect x="987" y="771" width="17" height="17" fill="#000000"/><rect x="988" y="772" width="15" height="15" fill="#00cc66"/>
<text transform="matrix(1 0 0 1.035 1006 784)">1</text>
<rect x="987" y="790" width="17" height="17" fill="#000000"/><rect x="988" y="791" width="15" height="15" fill="#ccffcc"/>
<text transform="matrix(1 0 0 1.035 1006 803)">2</text>
<rect x="987" y="809" width="17" height="17" fill="#000000"/><rect x="988" y="810" width="15" height="15" fill="#00cc66"/>
<text transform="matrix(1 0 0 1.035 1006 822)">1</text>
<rect x="987" y="828" width="17" height="17" fill="#000000"/><rect x="988" y="829" width="15" height="15" fill="#006633"/>
<text transform="matrix(1 0 0 1.035 1006 841)">1</text>
<rect x="987" y="847" width="17" height="17" fill="#000000"/><rect x="988" y="848" width="15" height="15" fill="#000000"/>
<text transform="matrix(1 0 0 1.035 1006 860)">2</text>
<rect x="987" y="866" width="17" height="17" fill="#000000"/><rect x="988" y="867" width="15" height="15" fill="#006633"/>
<text transform="matrix(1 0 0 1.035 1006 879)">1</text>
<rect x="987" y="885" width="17" height="17" fill="#000000"/><rect x="988" y="886" width="15" height="15" fill="#00cc66"/>
<text transform="matrix(1 0 0 1.035 1006 898)">1</text>
<rect x="987" y="904" width="17" height="17" fill="#000000"/><rect x="988" y="905" width="15" height="15" fill="#ccffcc"/>
<text transform="matrix(1 0 0 1.035 1006 917)">1</text>
<rect x="987" y="923" width="17" height="17" fill="#000000"/><rect x="988" y="924" width="15" height="15" fill="#ffffff"/>
<text transform="matrix(1 0 0 1.035 1006 936)">1</text>
<rect x="987" y="942" width="17" height="17" fill="#000000"/><rect x="988" y="943" width="15" height="15" fill="#ccffcc"/>
<text transform="matrix(1 0 0 1.035 1006 955)">1</text>
<rect x="1035" y="239" width="17" height="17" fill="#000000"/><rect x="1036" y="240" width="15" height="15" fill="#00cc66"/>
<text transform="matrix(1 0 0 1.035 1054 252)">1</text>
<rect x="1035" y="258" width="17" height="17" fill="#000000"/><rect x="1036" y="259" width="15" height="15" fill="#006633"/>
<text transform="matrix(1 0 0 1.035 1054 271)">2</text>
<rect x="1035" y="277" width="17" height="17" fill="#000000"/><rect x="1036" y="278" width="15" height="15" fill="#00cc66"/>
<text transform="matrix(1 0 0 1.035 1054 290)">1</text>
<rect x="1035" y="296" width="17" height="17" fill="#000000"/><rect x="1036" y="297" width="15" height="15" fill="#ccffcc"/>
<text transform="matrix(1 0 0 1.035 1054 309)">1</text>
<rect x="1035" y="315" width="17" height="17" fill="#000000"/><rect x="1036" y="316" width="15" height="15" fill="#ffffff"/>
<text transform="matrix(1 0 0 1.035 1054 328)">1</text>
<rect x="1035" y="334" width="17" height="17" fill="#000000"/><rect x="1036" y="335" width="15" height="15" fill="#ccffcc"/>
<text transform="matrix(1 0 0 1.035 1054 347)">1</text>
<rect x="1035" y="353" width="17" height="17" fill="#000000"/><rect x="1036" y="354" width="15" height="15" fill="#00cc66"/>
<text transform="matrix(1 0 0 1.035 1054 366)">1</text>
<rect x="1035" y="372" width="17" height="17" fill="#000000"/><rect x="1036" y="373" width="15" height="15" fill="#006633"/>
<text transform="matrix(1 0 0 1.035 1054 385)">1</text>
<rect x="1035" y="391" width="17" height="17" fill="#000000"/><rect x="1036" y="392" width="15" height="15" fill="#000000"/>
<text transform="matrix(1 0 0 1.035 1054 404)">1</text>
<rect x="1035" y="410" width="17" height="17" fill="#000000"/><rect x="1036" y="411" width="15" height="15" fill="#006633"/>
<text transform="matrix(1 0 0 1.035 1054 423)">1</text>
<rect x="1035" y="429" width="17" height="17" fill="#000000"/><rect x="1036" y="430" width="15" height="15" fill="#00cc66"/>
<text transform="matrix(1 0 0 1.035 1054 442)">1</text>
<rect x="1035" y="448" width="17" height="17" fill="#000000"/><rect x="1036" y="449" width="15" height="15" fill="#ccffcc"/>
<text transform="matrix(1 0 0 1.035 1054 461)">1</text>
<rect x="1035" y="467" width="17" height="17" fill="#000000"/><rect x="1036" y="468" width="15" height="15" fill="#ffffff"/>
<text transform="matrix(1 0 0 1.035 1054 480)">2</text>
<rect x="1035" y="486" width="17" height="17" fill="#000000"/><rect x="1036" y="487" width="15" height="15" fill="#ccffcc"/>
<text transform="matrix(1 0 0 1.035 1054 499)">1</text>
<rect x="1035" y="505" width="17" height="17" fill="#000000"/><rect x="1036" y="506" width="15" height="15" fill="#00cc66"/>
<text transform="matrix(1 0 0 1.035 1054 518)">1</text>
<rect x="1035" y="524" width="17" height="17" fill="#000000"/><rect x="1036" y="525" width="15" height="15" fill="#006633"/>
<text transform="matrix(1 0 0 1.035 1054 537)">1</text>
<rect x="1035" y="543" width="17" height="17" fill="#000000"/><rect x="1036" y="544" width="15" height="15" fill="#00cc66"/>
<text transform="matrix(1 0 0 1.035 1054 556)">1</text>
<rect x="1035" y="562" width="17" height="17" fill="#000000"/><rect x="1036" y="563" width="15" height="15" fill="#ccffcc"/>
<text transform="matrix(1 0 0 1.035 1054 575)">1</text>
<rect x="1035" y="581" width="17" height="17" fill="#000000"/><rect x="1036" y="582" width="15" height="15" fill="#ffffff"/>
<text transform="matrix(1 0 0 1.035 1054 594)">2</text>
<rect x="1035" y="600" width="17" height="17" fill="#000000"/><rect x="1036" y="601" width="15" height="15" fill="#ccffcc"/>
<text transform="matrix(1 0 0 1.035 1054 613)">1</text>
<rect x="1035" y="619" width="17" height="17" fill="#000000"/><rect x="1036" y="620" width="15" height="15" fill="#00cc66"/>
<text transform="matrix(1 0 0 1.035 1054 632)">1</text>
<rect x="1035" y="638" width="17" height="17" fill="#000000"/><rect x="1036" y="639" width="15" height="15" fill="#006633"/>
<text transform="matrix(1 0 0 1.035 1054 651)">2</text>
<rect x="1035" y="657" width="17" height="17" fill="#000000"/><rect x="1036" y="658" width="15" height="15" fill="#00cc66"/>
<text transform="matrix(1 0 0 1.035 1054 670)">1</text>
<rect x="1035" y="676" width="17" height="17" fill="#000000"/><rect x="1036" y="677" width="15" height="15" fill="#ccffcc"/>
<text transform="matrix(1 0 0 1.035 1054 689)">1</text>
<rect x="1035" y="695" width="17" height="17" fill="#000000"/><rect x="1036" y="696" width="15" height="15" fill="#ffffff"/>
<text transform="matrix(1 0 0 1.035 1054 708)">1</text>
<rect x="1035" y="714" width="17" height="17" fill="#000000"/><rect x="1036" y="715" width="15" height="15" fill="#000000"/>
<text transform="matrix(1 0 0 1.035 1054 727)">1</text>
<rect x="1035" y="733" width="17" height="17" fill="#000000"/><rect x="1036" y="734" width="15" height="15" fill="#ffffff"/>
<text transform="matrix(1 0 0 1.035 1054 746)">1</text>
<rect x="1035" y="752" width="17" height="17" fill="#000000"/><rect x="1036" y="753" width="15" height="15" fill="#ccffcc"/>
<text transform="matrix(1 0 0 1.035 1054 765)">1</text>
<rect x="1035" y="771" width="17" height="17" fill="#000000"/><rect x="1036" y="772" width="15" height="15" fill="#00cc66"/>
<text transform="matrix(1 0 0 1.035 1054 784)">2</text>
<rect x="1035" y="790" width="17" height="17" fill="#000000"/><rect x="1036" y="791" width="15" height="15" fill="#ccffcc"/>
<text transform="matrix(1 0 0 1.035 1054 803)">1</text>
<rect x="1035" y="809" width="17" height="17" fill="#000000"/><rect x="1036" y="810" width="15" height="15" fill="#ffffff"/>
<text transform="matrix(1 0 0 1.035 1054 822)">1</text>
<rect x="1035" y="828" width="17" height="17" fill="#000000"/><rect x="1036" y="829" width="15" height="15" fill="#000000"/>
<text transform="matrix(1 0 0 1.035 1054 841)">1</text>
<rect x="1035" y="847" width="17" height="17" fill="#000000"/><rect x="1036" y="848" width="15" height="15" fill="#ffffff"/>
<text transform="matrix(1 0 0 1.035 1054 860)">1</text>
<rect x="1035" y="866" width="17" height="17" fill="#000000"/><rect x="1036" y="867" width="15" height="15" fill="#ccffcc"/>
<text transform="matrix(1 0 0 1.035 1054 879)">1</text>
<rect x="1035" y="885" width="17" height="17" fill="#000000"/><rect x="1036" y="886" width="15" height="15" fill="#00cc66"/>
<text transform="matrix(1 0 0 1.035 1054 898)">1</text>
<rect x="1035" y="904" width="17" height="17" fill="#000000"/><rect x="1036" y="905" width="15" height="15" fill="#006633"/>
<text transform="matrix(1 0 0 1.035 1054 917)">1</text>
<rect x="1035" y="923" width="17" height="17" fill="#000000"/><rect x="1036" y="924" width="15" height="15" fill="#00cc66"/>
<text transform="matrix(1 0 0 1.035 1054 936)">1</text>
<rect x="1035" y="942" width="17" height="17" fill="#000000"/><rect x="1036" y="943" width="15" height="15" fill="#ccffcc"/>
<text transform="matrix(1 0 0 1.035 1054 955)">1</text>
<rect x="1083" y="239" width="17" height="17" fill="#000000"/><rect x="1084" y="240" width="15" height="15" fill="#ffffff"/>
<text transform="matrix(1 0 0 1.035 1102 252)">1</text>
<rect x="1083" y="258" width="17" height="17" fill="#000000"/><rect x="1084" y="259" width="15" height="15" fill="#000000"/>
<text transform="matrix(1 0 0 1.035 1102 271)">2</text>
<rect x="1083" y="277" width="17" height="17" fill="#000000"/><rect x="1084" y="278" width="15" height="15" fill="#ffffff"/>
<text transform="matrix(1 0 0 1.035 1102 290)">1</text>
<rect x="1083" y="296" width="17" height="17" fill="#000000"/><rect x="1084" y="297" width="15" height="15" fill="#ccffcc"/>
<text transform="matrix(1 0 0 1.035 1102 309)">1</text>
<rect x="1083" y="315" width="17" height="17" fill="#000000"/><rect x="1084" y="316" width="15" height="15" fill="#00cc66"/>
<text transform="matrix(1 0 0 1.035 1102 328)">1</text>
<rect x="1083" y="334" width="17" height="17" fill="#000000"/><rect x="1084" y="335" width="15" height="15" fill="#ccffcc"/>
<text transform="matrix(1 0 0 1.035 1102 347)">1</text>
<rect x="1083" y="353" width="17" height="17" fill="#000000"/><rect x="1084" y="354" width="15" height="15" fill="#ffffff"/>
<text transform="matrix(1 0 0 1.035 1102 366)">1</text>
<rect x="1083" y="372" width="17" height="17" fill="#000000"/><rect x="1084" y="373" width="15" height="15" fill="#000000"/>
<text transform="matrix(1 0 0 1.035 1102 385)">2</text>
<rect x="1083" y="391" width="17" height="17" fill="#000000"/><rect x="1084" y="392" width="15" height="15" fill="#ffffff"/>
<text transform="matrix(1 0 0 1.035 1102 404)">1</text>
</g>
<path d="M18.93 875.37H21.74V878.70H18.93zM23.80 875.37H26.43V878.70H23.80zM824.63 84.27H827.45V87.60H824.63zM829.51 84.27H832.13V87.60H829.51zM780.80 100.27H783.62V103.60H780.80zM785.68 100.27H788.30V103.60H785.68zM849.51 132.27H852.33V135.60H849.51zM854.39 132.27H857.01V135.60H854.39zM780.80 164.27H783.62V167.60H780.80zM785.68 164.27H788.30V167.60H785.68zM670.84 188.07H673.66V191.40H670.84zM675.72 188.07H678.34V191.40H675.72zM1035.76 188.07H1038.58V191.40H1035.76zM1040.64 188.07H1043.26V191.40H1040.64zM669.70 249.87H672.52V253.20H669.70zM674.58 249.87H677.20V253.20H674.58zM669.70 287.87H672.52V291.20H669.70zM674.58 287.87H677.20V291.20H674.58zM669.70 306.87H672.52V310.20H669.70zM674.58 306.87H677.20V310.20H674.58zM669.70 325.87H672.52V329.20H669.70zM674.58 325.87H677.20V329.20H674.58zM669.70 344.87H672.52V348.20H669.70zM674.58 344.87H677.20V348.20H674.58zM669.70 363.87H672.52V367.20H669.70zM674.58 363.87H677.20V367.20H674.58zM669.70 382.87H672.52V386.20H669.70zM674.58 382.87H677.20V386.20H674.58zM669.70 420.87H672.52V424.20H669.70zM674.58 420.87H677.20V424.20H674.58zM669.70 439.87H672.52V443.20H669.70zM674.58 439.87H677.20V443.20H674.58zM669.70 458.87H672.52V462.20H669.70zM674.58 458.87H677.20V462.20H674.58zM669.70 477.87H672.52V481.20H669.70zM674.58 477.87H677.20V481.20H674.58zM669.70 496.87H672.52V500.20H669.70zM674.58 496.87H677.20V500.20H674.58zM669.70 515.87H672.52V519.20H669.70zM674.58 515.87H677.20V519.20H674.58zM669.70 534.87H672.52V538.20H669.70zM674.58 534.87H677.20V538.20H674.58zM669.70 553.87H672.52V557.20H669.70zM674.58 553.87H677.20V557.20H674.58zM669.70 572.87H672.52V576.20H669.70zM674.58 572.87H677.20V576.20H674.58zM669.70 591.87H672.52V595.20H669.70zM674.58 591.87H677.20V595.20H674.58zM669.70 629.87H672.52V633.20H669.70zM674.58 629.87H677.20V633.20H674.58zM669.70 648.87H672.52V652.20H669.70zM674.58 648.87H677.20V652.20H674.58zM669.70 667.87H672.52V671.20H669.70zM674.58 667.87H677.20V671.20H674.58zM669.70 686.87H672.52V690.20H669.70zM674.58 686.87H677.20V690.20H674.58zM669.70 705.87H672.52V709.20H669.70zM674.58 705.87H677.20V709.20H674.58zM669.70 743.87H672.52V747.20H669.70zM674.58 743.87H677.20V747.20H674.58zM669.70 762.87H672.52V766.20H669.70zM674.58 762.87H677.20V766.20H674.58zM669.70 800.87H672.52V804.20H669.70zM674.58 800.87H677.20V804.20H674.58zM669.70 819.87H672.52V823.20H669.70zM674.58 819.87H677.20V823.20H674.58zM669.70 838.87H672.52V842.20H669.70zM674.58 838.87H677.20V842.20H674.58zM669.70 857.87H672.52V861.20H669.70zM674.58 857.87H677.20V861.20H674.58zM669.70 876.87H672.52V880.20H669.70zM674.58 876.87H677.20V880.20H674.58zM669.70 895.87H672.52V899.20H669.70zM674.58 895.87H677.20V899.20H674.58zM669.70 933.87H672.52V937.20H669.70zM674.58 933.87H677.20V937.20H674.58zM669.70 952.87H672.52V956.20H669.70zM674.58 952.87H677.20V956.20H674.58zM717.70 249.87H720.52V253.20H717.70zM722.58 249.87H725.20V253.20H722.58zM717.70 268.87H720.52V272.20H717.70zM722.58 268.87H725.20V272.20H722.58zM717.70 287.87H720.52V291.20H717.70zM722.58 287.87H725.20V291.20H722.58zM717.70 306.87H720.52V310.20H717.70zM722.58 306.87H725.20V310.20H722.58zM717.70 325.87H720.52V329.20H717.70zM722.58 325.87H725.20V329.20H722.58zM717.70 344.87H720.52V348.20H717.70zM722.58 344.87H725.20V348.20H722.58zM717.70 363.87H720.52V367.20H717.70zM722.58 363.87H725.20V367.20H722.58zM717.70 382.87H720.52V386.20H717.70zM722.58 382.87H725.20V386.20H722.58zM717.70 420.87H720.52V424.20H717.70zM722.58 420.87H725.20V424.20H722.58zM717.70 439.87H720.52V443.20H717.70zM722.58 439.87H725.20V443.20H722.58zM717.70 458.87H720.52V462.20H717.70zM722.58 458.87H725.20V462.20H722.58zM717.70 477.87H720.52V481.20H717.70zM722.58 477.87H725.20V481.20H722.58zM717.70 496.87H720.52V500.20H717.70zM722.58 496.87H725.20V500.20H722.58zM717.70 534.87H720.52V538.20H717.70zM722.58 534.87H725.20V538.20H722.58zM717.70 553.87H720.52V557.20H717.70zM722.58 553.87H725.20V557.20H722.58zM717.70 591.87H720.52V595.20H717.70zM722.58 591.87H725.20V595.20H722.58zM717.70 610.87H720.52V614.20H717.70zM722.58 610.87H725.20V614.20H722.58zM717.70 629.87H720.52V633.20H717.70zM722.58 629.87H725.20V633.20H722.58zM717.70 648.87H720.52V652.20H717.70zM722.58 648.87H725.20V652.20H722.58zM717.70 667.87H720.52V671.20H717.70zM722.58 667.87H725.20V671.20H722.58zM717.70 686.87H720.52V690.20H717.70zM722.58 686.87H725.20V690.20H722.58zM717.70 724.87H720.52V728.20H717.70zM722.58 724.87H725.20V728.20H722.58zM717.70 743.87H720.52V747.20H717.70zM722.58 743.87H725.20V747.20H722.58zM717.70 762.87H720.52V766.20H717.70zM722.58 762.87H725.20V766.20H722.58zM717.70 781.87H720.52V785.20H717.70zM722.58 781.87H725.20V785.20H722.58zM717.70 800.87H720.52V804.20H717.70zM722.58 800.87H725.20V804.20H722.58zM717.70 819.87H720.52V823.20H717.70zM722.58 819.87H725.20V823.20H722.58zM717.70 838.87H720.52V842.20H717.70zM722.58 838.87H725.20V842.20H722.58zM717.70 857.87H720.52V861.20H717.70zM722.58 857.87H725.20V861.20H722.58zM717.70 876.87H720.52V880.20H717.70zM722.58 876.87H725.20V880.20H722.58zM717.70 895.87H720.52V899.20H717.70zM722.58 895.87H725.20V899.20H722.58zM717.70 933.87H720.52V937.20H717.70zM722.58 933.87H725.20V937.20H722.58zM717.70 952.87H720.52V956.20H717.70zM722.58 952.87H725.20V956.20H722.58zM765.70 249.87H768.52V253.20H765.70zM770.58 249.87H773.20V253.20H770.58zM765.70 268.87H768.52V272.20H765.70zM770.58 268.87H773.20V272.20H770.58zM765.70 287.87H768.52V291.20H765.70zM770.58 287.87H773.20V291.20H770.58zM765.70 325.87H768.52V329.20H765.70zM770.58 325.87H773.20V329.20H770.58zM765.70 344.87H768.52V348.20H765.70zM770.58 344.87H773.20V348.20H770.58zM765.70 382.87H768.52V386.20H765.70zM770.58 382.87H773.20V386.20H770.58zM765.70 401.87H768.52V405.20H765.70zM770.58 401.87H773.20V405.20H770.58zM765.70 420.87H768.52V424.20H765.70zM770.58 420.87H773.20V424.20H770.58zM765.70 439.87H768.52V443.20H765.70zM770.58 439.87H773.20V443.20H770.58zM765.70 458.87H768.52V462.20H765.70zM770.58 458.87H773.20V462.20H770.58zM765.70 477.87H768.52V481.20H765.70zM770.58 477.87H773.20V481.20H770.58zM765.70 515.87H768.52V519.20H765.70zM770.58 515.87H773.20V519.20H770.58zM765.70 534.87H768.52V538.20H765.70zM770.58 534.87H773.20V538.20H770.58zM765.70 553.87H768.52V557.20H765.70zM770.58 553.87H773.20V557.20H770.58zM765.70 572.87H768.52V576.20H765.70zM770.58 572.87H773.20V576.20H770.58zM765.70 591.87H768.52V595.20H765.70zM770.58 591.87H773.20V595.20H770.58zM765.70 610.87H768.52V614.20H765.70zM770.58 610.87H773.20V614.20H770.58zM765.70 629.87H768.52V633.20H765.70zM770.58 629.87H773.20V633.20H770.58zM765.70 648.87H768.52V652.20H765.70zM770.58 648.87H773.20V652.20H770.58zM765.70 667.87H768.52V671.20H765.70zM770.58 667.87H773.20V671.20H770.58zM765.70 686.87H768.52V690.20H765.70zM770.58 686.87H773.20V690.20H770.58zM765.70 724.87H768.52V728.20H765.70zM770.58 724.87H773.20V728.20H770.58zM765.70 743.87H768.52V747.20H765.70zM770.58 743.87H773.20V747.20H770.58zM765.70 762.87H768.52V766.20H765.70zM770.58 762.87H773.20V766.20H770.58zM765.70 781.87H768.52V785.20H765.70zM770.58 781.87H773.20V785.20H770.58zM765.70 800.87H768.52V804.20H765.70zM770.58 800.87H773.20V804.20H770.58zM765.70 838.87H768.52V842.20H765.70zM770.58 838.87H773.20V842.20H770.58zM765.70 857.87H768.52V861.20H765.70zM770.58 857.87H773.20V861.20H770.58zM765.70 895.87H768.52V899.20H765.70zM770.58 895.87H773.20V899.20H770.58zM765.70 914.87H768.52V918.20H765.70zM770.58 914.87H773.20V918.20H770.58zM765.70 933.87H768.52V937.20H765.70zM770.58 933.87H773.20V937.20H770.58zM765.70 952.87H768.52V956.20H765.70zM770.58 952.87H773.20V956.20H770.58zM813.70 249.87H816.52V253.20H813.70zM818.58 249.87H821.20V253.20H818.58zM813.70 268.87H816.52V272.20H813.70zM818.58 268.87H821.20V272.20H818.58zM813.70 306.87H816.52V310.20H813.70zM818.58 306.87H821.20V310.20H818.58zM813.70 325.87H816.52V329.20H813.70zM818.58 325.87H821.20V329.20H818.58zM813.70 344.87H816.52V348.20H813.70zM818.58 344.87H821.20V348.20H818.58zM813.70 363.87H816.52V367.20H813.70zM818.58 363.87H821.20V367.20H818.58zM813.70 382.87H816.52V386.20H813.70zM818.58 382.87H821.20V386.20H818.58zM813.70 401.87H816.52V405.20H813.70zM818.58 401.87H821.20V405.20H818.58zM813.70 420.87H816.52V424.20H813.70zM818.58 420.87H821.20V424.20H818.58zM813.70 439.87H816.52V443.20H813.70zM818.58 439.87H821.20V443.20H818.58zM813.70 458.87H816.52V462.20H813.70zM818.58 458.87H821.20V462.20H818.58zM813.70 477.87H816.52V481.20H813.70zM818.58 477.87H821.20V481.20H818.58zM813.70 515.87H816.52V519.20H813.70zM818.58 515.87H821.20V519.20H818.58zM813.70 534.87H816.52V538.20H813.70zM818.58 534.87H821.20V538.20H818.58zM813.70 553.87H816.52V557.20H813.70zM818.58 553.87H821.20V557.20H818.58zM813.70 572.87H816.52V576.20H813.70zM818.58 572.87H821.20V576.20H818.58zM813.70 591.87H816.52V595.20H813.70zM818.58 591.87H821.20V595.20H818.58zM813.70 629.87H816.52V633.20H813.70zM818.58 629.87H821.20V633.20H818.58zM813.70 648.87H816.52V652.20H813.70zM818.58 648.87H821.20V652.20H818.58zM813.70 686.87H816.52V690.20H813.70zM818.58 686.87H821.20V690.20H818.58zM813.70 705.87H816.52V709.20H813.70zM818.58 705.87H821.20V709.20H818.58zM813.70 724.87H816.52V728.20H813.70zM818.58 724.87H821.20V728.20H818.58zM813.70 743.87H816.52V747.20H813.70zM818.58 743.87H821.20V747.20H818.58zM813.70 762.87H816.52V766.20H813.70zM818.58 762.87H821.20V766.20H818.58zM813.70 781.87H816.52V785.20H813.70zM818.58 781.87H821.20V785.20H818.58zM813.70 819.87H816.52V823.20H813.70zM818.58 819.87H821.20V823.20H818.58zM813.70 838.87H816.52V842.20H813.70zM818.58 838.87H821.20V842.20H818.58zM813.70 857.87H816.52V861.20H813.70zM818.58 857.87H821.20V861.20H818.58zM813.70 876.87H816.52V880.20H813.70zM818.58 876.87H821.20V880.20H818.58zM813.70 895.87H816.52V899.20H813.70zM818.58 895.87H821.20V899.20H818.58zM813.70 914.87H816.52V918.20H813.70zM818.58 914.87H821.20V918.20H818.58zM813.70 933.87H816.52V937.20H813.70zM818.58 933.87H821.20V937.20H818.58zM813.70 952.87H816.52V956.20H813.70zM818.58 952.87H821.20V956.20H818.58zM861.70 249.87H864.52V253.20H861.70zM866.58 249.87H869.20V253.20H866.58zM861.70 268.87H864.52V272.20H861.70zM866.58 268.87H869.20V272.20H866.58zM861.70 306.87H864.52V310.20H861.70zM866.58 306.87H869.20V310.20H866.58zM861.70 325.87H864.52V329.20H861.70zM866.58 325.87H869.20V329.20H866.58zM861.70 344.87H864.52V348.20H861.70zM866.58 344.87H869.20V348.20H866.58zM861.70 363.87H864.52V367.20H861.70zM866.58 363.87H869.20V367.20H866.58zM861.70 382.87H864.52V386.20H861.70zM866.58 382.87H869.20V386.20H866.58zM861.70 420.87H864.52V424.20H861.70zM866.58 420.87H869.20V424.20H866.58zM861.70 439.87H864.52V443.20H861.70zM866.58 439.87H869.20V443.20H866.58zM861.70 477.87H864.52V481.20H861.70zM866.58 477.87H869.20V481.20H866.58zM861.70 496.87H864.52V500.20H861.70zM866.58 496.87H869.20V500.20H866.58zM861.70 515.87H864.52V519.20H861.70zM866.58 515.87H869.20V519.20H866.58zM861.70 534.87H864.52V538.20H861.70zM866.58 534.87H869.20V538.20H866.58zM861.70 553.87H864.52V557.20H861.70zM866.58 553.87H869.20V557.20H866.58zM861.70 572.87H864.52V576.20H861.70zM866.58 572.87H869.20V576.20H866.58zM861.70 610.87H864.52V614.20H861.70zM866.58 610.87H869.20V614.20H866.58zM861.70 629.87H864.52V633.20H861.70zM866.58 629.87H869.20V633.20H866.58zM861.70 648.87H864.52V652.20H861.70zM866.58 648.87H869.20V652.20H866.58zM861.70 667.87H864.52V671.20H861.70zM866.58 667.87H869.20V671.20H866.58zM861.70 686.87H864.52V690.20H861.70zM866.58 686.87H869.20V690.20H866.58zM861.70 705.87H864.52V709.20H861.70zM866.58 705.87H869.20V709.20H866.58zM861.70 724.87H864.52V728.20H861.70zM866.58 724.87H869.20V728.20H866.58zM861.70 743.87H864.52V747.20H861.70zM866.58 743.87H869.20V747.20H866.58zM861.70 762.87H864.52V766.20H861.70zM866.58 762.87H869.20V766.20H866.58zM861.70 781.87H864.52V785.20H861.70zM866.58 781.87H869.20V785.20H866.58zM861.70 819.87H864.52V823.20H861.70zM866.58 819.87H869.20V823.20H866.58zM861.70 838.87H864.52V842.20H861.70zM866.58 838.87H869.20V842.20H866.58zM861.70 857.87H864.52V861.20H861.70zM866.58 857.87H869.20V861.20H866.58zM861.70 876.87H864.52V880.20H861.70zM866.58 876.87H869.20V880.20H866.58zM861.70 895.87H864.52V899.20H861.70zM866.58 895.87H869.20V899.20H866.58zM861.70 933.87H864.52V937.20H861.70zM866.58 933.87H869.20V937.20H866.58zM861.70 952.87H864.52V956.20H861.70zM866.58 952.87H869.20V956.20H866.58zM909.70 268.87H912.52V272.20H909.70zM914.58 268.87H917.20V272.20H914.58zM909.70 287.87H912.52V291.20H909.70zM914.58 287.87H917.20V291.20H914.58zM909.70 306.87H912.52V310.20H909.70zM914.58 306.87H917.20V310.20H914.58zM909.70 325.87H912.52V329.20H909.70zM914.58 325.87H917.20V329.20H914.58zM909.70 344.87H912.52V348.20H909.70zM914.58 344.87H917.20V348.20H914.58zM909.70 363.87H912.52V367.20H909.70zM914.58 363.87H917.20V367.20H914.58zM909.70 401.87H912.52V405.20H909.70zM914.58 401.87H917.20V405.20H914.58zM909.70 420.87H912.52V424.20H909.70zM914.58 420.87H917.20V424.20H914.58zM909.70 439.87H912.52V443.20H909.70zM914.58 439.87H917.20V443.20H914.58zM909.70 458.87H912.52V462.20H909.70zM914.58 458.87H917.20V462.20H914.58zM909.70 477.87H912.52V481.20H909.70zM914.58 477.87H917.20V481.20H914.58zM909.70 496.87H912.52V500.20H909.70zM914.58 496.87H917.20V500.20H914.58zM909.70 515.87H912.52V519.20H909.70zM914.58 515.87H917.20V519.20H914.58zM909.70 534.87H912.52V538.20H909.70zM914.58 534.87H917.20V538.20H914.58zM909.70 553.87H912.52V557.20H909.70zM914.58 553.87H917.20V557.20H914.58zM909.70 572.87H912.52V576.20H909.70zM914.58 572.87H917.20V576.20H914.58zM909.70 610.87H912.52V614.20H909.70zM914.58 610.87H917.20V614.20H914.58zM909.70 629.87H912.52V633.20H909.70zM914.58 629.87H917.20V633.20H914.58zM909.70 648.87H912.52V652.20H909.70zM914.58 648.87H917.20V652.20H914.58zM909.70 667.87H912.52V671.20H909.70zM914.58 667.87H917.20V671.20H914.58zM909.70 686.87H912.52V690.20H909.70zM914.58 686.87H917.20V690.20H914.58zM909.70 724.87H912.52V728.20H909.70zM914.58 724.87H917.20V728.20H914.58zM909.70 743.87H912.52V747.20H909.70zM914.58 743.87H917.20V747.20H914.58zM909.70 781.87H912.52V785.20H909.70zM914.58 781.87H917.20V785.20H914.58zM909.70 800.87H912.52V804.20H909.70zM914.58 800.87H917.20V804.20H914.58zM909.70 819.87H912.52V823.20H909.70zM914.58 819.87H917.20V823.20H914.58zM909.70 838.87H912.52V842.20H909.70zM914.58 838.87H917.20V842.20H914.58zM909.70 857.87H912.52V861.20H909.70zM914.58 857.87H917.20V861.20H914.58zM909.70 876.87H912.52V880.20H909.70zM914.58 876.87H917.20V880.20H914.58zM909.70 914.87H912.52V918.20H909.70zM914.58 914.87H917.20V918.20H914.58zM909.70 933.87H912.52V937.20H909.70zM914.58 933.87H917.20V937.20H914.58zM909.70 952.87H912.52V956.20H909.70zM914.58 952.87H917.20V956.20H914.58zM957.70 249.87H960.52V253.20H957.70zM962.58 249.87H965.20V253.20H962.58zM957.70 268.87H960.52V272.20H957.70zM962.58 268.87H965.20V272.20H962.58zM957.70 287.87H960.52V291.20H957.70zM962.58 287.87H965.20V291.20H962.58zM957.70 306.87H960.52V310.20H957.70zM962.58 306.87H965.20V310.20H962.58zM957.70 325.87H960.52V329.20H957.70zM962.58 325.87H965.20V329.20H962.58zM957.70 344.87H960.52V348.20H957.70zM962.58 344.87H965.20V348.20H962.58zM957.70 363.87H960.52V367.20H957.70zM962.58 363.87H965.20V367.20H962.58zM957.70 401.87H960.52V405.20H957.70zM962.58 401.87H965.20V405.20H962.58zM957.70 420.87H960.52V424.20H957.70zM962.58 420.87H965.20V424.20H962.58zM957.70 439.87H960.52V443.20H957.70zM962.58 439.87H965.20V443.20H962.58zM957.70 458.87H960.52V462.20H957.70zM962.58 458.87H965.20V462.20H962.58zM957.70 477.87H960.52V481.20H957.70zM962.58 477.87H965.20V481.20H962.58zM957.70 515.87H960.52V519.20H957.70zM962.58 515.87H965.20V519.20H962.58zM957.70 534.87H960.52V538.20H957.70zM962.58 534.87H965.20V538.20H962.58zM957.70 572.87H960.52V576.20H957.70zM962.58 572.87H965.20V576.20H962.58zM957.70 591.87H960.52V595.20H957.70zM962.58 591.87H965.20V595.20H962.58zM957.70 610.87H960.52V614.20H957.70zM962.58 610.87H965.20V614.20H962.58zM957.70 629.87H960.52V633.20H957.70zM962.58 629.87H965.20V633.20H962.58zM957.70 648.87H960.52V652.20H957.70zM962.58 648.87H965.20V652.20H962.58zM957.70 667.87H960.52V671.20H957.70zM962.58 667.87H965.20V671.20H962.58zM957.70 705.87H960.52V709.20H957.70zM962.58 705.87H965.20V709.20H962.58zM957.70 724.87H960.52V728.20H957.70zM962.58 724.87H965.20V728.20H962.58zM957.70 743.87H960.52V747.20H957.70zM962.58 743.87H965.20V747.20H962.58zM957.70 762.87H960.52V766.20H957.70zM962.58 762.87H965.20V766.20H962.58zM957.70 781.87H960.52V785.20H957.70zM962.58 781.87H965.20V785.20H962.58zM957.70 800.87H960.52V804.20H957.70zM962.58 800.87H965.20V804.20H962.58zM957.70 819.87H960.52V823.20H957.70zM962.58 819.87H965.20V823.20H962.58zM957.70 838.87H960.52V842.20H957.70zM962.58 838.87H965.20V842.20H962.58zM957.70 857.87H960.52V861.20H957.70zM962.58 857.87H965.20V861.20H962.58zM957.70 876.87H960.52V880.20H957.70zM962.58 876.87H965.20V880.20H962.58zM957.70 914.87H960.52V918.20H957.70zM962.58 914.87H965.20V918.20H962.58zM957.70 933.87H960.52V937.20H957.70zM962.58 933.87H965.20V937.20H962.58zM957.70 952.87H960.52V956.20H957.70zM962.58 952.87H965.20V956.20H962.58zM1005.70 249.87H1008.52V253.20H1005.70zM1010.58 249.87H1013.20V253.20H1010.58zM1005.70 268.87H1008.52V272.20H1005.70zM1010.58 268.87H1013.20V272.20H1010.58zM1005.70 306.87H1008.52V310.20H1005.70zM1010.58 306.87H1013.20V310.20H1010.58zM1005.70 325.87H1008.52V329.20H1005.70zM1010.58 325.87H1013.20V329.20H1010.58zM1005.70 363.87H1008.52V367.20H1005.70zM1010.58 363.87H1013.20V367.20H1010.58zM1005.70 382.87H1008.52V386.20H1005.70zM1010.58 382.87H1013.20V386.20H1010.58zM1005.70 401.87H1008.52V405.20H1005.70zM1010.58 401.87H1013.20V405.20H1010.58zM1005.70 420.87H1008.52V424.20H1005.70zM1010.58 420.87H1013.20V424.20H1010.58zM1005.70 439.87H1008.52V443.20H1005.70zM1010.58 439.87H1013.20V443.20H1010.58zM1005.70 458.87H1008.52V462.20H1005.70zM1010.58 458.87H1013.20V462.20H1010.58zM1005.70 496.87H1008.52V500.20H1005.70zM1010.58 496.87H1013.20V500.20H1010.58zM1005.70 515.87H1008.52V519.20H1005.70zM1010.58 515.87H1013.20V519.20H1010.58zM1005.70 534.87H1008.52V538.20H1005.70zM1010.58 534.87H1013.20V538.20H1010.58zM1005.70 553.87H1008.52V557.20H1005.70zM1010.58 553.87H1013.20V557.20H1010.58zM1005.70 572.87H1008.52V576.20H1005.70zM1010.58 572.87H1013.20V576.20H1010.58zM1005.70 591.87H1008.52V595.20H1005.70zM1010.58 591.87H1013.20V595.20H1010.58zM1005.70 610.87H1008.52V614.20H1005.70zM1010.58 610.87H1013.20V614.20H1010.58zM1005.70 629.87H1008.52V633.20H1005.70zM1010.58 629.87H1013.20V633.20H1010.58zM1005.70 648.87H1008.52V652.20H1005.70zM1010.58 648.87H1013.20V652.20H1010.58zM1005.70 667.87H1008.52V671.20H1005.70zM1010.58 667.87H1013.20V671.20H1010.58zM1005.70 705.87H1008.52V709.20H1005.70zM1010.58 705.87H1013.20V709.20H1010.58zM1005.70 724.87H1008.52V728.20H1005.70zM1010.58 724.87H1013.20V728.20H1010.58zM1005.70 743.87H1008.52V747.20H1005.70zM1010.58 743.87H1013.20V747.20H1010.58zM1005.70 762.87H1008.52V766.20H1005.70zM1010.58 762.87H1013.20V766.20H1010.58zM1005.70 781.87H1008.52V785.20H1005.70zM1010.58 781.87H1013.20V785.20H1010.58zM1005.70 819.87H1008.52V823.20H1005.70zM1010.58 819.87H1013.20V823.20H1010.58zM1005.70 838.87H1008.52V842.20H1005.70zM1010.58 838.87H1013.20V842.20H1010.58zM1005.70 876.87H1008.52V880.20H1005.70zM1010.58 876.87H1013.20V880.20H1010.58zM1005.70 895.87H1008.52V899.20H1005.70zM1010.58 895.87H1013.20V899.20H1010.58zM1005.70 914.87H1008.52V918.20H1005.70zM1010.58 914.87H1013.20V918.20H1010.58zM1005.70 933.87H1008.52V937.20H1005.70zM1010.58 933.87H1013.20V937.20H1010.58zM1005.70 952.87H1008.52V956.20H1005.70zM1010.58 952.87H1013.20V956.20H1010.58zM1053.70 249.87H1056.52V253.20H1053.70zM1058.58 249.87H1061.20V253.20H1058.58zM1053.70 287.87H1056.52V291.20H1053.70zM1058.58 287.87H1061.20V291.20H1058.58zM1053.70 306.87H1056.52V310.20H1053.70zM1058.58 306.87H1061.20V310.20H1058.58zM1053.70 325.87H1056.52V329.20H1053.70zM1058.58 325.87H1061.20V329.20H1058.58zM1053.70 344.87H1056.52V348.20H1053.70zM1058.58 344.87H1061.20V348.20H1058.58zM1053.70 363.87H1056.52V367.20H1053.70zM1058.58 363.87H1061.20V367.20H1058.58zM1053.70 382.87H1056.52V386.20H1053.70zM1058.58 382.87H1061.20V386.20H1058.58zM1053.70 401.87H1056.52V405.20H1053.70zM1058.58 401.87H1061.20V405.20H1058.58zM1053.70 420.87H1056.52V424.20H1053.70zM1058.58 420.87H1061.20V424.20H1058.58zM1053.70 439.87H1056.52V443.20H1053.70zM1058.58 439.87H1061.20V443.20H1058.58zM1053.70 458.87H1056.52V462.20H1053.70zM1058.58 458.87H1061.20V462.20H1058.58zM1053.70 496.87H1056.52V500.20H1053.70zM1058.58 496.87H1061.20V500.20H1058.58zM1053.70 515.87H1056.52V519.20H1053.70zM1058.58 515.87H1061.20V519.20H1058.58zM1053.70 534.87H1056.52V538.20H1053.70zM1058.58 534.87H1061.20V538.20H1058.58zM1053.70 553.87H1056.52V557.20H1053.70zM1058.58 553.87H1061.20V557.20H1058.58zM1053.70 572.87H1056.52V576.20H1053.70zM1058.58 572.87H1061.20V576.20H1058.58zM1053.70 610.87H1056.52V614.20H1053.70zM1058.58 610.87H1061.20V614.20H1058.58zM1053.70 629.87H1056.52V633.20H1053.70zM1058.58 629.87H1061.20V633.20H1058.58zM1053.70 667.87H1056.52V671.20H1053.70zM1058.58 667.87H1061.20V671.20H1058.58zM1053.70 686.87H1056.52V690.20H1053.70zM1058.58 686.87H1061.20V690.20H1058.58zM1053.70 705.87H1056.52V709.20H1053.70zM1058.58 705.87H1061.20V709.20H1058.58zM1053.70 724.87H1056.52V728.20H1053.70zM1058.58 724.87H1061.20V728.20H1058.58zM1053.70 743.87H1056.52V747.20H1053.70zM1058.58 743.87H1061.20V747.20H1058.58zM1053.70 762.87H1056.52V766.20H1053.70zM1058.58 762.87H1061.20V766.20H1058.58zM1053.70 800.87H1056.52V804.20H1053.70zM1058.58 800.87H1061.20V804.20H1058.58zM1053.70 819.87H1056.52V823.20H1053.70zM1058.58 819.87H1061.20V823.20H1058.58zM1053.70 838.87H1056.52V842.20H1053.70zM1058.58 838.87H1061.20V842.20H1058.58zM1053.70 857.87H1056.52V861.20H1053.70zM1058.58 857.87H1061.20V861.20H1058.58zM1053.70 876.87H1056.52V880.20H1053.70zM1058.58 876.87H1061.20V880.20H1058.58zM1053.70 895.87H1056.52V899.20H1053.70zM1058.58 895.87H1061.20V899.20H1058.58zM1053.70 914.87H1056.52V918.20H1053.70zM1058.58 914.87H1061.20V918.20H1058.58zM1053.70 933.87H1056.52V937.20H1053.70zM1058.58 933.87H1061.20V937.20H1058.58zM1053.70 952.87H1056.52V956.20H1053.70zM1058.58 952.87H1061.20V956.20H1058.58zM1101.70 249.87H1104.52V253.20H1101.70zM1106.58 249.87H1109.20V253.20H1106.58zM1101.70 287.87H1104.52V291.20H1101.70zM1106.58 287.87H1109.20V291.20H1106.58zM1101.70 306.87H1104.52V310.20H1101.70zM1106.58 306.87H1109.20V310.20H1106.58zM1101.70 325.87H1104.52V329.20H1101.70zM1106.58 325.87H1109.20V329.20H1106.58zM1101.70 344.87H1104.52V348.20H1101.70zM1106.58 344.87H1109.20V348.20H1106.58zM1101.70 363.87H1104.52V367.20H1101.70zM1106.58 363.87H1109.20V367.20H1106.58zM1101.70 401.87H1104.52V405.20H1101.70zM1106.58 401.87H1109.20V405.20H1106.58z" fill="#eeeeee"/>
</svg>
</body></html>
